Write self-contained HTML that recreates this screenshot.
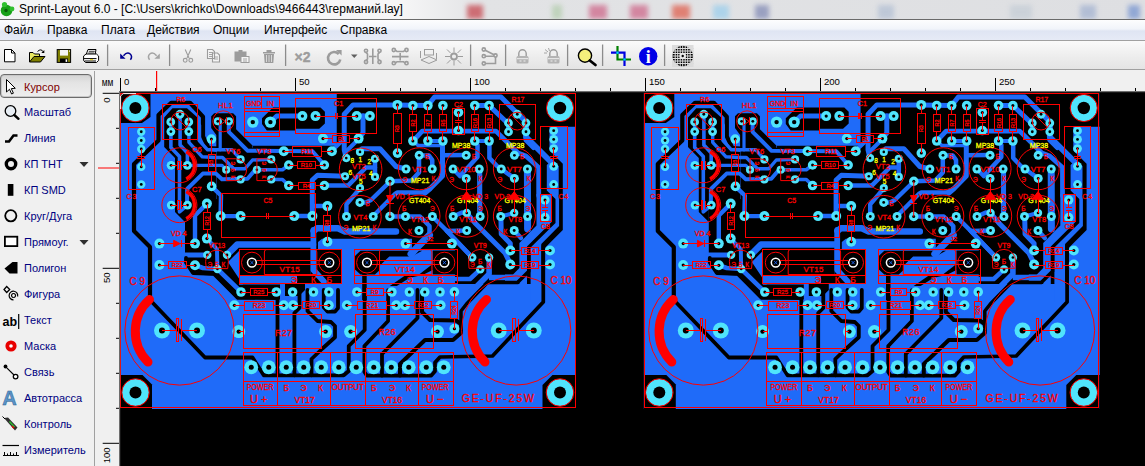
<!DOCTYPE html>
<html lang="ru"><head><meta charset="utf-8"><title>Sprint-Layout 6.0</title>
<style>
html,body{margin:0;padding:0;}
body{width:1145px;height:466px;overflow:hidden;position:relative;background:#f0f0f0;font-family:"Liberation Sans",sans-serif;font-size:12px;color:#000;}
#title{position:absolute;left:0;top:0;width:1145px;height:19px;background:linear-gradient(90deg,#f4f5f6 0,#f6f6f7 35%,#e2e3e5 42%,#dedfe2 100%);overflow:hidden;}
#title i{position:absolute;top:5px;height:14px;filter:blur(2.5px);opacity:.8;}
#title .txt{position:absolute;left:19px;top:2px;font-size:12px;white-space:nowrap;letter-spacing:0px;}
#tline{position:absolute;left:0;top:19px;width:1145px;height:1px;background:#6a6a6a;}
#menu{position:absolute;left:0;top:20px;width:1145px;height:20px;background:linear-gradient(#fdfdfe 0%,#f1f4fa 45%,#dfe5f3 55%,#e6eaf6 100%);}
#menu span{position:absolute;top:3px;font-size:12px;white-space:nowrap;}
#mline{position:absolute;left:0;top:40px;width:1145px;height:1px;background:#a0a0a0;}
#tool{position:absolute;left:0;top:41px;width:1145px;height:28px;background:linear-gradient(#fafafa,#ececec 60%,#e4e4e4);}
#tbline{position:absolute;left:0;top:69px;width:1145px;height:1px;background:#a0a0a0;}
#left{position:absolute;left:0;top:70px;width:94px;height:396px;background:#f0f0f0;}
#lsep{position:absolute;left:94px;top:71px;width:1px;height:395px;background:#a0a0a0;}
.it{position:absolute;left:24px;font-size:11px;color:#000080;white-space:nowrap;}
#curbtn{position:absolute;left:0px;top:74px;width:92px;height:24px;border:1.5px solid #6c6c6c;border-radius:4px;box-sizing:border-box;background:linear-gradient(#d4d4d4,#e4e4e4 35%,#eeeeee);box-shadow:inset 0 0 0 1px #c8c8c8;}
#svgall{position:absolute;left:0;top:0;}
</style></head><body>
<div id="title"><i style="left:467px;width:16px;background:#c85058"></i><i style="left:552px;width:10px;background:#a8c8a0;opacity:.6"></i><i style="left:589px;width:18px;background:#d07090"></i><i style="left:630px;width:18px;background:#d07090"></i><i style="left:672px;width:18px;background:#e06858"></i><i style="left:713px;width:16px;background:#a0d0ec"></i><i style="left:755px;width:14px;background:#8890b8"></i><i style="left:878px;width:16px;background:#a8b8d0;opacity:.6"></i><i style="left:1010px;width:22px;background:#b8c4d0;opacity:.5"></i><i style="left:1080px;width:16px;background:#a0b0d0;opacity:.7"></i><i style="left:1128px;width:12px;background:#7090d0;opacity:.7"></i><span class="txt">Sprint-Layout 6.0 - [C:\Users\krichko\Downloads\9466443\германий.lay]</span></div>
<div id="tline"></div>
<div id="menu"><span style="left:4px">Файл</span><span style="left:47px">Правка</span><span style="left:101px">Плата</span><span style="left:147px">Действия</span><span style="left:213px">Опции</span><span style="left:264px">Интерфейс</span><span style="left:340px">Справка</span></div>
<div id="mline"></div>
<div id="tool"></div>
<div id="tbline"></div>
<div id="left"></div>
<div id="lsep"></div>
<div id="curbtn"></div>
<span class="it" style="top:81px;color:#800000">Курсор</span>
<span class="it" style="top:106px">Масштаб</span>
<span class="it" style="top:132px">Линия</span>
<span class="it" style="top:158px">КП ТНТ</span>
<span class="it" style="top:184px">КП SMD</span>
<span class="it" style="top:210px">Круг/Дуга</span>
<span class="it" style="top:236px">Прямоуг.</span>
<span class="it" style="top:262px">Полигон</span>
<span class="it" style="top:288px">Фигура</span>
<span class="it" style="top:314px">Текст</span>
<span class="it" style="top:340px">Маска</span>
<span class="it" style="top:366px">Связь</span>
<span class="it" style="top:392px">Автотрасса</span>
<span class="it" style="top:418px">Контроль</span>
<span class="it" style="top:444px">Измеритель</span>
<svg id="svgall" width="1145" height="466" viewBox="0 0 1145 466" font-family="Liberation Sans, sans-serif">
<!-- canvas -->
<rect x="119" y="92" width="1026" height="374" fill="#000"/>
<g><rect x="120" y="93" width="456" height="316" fill="#1f6bf9"/>
<polygon points="120,93 150.5,93 150.5,117 142,123 120,123" fill="#000"/>
<polygon points="164.2,117.5 172.5,108.2 187,108.2 197.5,117.4 197.5,141 207,150.5 216.5,152 216.5,200 185,200 185,222 175,212 175,158 164.2,147" fill="#000"/>
<polygon points="336.75,93 576,93 576,126.75 549.5,126.75 549.5,150.5 562.8,163.8 562.8,230 544.8,248 544.8,284 455,284 455,249 412,249 412,238.7 322,238.7 318,242 318,249 239,249 239,284.5 280,284.5 280,299.5 237,299.5 213.75,275.5 193,274.5 185,262.5 185,199 216.8,199 216.8,147.7 253,147.7 253,145.8 336.75,145.8" fill="#000"/>
<polygon points="239,249 310.6,249 310.6,275.75 239,275.75" fill="#000"/>
<polygon points="317,249 341.5,249 341.5,284 297,284 297,276 310.6,276 310.6,249" fill="#000"/>
<polygon points="285,284 305,284 305,290 299,296 285,296" fill="#000"/>
<polygon points="354.5,256.4 360.5,250.8 422.2,250.8 411.8,256.4 389.3,256.4 379.9,265.4 379.9,269.9 374.9,274.4 366.7,274.4 366.7,300 362.2,300 362.2,274.4 360.5,274.4 354.5,268.9" fill="#000"/>
<polygon points="432.7,250.5 457.1,250.5 457.1,274.4 432.7,274.4" fill="#000"/>
<polygon points="432.7,263.9 419.7,273.9 405.8,274.9 389.8,286 396.8,286 409.8,277.8 422.7,274.9 432.7,269.9" fill="#000"/>
<polygon points="211.2,116.3 214.2,113.3 233.1,113.3 236.1,116.3 236.1,129.2 252.5,145.6 252.5,148 216.3,148 216.3,135 211.2,128" fill="#000"/>
<polygon points="262,118.2 262,123.9 266.8,130.5 296,130.5 296,128.7 319.25,128.7 324.9,123.6 324.9,111.75 320.5,107.4 273,107.4" fill="#000"/>
<polyline points="150,300 150,247 134,231 134,164 158.5,140.5 158.5,115 171.25,102.75 190,102.75 203,116.75 203,136.4 208,146.8" fill="none" stroke="#000" stroke-width="4.2" stroke-linejoin="round" stroke-linecap="round"/>
<polyline points="207,146.9 218,147.2" fill="none" stroke="#000" stroke-width="1.6" stroke-linejoin="round" stroke-linecap="butt"/>
<polyline points="270.4,122.1 276.75,116 302.4,116" fill="none" stroke="#1f6bf9" stroke-width="4.8" stroke-linejoin="round" stroke-linecap="round"/>
<polyline points="170.9,121.75 170.9,147.5 179.5,156.5 179.5,212 187.5,205.1" fill="none" stroke="#1f6bf9" stroke-width="3.6" stroke-linejoin="round" stroke-linecap="round"/>
<polyline points="180.1,114.25 180.1,145 187.4,153 187.4,165.3" fill="none" stroke="#1f6bf9" stroke-width="3.6" stroke-linejoin="round" stroke-linecap="round"/>
<polyline points="188.9,121.75 188.9,142.3 202.3,156.8 215,157.5 222.5,157.5 233.75,168.75 245,168.75 252.5,160 271.25,159.4" fill="none" stroke="#1f6bf9" stroke-width="3.4" stroke-linejoin="round" stroke-linecap="round"/>
<polyline points="199.5,125 199.5,140.8 207.6,149.8 232,149.8 240.6,159.4" fill="none" stroke="#1f6bf9" stroke-width="3.4" stroke-linejoin="round" stroke-linecap="round"/>
<polyline points="220.2,121.3 220.2,149.8" fill="none" stroke="#1f6bf9" stroke-width="3.2" stroke-linejoin="round" stroke-linecap="round"/>
<polyline points="228.8,121.3 228.8,131.8 247.8,150.8 312.5,151.25 324.4,165" fill="none" stroke="#1f6bf9" stroke-width="4" stroke-linejoin="round" stroke-linecap="round"/>
<polyline points="187.4,165.3 222,165.3 226.25,169.75" fill="none" stroke="#1f6bf9" stroke-width="3.2" stroke-linejoin="round" stroke-linecap="round"/>
<polyline points="187.1,205 187.1,189 202.8,173.6 216,173.6 222,179.3 247.5,178.75 255,170 256.9,169.75" fill="none" stroke="#1f6bf9" stroke-width="4" stroke-linejoin="round" stroke-linecap="round"/>
<polyline points="256.9,169.75 282.5,169.75 288.75,165" fill="none" stroke="#1f6bf9" stroke-width="3.5" stroke-linejoin="round" stroke-linecap="round"/>
<polyline points="271.25,179.4 282.5,179.4 288.75,185.6" fill="none" stroke="#1f6bf9" stroke-width="3.5" stroke-linejoin="round" stroke-linecap="round"/>
<polyline points="211.6,186.4 221,195.5 220.6,216.1 240.6,216.1" fill="none" stroke="#1f6bf9" stroke-width="4.4" stroke-linejoin="round" stroke-linecap="round"/>
<polyline points="397.4,104.9 353,104.9 344.25,114.25 344.25,150 346.25,158.1" fill="none" stroke="#1f6bf9" stroke-width="5" stroke-linejoin="round" stroke-linecap="round"/>
<polyline points="359,138.75 346,151.5" fill="none" stroke="#1f6bf9" stroke-width="4" stroke-linejoin="round" stroke-linecap="round"/>
<polyline points="331.25,151.25 341,142" fill="none" stroke="#1f6bf9" stroke-width="4" stroke-linejoin="round" stroke-linecap="round"/>
<polyline points="356.75,116.1 369.9,116.1" fill="none" stroke="#1f6bf9" stroke-width="5" stroke-linejoin="round" stroke-linecap="round"/>
<polyline points="363,116.1 363,133 358.6,138.6" fill="none" stroke="#1f6bf9" stroke-width="5" stroke-linejoin="round" stroke-linecap="round"/>
<polyline points="397.4,104.9 427.9,105.5 434.5,97 501,97 526,122 526,140 533.5,147.5" fill="none" stroke="#1f6bf9" stroke-width="5" stroke-linejoin="round" stroke-linecap="round"/>
<polyline points="474.75,105.5 489.1,105.5 508.5,124 508.5,131.75" fill="none" stroke="#1f6bf9" stroke-width="5" stroke-linejoin="round" stroke-linecap="round"/>
<polyline points="412.9,141.1 422.25,131.1 496,131.1 518,153 526,156 538.7,167.5 538.7,196" fill="none" stroke="#1f6bf9" stroke-width="4.8" stroke-linejoin="round" stroke-linecap="round"/>
<polyline points="427.9,141.1 442.9,141.1" fill="none" stroke="#1f6bf9" stroke-width="4" stroke-linejoin="round" stroke-linecap="round"/>
<polyline points="474.75,141.1 489.1,141.1" fill="none" stroke="#1f6bf9" stroke-width="4" stroke-linejoin="round" stroke-linecap="round"/>
<polyline points="324.4,185.6 348,185.6 366,167.5 375,167.5" fill="none" stroke="#1f6bf9" stroke-width="4.5" stroke-linejoin="round" stroke-linecap="round"/>
<polyline points="375,158.75 375,176.9" fill="none" stroke="#1f6bf9" stroke-width="4.5" stroke-linejoin="round" stroke-linecap="round"/>
<polyline points="312.3,216 312.3,180 317.5,175.25 345,176.25" fill="none" stroke="#1f6bf9" stroke-width="5" stroke-linejoin="round" stroke-linecap="round"/>
<polyline points="360,151.9 362,148.75 380,148.75 396,166.5 406,169" fill="none" stroke="#1f6bf9" stroke-width="5" stroke-linejoin="round" stroke-linecap="round"/>
<polyline points="419,155.6 419,172.5 411.5,180.5 390,181.25" fill="none" stroke="#1f6bf9" stroke-width="4.5" stroke-linejoin="round" stroke-linecap="round"/>
<polyline points="419,155.6 429,155.6 432.25,160 432.25,169" fill="none" stroke="#1f6bf9" stroke-width="4.5" stroke-linejoin="round" stroke-linecap="round"/>
<polyline points="390,181.5 371,200 366,202.5 359.6,202.5" fill="none" stroke="#1f6bf9" stroke-width="4.4" stroke-linejoin="round" stroke-linecap="round"/>
<polyline points="442.5,140.6 442.5,176 430,188.75 425,193" fill="none" stroke="#1f6bf9" stroke-width="5" stroke-linejoin="round" stroke-linecap="round"/>
<polyline points="442.5,155.25 466.25,155" fill="none" stroke="#1f6bf9" stroke-width="4.5" stroke-linejoin="round" stroke-linecap="round"/>
<polyline points="413.1,140.6 418,145.5 442.5,145.5" fill="none" stroke="#1f6bf9" stroke-width="3.5" stroke-linejoin="round" stroke-linecap="round"/>
<polyline points="474.75,140.6 477.5,145 477.5,157 460,176 453.1,169" fill="none" stroke="#1f6bf9" stroke-width="4.5" stroke-linejoin="round" stroke-linecap="round"/>
<polyline points="479.4,169 479.4,216.5" fill="none" stroke="#1f6bf9" stroke-width="4.5" stroke-linejoin="round" stroke-linecap="round"/>
<polyline points="489.4,140.6 489.4,158 497,166 501.25,169 514.4,178.4" fill="none" stroke="#1f6bf9" stroke-width="4.5" stroke-linejoin="round" stroke-linecap="round"/>
<polyline points="527.4,169.4 527.6,229" fill="none" stroke="#1f6bf9" stroke-width="7" stroke-linejoin="round" stroke-linecap="round"/>
<polyline points="526,122 526,137 553,164" fill="none" stroke="#1f6bf9" stroke-width="5.8" stroke-linejoin="round" stroke-linecap="round"/>
<polyline points="195,243.6 195,215.5 206.9,203.6" fill="none" stroke="#1f6bf9" stroke-width="4.4" stroke-linejoin="round" stroke-linecap="round"/>
<polyline points="184,255 207.3,254.9" fill="none" stroke="#1f6bf9" stroke-width="5" stroke-linejoin="round" stroke-linecap="round"/>
<polyline points="206.8,238.6 217,249.2 217.4,269" fill="none" stroke="#1f6bf9" stroke-width="4" stroke-linejoin="round" stroke-linecap="round"/>
<polyline points="195,265.3 203,268 217.4,269 241,291.9" fill="none" stroke="#1f6bf9" stroke-width="4.6" stroke-linejoin="round" stroke-linecap="round"/>
<polyline points="227,254.9 237.2,244.6 313,244.6" fill="none" stroke="#1f6bf9" stroke-width="6.5" stroke-linejoin="round" stroke-linecap="round"/>
<polygon points="228,262 239,251 239,284.4 243,284.4" fill="#1f6bf9"/>
<polyline points="313.4,230 313.4,270 328.9,287 328.9,292" fill="none" stroke="#1f6bf9" stroke-width="5.8" stroke-linejoin="round" stroke-linecap="round"/>
<polyline points="313.6,231 317,228.3 338,228.3 345,231.5 396,231.5" fill="none" stroke="#1f6bf9" stroke-width="6.5" stroke-linejoin="round" stroke-linecap="round"/>
<polyline points="313.5,286 313.5,292" fill="none" stroke="#1f6bf9" stroke-width="8" stroke-linejoin="round" stroke-linecap="butt"/>
<polyline points="327.4,206.1 313,206.1" fill="none" stroke="#1f6bf9" stroke-width="4.5" stroke-linejoin="round" stroke-linecap="round"/>
<polyline points="294.25,216.1 312.4,216.1" fill="none" stroke="#1f6bf9" stroke-width="4.5" stroke-linejoin="round" stroke-linecap="round"/>
<polyline points="346.4,216.7 346.4,204.4 360.2,188.1" fill="none" stroke="#1f6bf9" stroke-width="4.4" stroke-linejoin="round" stroke-linecap="round"/>
<polyline points="373,216.3 395,194 397.5,192.5 423,192.5 430,188.75" fill="none" stroke="#1f6bf9" stroke-width="4.4" stroke-linejoin="round" stroke-linecap="round"/>
<polyline points="389.9,216.5 405.6,216.5 420,216.5 429.5,226 429.5,235 418,246.5 413.7,253" fill="none" stroke="#1f6bf9" stroke-width="4.5" stroke-linejoin="round" stroke-linecap="round"/>
<polyline points="429.5,235 418,246.5 411,254" fill="none" stroke="#1f6bf9" stroke-width="7" stroke-linejoin="round" stroke-linecap="round"/>
<polyline points="432.5,216.5 447,231 466.9,230.5" fill="none" stroke="#1f6bf9" stroke-width="4.5" stroke-linejoin="round" stroke-linecap="round"/>
<polyline points="447,231 472.25,257.5" fill="none" stroke="#1f6bf9" stroke-width="4.5" stroke-linejoin="round" stroke-linecap="round"/>
<polyline points="453.1,216.5 462,212.5 466.75,213" fill="none" stroke="#1f6bf9" stroke-width="4.5" stroke-linejoin="round" stroke-linecap="round"/>
<polyline points="480,216.5 480,169" fill="none" stroke="#1f6bf9" stroke-width="4.5" stroke-linejoin="round" stroke-linecap="round"/>
<polyline points="500.7,216.5 514.2,213" fill="none" stroke="#1f6bf9" stroke-width="4" stroke-linejoin="round" stroke-linecap="round"/>
<polygon points="536.5,194 551.6,194 551.6,222 527,246.5 527,285 519.4,285 519.4,243 536.5,225.5" fill="#1f6bf9"/>
<polygon points="546.8,165 552,160 558.7,166 558.7,196 559.1,197 559.1,226 541.3,244 541.3,302 530.6,302 530.6,247.5 555.5,223 555.5,199 546.8,190.5" fill="#1f6bf9"/>
<polyline points="514.2,230.5 521,238" fill="none" stroke="#1f6bf9" stroke-width="4.5" stroke-linejoin="round" stroke-linecap="round"/>
<polyline points="523,275 513.5,277.5 489,277.5" fill="none" stroke="#1f6bf9" stroke-width="5.5" stroke-linejoin="round" stroke-linecap="butt"/>
<polygon points="519.4,268 527,268 527,272 517,281 505,281 505,274.5 513,274.5" fill="#1f6bf9"/>
<polyline points="487.5,282.5 466.5,304 461,311 461,324" fill="none" stroke="#000" stroke-width="3.5" stroke-linejoin="round" stroke-linecap="round"/>
<polyline points="528.8,253.75 528.8,271.25 517.5,282.5 487.5,282.5" fill="none" stroke="#000" stroke-width="3.5" stroke-linejoin="round" stroke-linecap="round"/>
<polyline points="489.1,257.5 489.1,274 461,302" fill="none" stroke="#1f6bf9" stroke-width="5.6" stroke-linejoin="round" stroke-linecap="round"/>
<polyline points="480.25,269.4 470,279 456,279" fill="none" stroke="#1f6bf9" stroke-width="4.5" stroke-linejoin="round" stroke-linecap="round"/>
<polyline points="447,231 472.25,257.5" fill="none" stroke="#1f6bf9" stroke-width="4.5" stroke-linejoin="round" stroke-linecap="round"/>
<polyline points="500.9,216.5 501.25,234 510.3,243.5 510.3,250.5" fill="none" stroke="#1f6bf9" stroke-width="5" stroke-linejoin="round" stroke-linecap="round"/>
<polyline points="466.75,213 475,223 505,253 510.3,263.7" fill="none" stroke="#1f6bf9" stroke-width="5" stroke-linejoin="round" stroke-linecap="round"/>
<polygon points="120,375 142.5,375 152,384.5 152,409 120,409" fill="#000"/>
<polygon points="542.5,385 552.5,375 576,375 576,409 542.5,409" fill="#000"/>
<polyline points="186,258 186,262.5 193,273 213.75,273.75 237.5,297.5 277.5,298 277.5,375.3" fill="none" stroke="#000" stroke-width="3.8" stroke-linejoin="round" stroke-linecap="round"/>
<polyline points="150,300 205,357.5 252.5,357.5 263.75,375.3 343.75,375.3 348.75,371 348.75,346 364.7,330 364.7,296" fill="none" stroke="#000" stroke-width="3.8" stroke-linejoin="round" stroke-linecap="round"/>
<polyline points="294.4,375.3 294.4,313 299.5,308 299.5,290" fill="none" stroke="#000" stroke-width="3.8" stroke-linejoin="round" stroke-linecap="round"/>
<polyline points="311.5,375.3 311.5,359 322.5,348.5 335,337.25 335,326 331,322 317.5,321 307.5,311 307.5,290" fill="none" stroke="#000" stroke-width="3.8" stroke-linejoin="round" stroke-linecap="round"/>
<polyline points="323.75,290 323.75,307.25 327.5,311.6 335,311.6 338,308 338,290" fill="none" stroke="#000" stroke-width="3.8" stroke-linejoin="round" stroke-linecap="round"/>
<polyline points="388.1,290 388.1,321 364.4,346 364.4,372 366.9,375.6 431.25,375.6 435,371.25 435,362.5 440,357 492.5,356 543.3,302 543.3,246" fill="none" stroke="#000" stroke-width="3.7" stroke-linejoin="round" stroke-linecap="round"/>
<polyline points="417.5,290 417.5,318 382,354 382,375.6" fill="none" stroke="#000" stroke-width="3.8" stroke-linejoin="round" stroke-linecap="round"/>
<polyline points="422,290 422,312 430,320 456,320.5 461,324 461,333 453,340 425,340 400,364 400,375.6" fill="none" stroke="#000" stroke-width="4" stroke-linejoin="round" stroke-linecap="round"/>
<circle cx="135.4" cy="108" r="13.4" fill="#50e4fc"/><circle cx="135.4" cy="108" r="6" fill="#000"/>
<circle cx="180" cy="114.25" r="4.4" fill="#50e4fc"/><circle cx="180" cy="114.25" r="1.4" fill="#000"/>
<circle cx="170.8" cy="121.9" r="4.4" fill="#50e4fc"/><circle cx="170.8" cy="121.9" r="1.4" fill="#000"/>
<circle cx="188.8" cy="121.9" r="4.4" fill="#50e4fc"/><circle cx="188.8" cy="121.9" r="1.4" fill="#000"/>
<circle cx="170.9" cy="131.6" r="4.4" fill="#50e4fc"/><circle cx="170.9" cy="131.6" r="1.4" fill="#000"/>
<circle cx="188.8" cy="131.6" r="4.4" fill="#50e4fc"/><circle cx="188.8" cy="131.6" r="1.4" fill="#000"/>
<circle cx="217.8" cy="121.3" r="4" fill="#50e4fc"/><circle cx="217.8" cy="121.3" r="1.4" fill="#000"/>
<circle cx="229" cy="121.3" r="4" fill="#50e4fc"/><circle cx="229" cy="121.3" r="1.4" fill="#000"/>
<circle cx="211.4" cy="139.1" r="4.8" fill="#50e4fc"/><circle cx="211.4" cy="139.1" r="1.5" fill="#000"/>
<circle cx="252.8" cy="122.1" r="5.7" fill="#50e4fc"/><circle cx="252.8" cy="122.1" r="2.2" fill="#000"/>
<circle cx="270.4" cy="122.1" r="5.7" fill="#50e4fc"/><circle cx="270.4" cy="122.1" r="2.2" fill="#000"/>
<circle cx="302.4" cy="116.1" r="5" fill="#50e4fc"/><circle cx="302.4" cy="116.1" r="1.6" fill="#000"/>
<circle cx="315.5" cy="116.1" r="5" fill="#50e4fc"/><circle cx="315.5" cy="116.1" r="1.6" fill="#000"/>
<circle cx="356.75" cy="116.1" r="5" fill="#50e4fc"/><circle cx="356.75" cy="116.1" r="1.6" fill="#000"/>
<circle cx="369.9" cy="116.1" r="5" fill="#50e4fc"/><circle cx="369.9" cy="116.1" r="1.6" fill="#000"/>
<circle cx="323" cy="138.6" r="5" fill="#50e4fc"/><circle cx="323" cy="138.6" r="1.6" fill="#000"/>
<circle cx="358.6" cy="138.6" r="5" fill="#50e4fc"/><circle cx="358.6" cy="138.6" r="1.6" fill="#000"/>
<circle cx="397.4" cy="104.9" r="5" fill="#50e4fc"/><circle cx="397.4" cy="104.9" r="1.6" fill="#000"/>
<circle cx="412.9" cy="105.5" r="4.8" fill="#50e4fc"/><circle cx="412.9" cy="105.5" r="1.5" fill="#000"/>
<circle cx="412.9" cy="141" r="4.8" fill="#50e4fc"/><circle cx="412.9" cy="141" r="1.5" fill="#000"/>
<circle cx="427.9" cy="105.5" r="4.8" fill="#50e4fc"/><circle cx="427.9" cy="105.5" r="1.5" fill="#000"/>
<circle cx="427.9" cy="141" r="4.8" fill="#50e4fc"/><circle cx="427.9" cy="141" r="1.5" fill="#000"/>
<circle cx="442.9" cy="105.5" r="4.8" fill="#50e4fc"/><circle cx="442.9" cy="105.5" r="1.5" fill="#000"/>
<circle cx="442.9" cy="141" r="4.8" fill="#50e4fc"/><circle cx="442.9" cy="141" r="1.5" fill="#000"/>
<circle cx="474.75" cy="105.5" r="4.8" fill="#50e4fc"/><circle cx="474.75" cy="105.5" r="1.5" fill="#000"/>
<circle cx="474.75" cy="141" r="4.8" fill="#50e4fc"/><circle cx="474.75" cy="141" r="1.5" fill="#000"/>
<circle cx="489.1" cy="105.5" r="4.8" fill="#50e4fc"/><circle cx="489.1" cy="105.5" r="1.5" fill="#000"/>
<circle cx="489.1" cy="141" r="4.8" fill="#50e4fc"/><circle cx="489.1" cy="141" r="1.5" fill="#000"/>
<circle cx="458.5" cy="112.4" r="4.8" fill="#50e4fc"/><circle cx="458.5" cy="112.4" r="1.5" fill="#000"/>
<circle cx="458.5" cy="130.5" r="4.8" fill="#50e4fc"/><circle cx="458.5" cy="130.5" r="1.5" fill="#000"/>
<circle cx="517.25" cy="114.25" r="4.4" fill="#50e4fc"/><circle cx="517.25" cy="114.25" r="1.4" fill="#000"/>
<circle cx="508.5" cy="123" r="4.4" fill="#50e4fc"/><circle cx="508.5" cy="123" r="1.4" fill="#000"/>
<circle cx="526" cy="123" r="4.4" fill="#50e4fc"/><circle cx="526" cy="123" r="1.4" fill="#000"/>
<circle cx="508.5" cy="131.75" r="4.4" fill="#50e4fc"/><circle cx="508.5" cy="131.75" r="1.4" fill="#000"/>
<circle cx="526" cy="131.75" r="4.4" fill="#50e4fc"/><circle cx="526" cy="131.75" r="1.4" fill="#000"/>
<circle cx="560" cy="108" r="13.2" fill="#50e4fc"/><circle cx="560" cy="108" r="6.2" fill="#000"/>
<circle cx="553.7" cy="130.7" r="4.4" fill="#50e4fc"/><circle cx="553.7" cy="130.7" r="1.4" fill="#000"/>
<circle cx="553.7" cy="139.4" r="4.4" fill="#50e4fc"/><circle cx="553.7" cy="139.4" r="1.4" fill="#000"/>
<circle cx="553.7" cy="148.6" r="4.4" fill="#50e4fc"/><circle cx="553.7" cy="148.6" r="1.4" fill="#000"/>
<circle cx="553.7" cy="166.3" r="4.4" fill="#50e4fc"/><circle cx="553.7" cy="166.3" r="1.4" fill="#000"/>
<circle cx="553.7" cy="184.5" r="4.4" fill="#50e4fc"/><circle cx="553.7" cy="184.5" r="1.4" fill="#000"/>
<circle cx="283.75" cy="151.25" r="5" fill="#50e4fc"/><circle cx="283.75" cy="151.25" r="1.6" fill="#000"/>
<circle cx="331.9" cy="151.25" r="5" fill="#50e4fc"/><circle cx="331.9" cy="151.25" r="1.6" fill="#000"/>
<circle cx="288.75" cy="165" r="4.75" fill="#50e4fc"/><circle cx="288.75" cy="165" r="1.5" fill="#000"/>
<circle cx="324.4" cy="165" r="4.75" fill="#50e4fc"/><circle cx="324.4" cy="165" r="1.5" fill="#000"/>
<circle cx="288.75" cy="185.6" r="4.75" fill="#50e4fc"/><circle cx="288.75" cy="185.6" r="1.5" fill="#000"/>
<circle cx="324.4" cy="185.6" r="4.75" fill="#50e4fc"/><circle cx="324.4" cy="185.6" r="1.5" fill="#000"/>
<circle cx="240.6" cy="159.4" r="4.1" fill="#50e4fc"/><circle cx="240.6" cy="159.4" r="1.3" fill="#000"/>
<circle cx="226.25" cy="169.75" r="4.1" fill="#50e4fc"/><circle cx="226.25" cy="169.75" r="1.3" fill="#000"/>
<circle cx="240.6" cy="179.4" r="4.1" fill="#50e4fc"/><circle cx="240.6" cy="179.4" r="1.3" fill="#000"/>
<circle cx="271.25" cy="159.4" r="4.1" fill="#50e4fc"/><circle cx="271.25" cy="159.4" r="1.3" fill="#000"/>
<circle cx="256.9" cy="169.75" r="4.1" fill="#50e4fc"/><circle cx="256.9" cy="169.75" r="1.3" fill="#000"/>
<circle cx="271.25" cy="179.4" r="4.1" fill="#50e4fc"/><circle cx="271.25" cy="179.4" r="1.3" fill="#000"/>
<circle cx="360" cy="151.9" r="4.1" fill="#50e4fc"/><circle cx="360" cy="151.9" r="1.3" fill="#000"/>
<circle cx="346.25" cy="158.1" r="4.1" fill="#50e4fc"/><circle cx="346.25" cy="158.1" r="1.3" fill="#000"/>
<circle cx="375" cy="158.75" r="4.1" fill="#50e4fc"/><circle cx="375" cy="158.75" r="1.3" fill="#000"/>
<circle cx="345" cy="176.25" r="4.1" fill="#50e4fc"/><circle cx="345" cy="176.25" r="1.3" fill="#000"/>
<circle cx="375" cy="176.9" r="4.1" fill="#50e4fc"/><circle cx="375" cy="176.9" r="1.3" fill="#000"/>
<circle cx="360" cy="188.1" r="4.1" fill="#50e4fc"/><circle cx="360" cy="188.1" r="1.3" fill="#000"/>
<circle cx="397.5" cy="153.1" r="4.8" fill="#50e4fc"/><circle cx="397.5" cy="153.1" r="1.5" fill="#000"/>
<circle cx="390" cy="181.25" r="4.75" fill="#50e4fc"/><circle cx="390" cy="181.25" r="1.5" fill="#000"/>
<circle cx="419.2" cy="155.3" r="4.5" fill="#50e4fc"/><circle cx="419.2" cy="155.3" r="1.4" fill="#000"/>
<circle cx="406.05" cy="169" r="4.5" fill="#50e4fc"/><circle cx="406.05" cy="169" r="1.4" fill="#000"/>
<circle cx="432.25" cy="169" r="4.5" fill="#50e4fc"/><circle cx="432.25" cy="169" r="1.4" fill="#000"/>
<circle cx="466.25" cy="155.3" r="4.5" fill="#50e4fc"/><circle cx="466.25" cy="155.3" r="1.4" fill="#000"/>
<circle cx="453.1" cy="169" r="4.5" fill="#50e4fc"/><circle cx="453.1" cy="169" r="1.4" fill="#000"/>
<circle cx="479.3" cy="169" r="4.5" fill="#50e4fc"/><circle cx="479.3" cy="169" r="1.4" fill="#000"/>
<circle cx="514.4" cy="155.3" r="4.5" fill="#50e4fc"/><circle cx="514.4" cy="155.3" r="1.4" fill="#000"/>
<circle cx="501.25" cy="169" r="4.5" fill="#50e4fc"/><circle cx="501.25" cy="169" r="1.4" fill="#000"/>
<circle cx="527.45" cy="169" r="4.5" fill="#50e4fc"/><circle cx="527.45" cy="169" r="1.4" fill="#000"/>
<circle cx="466.25" cy="178.4" r="4.5" fill="#50e4fc"/><circle cx="466.25" cy="178.4" r="1.4" fill="#000"/>
<circle cx="514.4" cy="178.4" r="4.5" fill="#50e4fc"/><circle cx="514.4" cy="178.4" r="1.4" fill="#000"/>
<circle cx="171.1" cy="165.3" r="4.4" fill="#50e4fc"/><circle cx="171.1" cy="165.3" r="1.4" fill="#000"/>
<circle cx="187.4" cy="165.3" r="4.4" fill="#50e4fc"/><circle cx="187.4" cy="165.3" r="1.4" fill="#000"/>
<circle cx="171.25" cy="205.1" r="4.4" fill="#50e4fc"/><circle cx="171.25" cy="205.1" r="1.4" fill="#000"/>
<circle cx="187.5" cy="205.1" r="4.4" fill="#50e4fc"/><circle cx="187.5" cy="205.1" r="1.4" fill="#000"/>
<circle cx="211.6" cy="186.4" r="4.8" fill="#50e4fc"/><circle cx="211.6" cy="186.4" r="1.5" fill="#000"/>
<circle cx="141.25" cy="131.75" r="4.2" fill="#50e4fc"/><circle cx="141.25" cy="131.75" r="1.4" fill="#000"/>
<circle cx="141.25" cy="140.5" r="4.2" fill="#50e4fc"/><circle cx="141.25" cy="140.5" r="1.4" fill="#000"/>
<circle cx="141.25" cy="149" r="4.2" fill="#50e4fc"/><circle cx="141.25" cy="149" r="1.4" fill="#000"/>
<circle cx="141.25" cy="166.9" r="4.2" fill="#50e4fc"/><circle cx="141.25" cy="166.9" r="1.4" fill="#000"/>
<circle cx="141.25" cy="184.4" r="4.2" fill="#50e4fc"/><circle cx="141.25" cy="184.4" r="1.4" fill="#000"/>
<circle cx="251.25" cy="367.25" r="6.9" fill="#50e4fc"/><circle cx="251.25" cy="367.25" r="2.5" fill="#000"/>
<circle cx="268.75" cy="367.25" r="6.9" fill="#50e4fc"/><circle cx="268.75" cy="367.25" r="2.5" fill="#000"/>
<circle cx="286.25" cy="367.25" r="6.9" fill="#50e4fc"/><circle cx="286.25" cy="367.25" r="2.5" fill="#000"/>
<circle cx="303.75" cy="367.25" r="6.9" fill="#50e4fc"/><circle cx="303.75" cy="367.25" r="2.5" fill="#000"/>
<circle cx="321.25" cy="367.25" r="6.9" fill="#50e4fc"/><circle cx="321.25" cy="367.25" r="2.5" fill="#000"/>
<circle cx="338.75" cy="367.25" r="6.9" fill="#50e4fc"/><circle cx="338.75" cy="367.25" r="2.5" fill="#000"/>
<circle cx="356.25" cy="367.25" r="6.9" fill="#50e4fc"/><circle cx="356.25" cy="367.25" r="2.5" fill="#000"/>
<circle cx="373.75" cy="367.25" r="6.9" fill="#50e4fc"/><circle cx="373.75" cy="367.25" r="2.5" fill="#000"/>
<circle cx="391.25" cy="367.25" r="6.9" fill="#50e4fc"/><circle cx="391.25" cy="367.25" r="2.5" fill="#000"/>
<circle cx="408.75" cy="367.25" r="6.9" fill="#50e4fc"/><circle cx="408.75" cy="367.25" r="2.5" fill="#000"/>
<circle cx="426.25" cy="367.25" r="6.9" fill="#50e4fc"/><circle cx="426.25" cy="367.25" r="2.5" fill="#000"/>
<circle cx="443.75" cy="367.25" r="6.9" fill="#50e4fc"/><circle cx="443.75" cy="367.25" r="2.5" fill="#000"/>
<circle cx="135.5" cy="392.5" r="13.4" fill="#50e4fc"/><circle cx="135.5" cy="392.5" r="6" fill="#000"/>
<circle cx="560" cy="392.5" r="13.4" fill="#50e4fc"/><circle cx="560" cy="392.5" r="6" fill="#000"/>
<circle cx="162" cy="330.5" r="8" fill="#50e4fc"/><circle cx="162" cy="330.5" r="3" fill="#000"/>
<circle cx="197" cy="330.5" r="8" fill="#50e4fc"/><circle cx="197" cy="330.5" r="3" fill="#000"/>
<circle cx="498.75" cy="330.5" r="8" fill="#50e4fc"/><circle cx="498.75" cy="330.5" r="3" fill="#000"/>
<circle cx="533.75" cy="330.5" r="8" fill="#50e4fc"/><circle cx="533.75" cy="330.5" r="3" fill="#000"/>
<circle cx="238.75" cy="331.6" r="6.5" fill="#50e4fc"/><circle cx="238.75" cy="331.6" r="2.2" fill="#000"/>
<circle cx="325.6" cy="331.6" r="6.5" fill="#50e4fc"/><circle cx="325.6" cy="331.6" r="2.2" fill="#000"/>
<circle cx="350.6" cy="331.6" r="6.5" fill="#50e4fc"/><circle cx="350.6" cy="331.6" r="2.2" fill="#000"/>
<circle cx="437.5" cy="331.6" r="6.5" fill="#50e4fc"/><circle cx="437.5" cy="331.6" r="2.2" fill="#000"/>
<circle cx="234.4" cy="305.3" r="5" fill="#50e4fc"/><circle cx="234.4" cy="305.3" r="1.6" fill="#000"/>
<circle cx="283.75" cy="305.3" r="5" fill="#50e4fc"/><circle cx="283.75" cy="305.3" r="1.6" fill="#000"/>
<circle cx="293.1" cy="305.3" r="5" fill="#50e4fc"/><circle cx="293.1" cy="305.3" r="1.6" fill="#000"/>
<circle cx="328.75" cy="305.3" r="5" fill="#50e4fc"/><circle cx="328.75" cy="305.3" r="1.6" fill="#000"/>
<circle cx="346.9" cy="305.3" r="5" fill="#50e4fc"/><circle cx="346.9" cy="305.3" r="1.6" fill="#000"/>
<circle cx="396.25" cy="305.3" r="5" fill="#50e4fc"/><circle cx="396.25" cy="305.3" r="1.6" fill="#000"/>
<circle cx="405" cy="305.3" r="5" fill="#50e4fc"/><circle cx="405" cy="305.3" r="1.6" fill="#000"/>
<circle cx="440.6" cy="305.3" r="5" fill="#50e4fc"/><circle cx="440.6" cy="305.3" r="1.6" fill="#000"/>
<circle cx="454.4" cy="328.75" r="5" fill="#50e4fc"/><circle cx="454.4" cy="328.75" r="1.6" fill="#000"/>
<circle cx="241" cy="292" r="4.8" fill="#50e4fc"/><circle cx="241" cy="292" r="1.5" fill="#000"/>
<circle cx="276.3" cy="292" r="4.8" fill="#50e4fc"/><circle cx="276.3" cy="292" r="1.5" fill="#000"/>
<circle cx="292.6" cy="292" r="4.8" fill="#50e4fc"/><circle cx="292.6" cy="292" r="1.5" fill="#000"/>
<circle cx="313.5" cy="292" r="4.8" fill="#50e4fc"/><circle cx="313.5" cy="292" r="1.5" fill="#000"/>
<circle cx="328.9" cy="292" r="4.8" fill="#50e4fc"/><circle cx="328.9" cy="292" r="1.5" fill="#000"/>
<circle cx="356.9" cy="292" r="4.8" fill="#50e4fc"/><circle cx="356.9" cy="292" r="1.5" fill="#000"/>
<circle cx="391.9" cy="292" r="4.8" fill="#50e4fc"/><circle cx="391.9" cy="292" r="1.5" fill="#000"/>
<circle cx="409.4" cy="292" r="4.8" fill="#50e4fc"/><circle cx="409.4" cy="292" r="1.5" fill="#000"/>
<circle cx="424.75" cy="292" r="4.8" fill="#50e4fc"/><circle cx="424.75" cy="292" r="1.5" fill="#000"/>
<circle cx="440" cy="292" r="4.8" fill="#50e4fc"/><circle cx="440" cy="292" r="1.5" fill="#000"/>
<circle cx="159.4" cy="243.6" r="5" fill="#50e4fc"/><circle cx="159.4" cy="243.6" r="1.6" fill="#000"/>
<circle cx="195" cy="243.6" r="5" fill="#50e4fc"/><circle cx="195" cy="243.6" r="1.6" fill="#000"/>
<circle cx="159.4" cy="265" r="5" fill="#50e4fc"/><circle cx="159.4" cy="265" r="1.6" fill="#000"/>
<circle cx="195" cy="265.3" r="5" fill="#50e4fc"/><circle cx="195" cy="265.3" r="1.6" fill="#000"/>
<circle cx="206.9" cy="203.6" r="5" fill="#50e4fc"/><circle cx="206.9" cy="203.6" r="1.6" fill="#000"/>
<circle cx="206.9" cy="238.6" r="5" fill="#50e4fc"/><circle cx="206.9" cy="238.6" r="1.6" fill="#000"/>
<circle cx="220.6" cy="216.1" r="5" fill="#50e4fc"/><circle cx="220.6" cy="216.1" r="1.6" fill="#000"/>
<circle cx="240.6" cy="216.1" r="5" fill="#50e4fc"/><circle cx="240.6" cy="216.1" r="1.6" fill="#000"/>
<circle cx="294.25" cy="216.1" r="5" fill="#50e4fc"/><circle cx="294.25" cy="216.1" r="1.6" fill="#000"/>
<circle cx="312.4" cy="216.1" r="5" fill="#50e4fc"/><circle cx="312.4" cy="216.1" r="1.6" fill="#000"/>
<circle cx="327.4" cy="206.1" r="5" fill="#50e4fc"/><circle cx="327.4" cy="206.1" r="1.6" fill="#000"/>
<circle cx="327.4" cy="241.75" r="5" fill="#50e4fc"/><circle cx="327.4" cy="241.75" r="1.6" fill="#000"/>
<circle cx="359.9" cy="202.4" r="4.5" fill="#50e4fc"/><circle cx="359.9" cy="202.4" r="1.4" fill="#000"/>
<circle cx="346.5" cy="216.5" r="4.5" fill="#50e4fc"/><circle cx="346.5" cy="216.5" r="1.4" fill="#000"/>
<circle cx="373.25" cy="216.5" r="4.5" fill="#50e4fc"/><circle cx="373.25" cy="216.5" r="1.4" fill="#000"/>
<circle cx="389.9" cy="216.5" r="4.75" fill="#50e4fc"/><circle cx="389.9" cy="216.5" r="1.5" fill="#000"/>
<circle cx="405.5" cy="216.5" r="4.5" fill="#50e4fc"/><circle cx="405.5" cy="216.5" r="1.4" fill="#000"/>
<circle cx="432.4" cy="216.5" r="4.5" fill="#50e4fc"/><circle cx="432.4" cy="216.5" r="1.4" fill="#000"/>
<circle cx="419" cy="230.5" r="4.5" fill="#50e4fc"/><circle cx="419" cy="230.5" r="1.4" fill="#000"/>
<circle cx="453.25" cy="216.5" r="4.5" fill="#50e4fc"/><circle cx="453.25" cy="216.5" r="1.4" fill="#000"/>
<circle cx="480.15" cy="216.5" r="4.5" fill="#50e4fc"/><circle cx="480.15" cy="216.5" r="1.4" fill="#000"/>
<circle cx="466.75" cy="230.5" r="4.5" fill="#50e4fc"/><circle cx="466.75" cy="230.5" r="1.4" fill="#000"/>
<circle cx="500.7" cy="216.5" r="4.5" fill="#50e4fc"/><circle cx="500.7" cy="216.5" r="1.4" fill="#000"/>
<circle cx="527.6" cy="216.5" r="4.5" fill="#50e4fc"/><circle cx="527.6" cy="216.5" r="1.4" fill="#000"/>
<circle cx="514.2" cy="230.5" r="4.5" fill="#50e4fc"/><circle cx="514.2" cy="230.5" r="1.4" fill="#000"/>
<circle cx="466.75" cy="213" r="4.2" fill="#50e4fc"/><circle cx="466.75" cy="213" r="1.3" fill="#000"/>
<circle cx="514.2" cy="213" r="4.2" fill="#50e4fc"/><circle cx="514.2" cy="213" r="1.3" fill="#000"/>
<circle cx="405.6" cy="243.6" r="5" fill="#50e4fc"/><circle cx="405.6" cy="243.6" r="1.6" fill="#000"/>
<circle cx="451.9" cy="243.6" r="5" fill="#50e4fc"/><circle cx="451.9" cy="243.6" r="1.6" fill="#000"/>
<circle cx="545" cy="199.9" r="4.6" fill="#50e4fc"/><circle cx="545" cy="199.9" r="1.5" fill="#000"/>
<circle cx="545" cy="217.4" r="4.6" fill="#50e4fc"/><circle cx="545" cy="217.4" r="1.5" fill="#000"/>
<circle cx="207.3" cy="254.9" r="4.2" fill="#50e4fc"/><circle cx="207.3" cy="254.9" r="1.3" fill="#000"/>
<circle cx="227" cy="254.9" r="4.2" fill="#50e4fc"/><circle cx="227" cy="254.9" r="1.3" fill="#000"/>
<circle cx="217.4" cy="269" r="4.2" fill="#50e4fc"/><circle cx="217.4" cy="269" r="1.3" fill="#000"/>
<circle cx="472.25" cy="257.5" r="4.2" fill="#50e4fc"/><circle cx="472.25" cy="257.5" r="1.3" fill="#000"/>
<circle cx="489.1" cy="257.5" r="4.2" fill="#50e4fc"/><circle cx="489.1" cy="257.5" r="1.3" fill="#000"/>
<circle cx="480.25" cy="269.4" r="4.2" fill="#50e4fc"/><circle cx="480.25" cy="269.4" r="1.3" fill="#000"/>
<circle cx="510.3" cy="250.5" r="5" fill="#50e4fc"/><circle cx="510.3" cy="250.5" r="1.6" fill="#000"/>
<circle cx="510.3" cy="264.5" r="5" fill="#50e4fc"/><circle cx="510.3" cy="264.5" r="1.6" fill="#000"/>
<circle cx="550" cy="250.5" r="5" fill="#50e4fc"/><circle cx="550" cy="250.5" r="1.6" fill="#000"/>
<circle cx="550" cy="264.5" r="5" fill="#50e4fc"/><circle cx="550" cy="264.5" r="1.6" fill="#000"/>
<circle cx="454.4" cy="291.9" r="4.8" fill="#50e4fc"/><circle cx="454.4" cy="291.9" r="1.5" fill="#000"/>
<circle cx="135.4" cy="108" r="13.8" fill="none" stroke="#ff0000" stroke-width="1"/>
<circle cx="560" cy="108" r="13.6" fill="none" stroke="#ff0000" stroke-width="1"/>
<rect x="162.25" y="104.25" width="35.35" height="34.75" fill="none" stroke="#ff0000" stroke-width="1" shape-rendering="crispEdges"/>
<circle cx="180" cy="121" r="9" fill="none" stroke="#ff0000" stroke-width="1"/>
<polyline points="173.5,114.5 186.5,127.5" fill="none" stroke="#ff0000" stroke-width="1"/>
<text x="176.3" y="102.3" font-size="7" fill="#ff0000" stroke="#ff0000" stroke-width=".3" text-anchor="start" font-weight="normal">R6</text>
<circle cx="135.5" cy="392.5" r="13.8" fill="none" stroke="#ff0000" stroke-width="1"/>
<circle cx="560" cy="392.5" r="13.8" fill="none" stroke="#ff0000" stroke-width="1"/>
<rect x="120.5" y="93.5" width="454.5" height="314" fill="none" stroke="#ff0000" stroke-width="1" shape-rendering="crispEdges"/>
<rect x="128" y="127.4" width="26.5" height="61.6" fill="none" stroke="#ff0000" stroke-width="1" shape-rendering="crispEdges"/>
<polyline points="141.25,149 141.25,166.9" fill="none" stroke="#ff0000" stroke-width="1" shape-rendering="crispEdges"/>
<polyline points="137.3,156 145.2,156" fill="none" stroke="#ff0000" stroke-width="1" shape-rendering="crispEdges"/>
<polyline points="137.3,158 145.2,158" fill="none" stroke="#ff0000" stroke-width="1" shape-rendering="crispEdges"/>
<text x="126.5" y="199" font-size="7" fill="#ff0000" stroke="#ff0000" stroke-width=".3" text-anchor="start" font-weight="normal" letter-spacing="1">C3</text>
<circle cx="223.3" cy="121.3" r="10.5" fill="none" stroke="#ff0000" stroke-width="1"/>
<path d="M219.6,117.4 L219.6,125.2 L225.3,121.3 Z" fill="none" stroke="#ff0000" stroke-width="1" stroke-linecap="butt"/>
<polyline points="226,117.4 226,125.2" fill="none" stroke="#ff0000" stroke-width="1" shape-rendering="crispEdges"/>
<text x="218" y="108" font-size="7.8" fill="#ff0000" stroke="#ff0000" stroke-width=".3" text-anchor="start" font-weight="normal" letter-spacing="0.3">HL1</text>
<rect x="244.2" y="96.75" width="35.5" height="39.45" fill="none" stroke="#ff0000" stroke-width="1" shape-rendering="crispEdges"/>
<polyline points="244.2,108.3 279.7,108.3" fill="none" stroke="#ff0000" stroke-width="1" shape-rendering="crispEdges"/>
<polyline points="244.2,111.5 279.7,111.5" fill="none" stroke="#ff0000" stroke-width="1" shape-rendering="crispEdges"/>
<polyline points="244.2,132.3 279.7,132.3" fill="none" stroke="#ff0000" stroke-width="1" shape-rendering="crispEdges"/>
<polyline points="261.5,96.75 261.5,108.3" fill="none" stroke="#ff0000" stroke-width="1" shape-rendering="crispEdges"/>
<text x="246" y="105.8" font-size="7" fill="#ff0000" stroke="#ff0000" stroke-width=".3" text-anchor="start" font-weight="normal">GND</text>
<text x="266.5" y="105.8" font-size="7.5" fill="#ff0000" stroke="#ff0000" stroke-width=".3" text-anchor="start" font-weight="normal">IN</text>
<rect x="295.5" y="98" width="81.25" height="35.6" fill="none" stroke="#ff0000" stroke-width="1" shape-rendering="crispEdges"/>
<polyline points="315.5,116.1 356.75,116.1" fill="none" stroke="#ff0000" stroke-width="1" shape-rendering="crispEdges"/>
<polyline points="335.4,113 335.4,119.3" fill="none" stroke="#ff0000" stroke-width="1.4" shape-rendering="crispEdges"/>
<polyline points="337.4,113 337.4,119.3" fill="none" stroke="#ff0000" stroke-width="1" shape-rendering="crispEdges"/>
<text x="334" y="106.3" font-size="7.3" fill="#ff0000" stroke="#ff0000" stroke-width=".3" text-anchor="start" font-weight="normal">C1</text>
<rect x="332.4" y="135.4" width="17.5" height="6.9" fill="none" stroke="#ff0000" stroke-width="1" shape-rendering="crispEdges"/>
<polyline points="323,138.6 332.4,138.6" fill="none" stroke="#ff0000" stroke-width="1" shape-rendering="crispEdges"/>
<polyline points="349.9,138.6 358.6,138.6" fill="none" stroke="#ff0000" stroke-width="1" shape-rendering="crispEdges"/>
<text x="341.15" y="140.83" font-size="5.5" fill="#ff0000" stroke="#ff0000" stroke-width=".3" text-anchor="middle" font-weight="normal">R1</text>
<rect x="393.2" y="113.6" width="8.4" height="30" fill="none" stroke="#ff0000" stroke-width="1" shape-rendering="crispEdges"/>
<polyline points="397.4,104.9 397.4,113.6" fill="none" stroke="#ff0000" stroke-width="1" shape-rendering="crispEdges"/>
<polyline points="397.4,143.6 397.4,153.1" fill="none" stroke="#ff0000" stroke-width="1" shape-rendering="crispEdges"/>
<text x="399.38" y="128.6" font-size="5.5" fill="#ff0000" stroke="#ff0000" stroke-width=".3" text-anchor="middle" font-weight="normal" transform="rotate(-90 399.38 128.6)">R3</text>
<rect x="409.3" y="114.25" width="7.2" height="17.5" fill="none" stroke="#ff0000" stroke-width="1" shape-rendering="crispEdges"/>
<polyline points="412.9,105.5 412.9,114.25" fill="none" stroke="#ff0000" stroke-width="1" shape-rendering="crispEdges"/>
<polyline points="412.9,131.75 412.9,141" fill="none" stroke="#ff0000" stroke-width="1" shape-rendering="crispEdges"/>
<text x="414.88" y="123" font-size="5.5" fill="#ff0000" stroke="#ff0000" stroke-width=".3" text-anchor="middle" font-weight="normal" transform="rotate(-90 414.88 123)">R2</text>
<rect x="424.3" y="114.25" width="7.2" height="17.5" fill="none" stroke="#ff0000" stroke-width="1" shape-rendering="crispEdges"/>
<polyline points="427.9,105.5 427.9,114.25" fill="none" stroke="#ff0000" stroke-width="1" shape-rendering="crispEdges"/>
<polyline points="427.9,131.75 427.9,141" fill="none" stroke="#ff0000" stroke-width="1" shape-rendering="crispEdges"/>
<text x="429.88" y="123" font-size="5.5" fill="#ff0000" stroke="#ff0000" stroke-width=".3" text-anchor="middle" font-weight="normal" transform="rotate(-90 429.88 123)">R7</text>
<rect x="439.3" y="114.25" width="7.2" height="17.5" fill="none" stroke="#ff0000" stroke-width="1" shape-rendering="crispEdges"/>
<polyline points="442.9,105.5 442.9,114.25" fill="none" stroke="#ff0000" stroke-width="1" shape-rendering="crispEdges"/>
<polyline points="442.9,131.75 442.9,141" fill="none" stroke="#ff0000" stroke-width="1" shape-rendering="crispEdges"/>
<text x="444.88" y="123" font-size="5.5" fill="#ff0000" stroke="#ff0000" stroke-width=".3" text-anchor="middle" font-weight="normal" transform="rotate(-90 444.88 123)">R5</text>
<rect x="471.15" y="114.25" width="7.2" height="17.5" fill="none" stroke="#ff0000" stroke-width="1" shape-rendering="crispEdges"/>
<polyline points="474.75,105.5 474.75,114.25" fill="none" stroke="#ff0000" stroke-width="1" shape-rendering="crispEdges"/>
<polyline points="474.75,131.75 474.75,141" fill="none" stroke="#ff0000" stroke-width="1" shape-rendering="crispEdges"/>
<text x="476.73" y="123" font-size="5.5" fill="#ff0000" stroke="#ff0000" stroke-width=".3" text-anchor="middle" font-weight="normal" transform="rotate(-90 476.73 123)">R16</text>
<rect x="485.5" y="114.25" width="7.2" height="17.5" fill="none" stroke="#ff0000" stroke-width="1" shape-rendering="crispEdges"/>
<polyline points="489.1,105.5 489.1,114.25" fill="none" stroke="#ff0000" stroke-width="1" shape-rendering="crispEdges"/>
<polyline points="489.1,131.75 489.1,141" fill="none" stroke="#ff0000" stroke-width="1" shape-rendering="crispEdges"/>
<text x="491.08" y="123" font-size="5.5" fill="#ff0000" stroke="#ff0000" stroke-width=".3" text-anchor="middle" font-weight="normal" transform="rotate(-90 491.08 123)">R13</text>
<rect x="452.25" y="108.6" width="12.5" height="26.3" fill="none" stroke="#ff0000" stroke-width="1" shape-rendering="crispEdges"/>
<polyline points="458.5,112.4 458.5,120.2" fill="none" stroke="#ff0000" stroke-width="1" shape-rendering="crispEdges"/>
<polyline points="458.5,122.8 458.5,130.5" fill="none" stroke="#ff0000" stroke-width="1" shape-rendering="crispEdges"/>
<polyline points="454.7,120.2 462.3,120.2" fill="none" stroke="#ff0000" stroke-width="1" shape-rendering="crispEdges"/>
<polyline points="454.7,122.8 462.3,122.8" fill="none" stroke="#ff0000" stroke-width="1" shape-rendering="crispEdges"/>
<text x="454" y="106.6" font-size="7" fill="#ff0000" stroke="#ff0000" stroke-width=".3" text-anchor="start" font-weight="normal">C2</text>
<rect x="499.75" y="104.25" width="35.65" height="35" fill="none" stroke="#ff0000" stroke-width="1" shape-rendering="crispEdges"/>
<circle cx="517.25" cy="121.1" r="8.9" fill="none" stroke="#ff0000" stroke-width="1"/>
<polyline points="511,114.8 523.6,127.5" fill="none" stroke="#ff0000" stroke-width="1"/>
<text x="511.6" y="102.4" font-size="7" fill="#ff0000" stroke="#ff0000" stroke-width=".3" text-anchor="start" font-weight="normal">R17</text>
<rect x="540.6" y="126.75" width="26.6" height="61.45" fill="none" stroke="#ff0000" stroke-width="1" shape-rendering="crispEdges"/>
<polyline points="553.75,148.1 553.75,165.6" fill="none" stroke="#ff0000" stroke-width="1" shape-rendering="crispEdges"/>
<polyline points="550,156.3 557.6,156.3" fill="none" stroke="#ff0000" stroke-width="1" shape-rendering="crispEdges"/>
<polyline points="550,158.6 557.6,158.6" fill="none" stroke="#ff0000" stroke-width="1" shape-rendering="crispEdges"/>
<text x="558.5" y="198.5" font-size="7" fill="#ff0000" stroke="#ff0000" stroke-width=".3" text-anchor="start" font-weight="normal" letter-spacing="0.8">C4</text>
<rect x="292.5" y="146.9" width="29.4" height="9.1" fill="none" stroke="#ff0000" stroke-width="1" shape-rendering="crispEdges"/>
<polyline points="283.75,151.25 292.5,151.25" fill="none" stroke="#ff0000" stroke-width="1" shape-rendering="crispEdges"/>
<polyline points="321.9,151.25 331.9,151.25" fill="none" stroke="#ff0000" stroke-width="1" shape-rendering="crispEdges"/>
<text x="307.2" y="153.97" font-size="7" fill="#ff0000" stroke="#ff0000" stroke-width=".3" text-anchor="middle" font-weight="normal">R11</text>
<rect x="297.5" y="161.5" width="17.5" height="7" fill="none" stroke="#ff0000" stroke-width="1" shape-rendering="crispEdges"/>
<polyline points="288.75,165 297.5,165" fill="none" stroke="#ff0000" stroke-width="1" shape-rendering="crispEdges"/>
<polyline points="315,165 324.4,165" fill="none" stroke="#ff0000" stroke-width="1" shape-rendering="crispEdges"/>
<text x="306.25" y="167.16" font-size="6" fill="#ff0000" stroke="#ff0000" stroke-width=".3" text-anchor="middle" font-weight="normal">R10</text>
<rect x="298.1" y="182.3" width="16.9" height="7" fill="none" stroke="#ff0000" stroke-width="1" shape-rendering="crispEdges"/>
<polyline points="288.75,185.6 298.1,185.6" fill="none" stroke="#ff0000" stroke-width="1" shape-rendering="crispEdges"/>
<polyline points="315,185.6 324.4,185.6" fill="none" stroke="#ff0000" stroke-width="1" shape-rendering="crispEdges"/>
<text x="306.55" y="187.96" font-size="6" fill="#ff0000" stroke="#ff0000" stroke-width=".3" text-anchor="middle" font-weight="normal">R4</text>
<path d="M226.25,158.75 H235.75 A10.9,10.9 0 0 1 235.75,180.6 H226.25 Z" fill="none" stroke="#ff0000" stroke-width="1" stroke-linecap="butt"/>
<text x="225.75" y="153.8" font-size="7.5" fill="#ff0000" stroke="#ff0000" stroke-width=".3" text-anchor="start" font-weight="normal" letter-spacing="0.4">VT6</text>
<text x="231.25" y="161.5" font-size="5" fill="#ff0000" stroke="#ff0000" stroke-width=".3" text-anchor="start" font-weight="normal" transform="rotate(90 231.25 161.5)">Э</text>
<text x="231.25" y="168.5" font-size="5" fill="#ff0000" stroke="#ff0000" stroke-width=".3" text-anchor="start" font-weight="normal" transform="rotate(90 231.25 168.5)">Б</text>
<text x="231.25" y="175.5" font-size="5" fill="#ff0000" stroke="#ff0000" stroke-width=".3" text-anchor="start" font-weight="normal" transform="rotate(90 231.25 175.5)">К</text>
<path d="M256.9,158.75 H266.4 A10.9,10.9 0 0 1 266.4,180.6 H256.9 Z" fill="none" stroke="#ff0000" stroke-width="1" stroke-linecap="butt"/>
<text x="256.4" y="153.8" font-size="7.5" fill="#ff0000" stroke="#ff0000" stroke-width=".3" text-anchor="start" font-weight="normal" letter-spacing="0.4">VT3</text>
<text x="261.9" y="161.5" font-size="5" fill="#ff0000" stroke="#ff0000" stroke-width=".3" text-anchor="start" font-weight="normal" transform="rotate(90 261.9 161.5)">Э</text>
<text x="261.9" y="168.5" font-size="5" fill="#ff0000" stroke="#ff0000" stroke-width=".3" text-anchor="start" font-weight="normal" transform="rotate(90 261.9 168.5)">Б</text>
<text x="261.9" y="175.5" font-size="5" fill="#ff0000" stroke="#ff0000" stroke-width=".3" text-anchor="start" font-weight="normal" transform="rotate(90 261.9 175.5)">К</text>
<rect x="208" y="154.4" width="7" height="16.85" fill="none" stroke="#ff0000" stroke-width="1" shape-rendering="crispEdges"/>
<polyline points="211.5,139.1 211.5,154.4" fill="none" stroke="#ff0000" stroke-width="1" shape-rendering="crispEdges"/>
<polyline points="211.5,171.25 211.5,186.4" fill="none" stroke="#ff0000" stroke-width="1" shape-rendering="crispEdges"/>
<text x="213.3" y="162.825" font-size="5" fill="#ff0000" stroke="#ff0000" stroke-width=".3" text-anchor="middle" font-weight="normal" transform="rotate(-90 213.3 162.825)">R3</text>
<circle cx="179.4" cy="165.3" r="17.5" fill="none" stroke="#ff0000" stroke-width="1"/>
<polyline points="171.1,165.3 177.3,165.3" fill="none" stroke="#ff0000" stroke-width="1" shape-rendering="crispEdges"/>
<polyline points="181.4,165.3 187.4,165.3" fill="none" stroke="#ff0000" stroke-width="1" shape-rendering="crispEdges"/>
<rect x="177.3" y="161.1" width="1.9" height="8.4" fill="none" stroke="#ff0000" stroke-width="1" shape-rendering="crispEdges"/>
<polyline points="181.4,161.1 181.4,169.5" fill="none" stroke="#ff0000" stroke-width="1" shape-rendering="crispEdges"/>
<path d="M186.2,151.70000000000002 A15.3,15.3 0 0 1 186.2,178.9" fill="none" stroke="#ff0000" stroke-width="3.4" stroke-linecap="butt"/>
<text x="192" y="151.8" font-size="7.5" fill="#ff0000" stroke="#ff0000" stroke-width=".3" text-anchor="start" font-weight="normal">C6</text>
<circle cx="179.4" cy="205.1" r="17.5" fill="none" stroke="#ff0000" stroke-width="1"/>
<polyline points="171.1,205.1 177.3,205.1" fill="none" stroke="#ff0000" stroke-width="1" shape-rendering="crispEdges"/>
<polyline points="181.4,205.1 187.4,205.1" fill="none" stroke="#ff0000" stroke-width="1" shape-rendering="crispEdges"/>
<rect x="177.3" y="200.9" width="1.9" height="8.4" fill="none" stroke="#ff0000" stroke-width="1" shape-rendering="crispEdges"/>
<polyline points="181.4,200.9 181.4,209.3" fill="none" stroke="#ff0000" stroke-width="1" shape-rendering="crispEdges"/>
<path d="M186.2,191.5 A15.3,15.3 0 0 1 186.2,218.7" fill="none" stroke="#ff0000" stroke-width="3.4" stroke-linecap="butt"/>
<text x="192" y="191.6" font-size="7.5" fill="#ff0000" stroke="#ff0000" stroke-width=".3" text-anchor="start" font-weight="normal">C7</text>
<rect x="221.25" y="193.75" width="94.25" height="43.95" fill="none" stroke="#ff0000" stroke-width="1" shape-rendering="crispEdges"/>
<polyline points="240.6,216.1 294.25,216.1" fill="none" stroke="#ff0000" stroke-width="1" shape-rendering="crispEdges"/>
<polyline points="266.5,213 266.5,219.3" fill="none" stroke="#ff0000" stroke-width="1.4" shape-rendering="crispEdges"/>
<polyline points="268.4,213 268.4,219.3" fill="none" stroke="#ff0000" stroke-width="1" shape-rendering="crispEdges"/>
<text x="263.5" y="203.2" font-size="7" fill="#ff0000" stroke="#ff0000" stroke-width=".3" text-anchor="start" font-weight="normal">C5</text>
<rect x="203.7" y="212.4" width="7" height="16.85" fill="none" stroke="#ff0000" stroke-width="1" shape-rendering="crispEdges"/>
<polyline points="207.2,203.6 207.2,212.4" fill="none" stroke="#ff0000" stroke-width="1" shape-rendering="crispEdges"/>
<polyline points="207.2,229.25 207.2,238.6" fill="none" stroke="#ff0000" stroke-width="1" shape-rendering="crispEdges"/>
<text x="209" y="220.825" font-size="5" fill="#ff0000" stroke="#ff0000" stroke-width=".3" text-anchor="middle" font-weight="normal" transform="rotate(-90 209 220.825)">R12</text>
<rect x="323.9" y="215" width="7" height="16" fill="none" stroke="#ff0000" stroke-width="1" shape-rendering="crispEdges"/>
<polyline points="327.4,206.1 327.4,215" fill="none" stroke="#ff0000" stroke-width="1" shape-rendering="crispEdges"/>
<polyline points="327.4,231 327.4,241.75" fill="none" stroke="#ff0000" stroke-width="1" shape-rendering="crispEdges"/>
<text x="329.2" y="223" font-size="5" fill="#ff0000" stroke="#ff0000" stroke-width=".3" text-anchor="middle" font-weight="normal" transform="rotate(-90 329.2 223)">R8</text>
<polyline points="159.4,243.6 195,243.6" fill="none" stroke="#ff0000" stroke-width="1" shape-rendering="crispEdges"/>
<path d="M173.7,240.3 L173.7,246.9 L180,243.6 Z" fill="#ff0000" stroke="#ff0000" stroke-width="1" stroke-linecap="butt"/>
<polyline points="181,240 181,247.2" fill="none" stroke="#ff0000" stroke-width="1" shape-rendering="crispEdges"/>
<text x="171" y="236" font-size="7" fill="#ff0000" stroke="#ff0000" stroke-width=".3" text-anchor="start" font-weight="normal">VD 4</text>
<rect x="168.5" y="261.9" width="17.75" height="6.85" fill="none" stroke="#ff0000" stroke-width="1" shape-rendering="crispEdges"/>
<polyline points="159.4,265.3 168.5,265.3" fill="none" stroke="#ff0000" stroke-width="1" shape-rendering="crispEdges"/>
<polyline points="186.25,265.3 195,265.3" fill="none" stroke="#ff0000" stroke-width="1" shape-rendering="crispEdges"/>
<text x="177.375" y="267.485" font-size="6" fill="#ff0000" stroke="#ff0000" stroke-width=".3" text-anchor="middle" font-weight="normal">R22</text>
<path d="M206.3,268.6 L205.6,261.5 A11.4,11.4 0 0 1 228.4,261.5 L227.7,268.6 Z" fill="none" stroke="#ff0000" stroke-width="1" stroke-linecap="butt"/>
<text x="208.5" y="247.5" font-size="7" fill="#ff0000" stroke="#ff0000" stroke-width=".3" text-anchor="start" font-weight="normal">VT13</text>
<text x="207.5" y="266.5" font-size="6.5" fill="#ff0000" stroke="#ff0000" stroke-width=".3" text-anchor="start" font-weight="normal">Э</text>
<text x="214.5" y="266.5" font-size="6.5" fill="#ff0000" stroke="#ff0000" stroke-width=".3" text-anchor="start" font-weight="normal">Б</text>
<text x="221.5" y="266.5" font-size="6.5" fill="#ff0000" stroke="#ff0000" stroke-width=".3" text-anchor="start" font-weight="normal">К</text>
<rect x="239.1" y="249.1" width="102.8" height="34.8" fill="none" stroke="#ff0000" stroke-width="1" shape-rendering="crispEdges"/>
<polyline points="239.1,275.3 341.9,275.3" fill="none" stroke="#ff0000" stroke-width="1" shape-rendering="crispEdges"/>
<path d="M264.4,274.5 V252 Q264.4,249.6 266.6,249.6 H314.6 Q316.8,249.6 316.8,252 V274.5 Z" fill="none" stroke="#ff0000" stroke-width="1" stroke-linecap="butt"/>
<circle cx="251.9" cy="262.6" r="10.4" fill="none" stroke="#ff0000" stroke-width="1"/>
<circle cx="251.9" cy="262.6" r="4.4" fill="#000" stroke="#ffffff" stroke-width="1.5"/>
<polyline points="250.3,261 253.5,264.2" fill="none" stroke="#1f6bf9" stroke-width="0.9"/>
<polyline points="250.3,264.2 253.5,261" fill="none" stroke="#1f6bf9" stroke-width="0.9"/>
<circle cx="329.3" cy="262.6" r="10.4" fill="none" stroke="#ff0000" stroke-width="1"/>
<circle cx="329.3" cy="262.6" r="4.4" fill="#000" stroke="#ffffff" stroke-width="1.5"/>
<polyline points="327.7,261 330.9,264.2" fill="none" stroke="#1f6bf9" stroke-width="0.9"/>
<polyline points="327.7,264.2 330.9,261" fill="none" stroke="#1f6bf9" stroke-width="0.9"/>
<polyline points="256.6,260.5 324.7,260.5" fill="none" stroke="#ff0000" stroke-width="1" shape-rendering="crispEdges"/>
<polyline points="256.6,264.6 324.7,264.6" fill="none" stroke="#ff0000" stroke-width="1" shape-rendering="crispEdges"/>
<text x="279.6" y="272.4" font-size="8" fill="#ff0000" stroke="#ff0000" stroke-width=".3" text-anchor="start" font-weight="normal" letter-spacing="0.3">VT15</text>
<text x="291" y="283.2" font-size="8.5" fill="#ff0000" stroke="#ff0000" stroke-width=".3" text-anchor="start" font-weight="normal">Э</text>
<text x="311" y="283.2" font-size="8.5" fill="#ff0000" stroke="#ff0000" stroke-width=".3" text-anchor="start" font-weight="normal">К</text>
<text x="326.5" y="283.2" font-size="8.5" fill="#ff0000" stroke="#ff0000" stroke-width=".3" text-anchor="start" font-weight="normal">Б</text>
<rect x="354.2" y="249.1" width="102.8" height="34.8" fill="none" stroke="#ff0000" stroke-width="1" shape-rendering="crispEdges"/>
<polyline points="354.2,275.3 457,275.3" fill="none" stroke="#ff0000" stroke-width="1" shape-rendering="crispEdges"/>
<path d="M379.5,274.5 V252 Q379.5,249.6 381.7,249.6 H429.7 Q431.9,249.6 431.9,252 V274.5 Z" fill="none" stroke="#ff0000" stroke-width="1" stroke-linecap="butt"/>
<circle cx="367" cy="262.6" r="10.4" fill="none" stroke="#ff0000" stroke-width="1"/>
<circle cx="367" cy="262.6" r="4.4" fill="#000" stroke="#ffffff" stroke-width="1.5"/>
<polyline points="365.4,261 368.6,264.2" fill="none" stroke="#1f6bf9" stroke-width="0.9"/>
<polyline points="365.4,264.2 368.6,261" fill="none" stroke="#1f6bf9" stroke-width="0.9"/>
<circle cx="444.4" cy="262.6" r="10.4" fill="none" stroke="#ff0000" stroke-width="1"/>
<circle cx="444.4" cy="262.6" r="4.4" fill="#000" stroke="#ffffff" stroke-width="1.5"/>
<polyline points="442.8,261 446,264.2" fill="none" stroke="#1f6bf9" stroke-width="0.9"/>
<polyline points="442.8,264.2 446,261" fill="none" stroke="#1f6bf9" stroke-width="0.9"/>
<polyline points="371.7,260.5 439.8,260.5" fill="none" stroke="#ff0000" stroke-width="1" shape-rendering="crispEdges"/>
<polyline points="371.7,264.6 439.8,264.6" fill="none" stroke="#ff0000" stroke-width="1" shape-rendering="crispEdges"/>
<text x="394.7" y="272.4" font-size="8" fill="#ff0000" stroke="#ff0000" stroke-width=".3" text-anchor="start" font-weight="normal" letter-spacing="0.3">VT14</text>
<text x="406.5" y="283.2" font-size="8.5" fill="#ff0000" stroke="#ff0000" stroke-width=".3" text-anchor="start" font-weight="normal">Э</text>
<text x="423" y="283.2" font-size="8.5" fill="#ff0000" stroke="#ff0000" stroke-width=".3" text-anchor="start" font-weight="normal">К</text>
<text x="437.7" y="283.2" font-size="8.5" fill="#ff0000" stroke="#ff0000" stroke-width=".3" text-anchor="start" font-weight="normal">Б</text>
<rect x="250" y="288.5" width="17.5" height="6.75" fill="none" stroke="#ff0000" stroke-width="1" shape-rendering="crispEdges"/>
<polyline points="241,292 250,292" fill="none" stroke="#ff0000" stroke-width="1" shape-rendering="crispEdges"/>
<polyline points="267.5,292 276.3,292" fill="none" stroke="#ff0000" stroke-width="1" shape-rendering="crispEdges"/>
<text x="258.75" y="294.035" font-size="6" fill="#ff0000" stroke="#ff0000" stroke-width=".3" text-anchor="middle" font-weight="normal">R25</text>
<rect x="244.4" y="301.9" width="29.35" height="8.1" fill="none" stroke="#ff0000" stroke-width="1" shape-rendering="crispEdges"/>
<polyline points="234.4,305.3 244.4,305.3" fill="none" stroke="#ff0000" stroke-width="1" shape-rendering="crispEdges"/>
<polyline points="273.75,305.3 283.75,305.3" fill="none" stroke="#ff0000" stroke-width="1" shape-rendering="crispEdges"/>
<text x="259.075" y="308.47" font-size="7" fill="#ff0000" stroke="#ff0000" stroke-width=".3" text-anchor="middle" font-weight="normal">R23</text>
<rect x="302.5" y="301.9" width="16.9" height="6.7" fill="none" stroke="#ff0000" stroke-width="1" shape-rendering="crispEdges"/>
<polyline points="293.1,305.3 302.5,305.3" fill="none" stroke="#ff0000" stroke-width="1" shape-rendering="crispEdges"/>
<polyline points="319.4,305.3 328.75,305.3" fill="none" stroke="#ff0000" stroke-width="1" shape-rendering="crispEdges"/>
<text x="310.95" y="307.41" font-size="6" fill="#ff0000" stroke="#ff0000" stroke-width=".3" text-anchor="middle" font-weight="normal">R20</text>
<rect x="357.1" y="301.4" width="29.8" height="7.8" fill="none" stroke="#ff0000" stroke-width="1" shape-rendering="crispEdges"/>
<polyline points="346.9,305.3 357.1,305.3" fill="none" stroke="#ff0000" stroke-width="1" shape-rendering="crispEdges"/>
<polyline points="386.9,305.3 396.25,305.3" fill="none" stroke="#ff0000" stroke-width="1" shape-rendering="crispEdges"/>
<text x="372" y="307.82" font-size="7" fill="#ff0000" stroke="#ff0000" stroke-width=".3" text-anchor="middle" font-weight="normal">R21</text>
<rect x="414.4" y="301.7" width="17.5" height="6.9" fill="none" stroke="#ff0000" stroke-width="1" shape-rendering="crispEdges"/>
<polyline points="405,305.3 414.4,305.3" fill="none" stroke="#ff0000" stroke-width="1" shape-rendering="crispEdges"/>
<polyline points="431.9,305.3 440.6,305.3" fill="none" stroke="#ff0000" stroke-width="1" shape-rendering="crispEdges"/>
<text x="423.15" y="307.31" font-size="6" fill="#ff0000" stroke="#ff0000" stroke-width=".3" text-anchor="middle" font-weight="normal">R12</text>
<rect x="366.25" y="288.7" width="16.85" height="6.5" fill="none" stroke="#ff0000" stroke-width="1" shape-rendering="crispEdges"/>
<polyline points="356.9,292 366.25,292" fill="none" stroke="#ff0000" stroke-width="1" shape-rendering="crispEdges"/>
<polyline points="383.1,292 391.9,292" fill="none" stroke="#ff0000" stroke-width="1" shape-rendering="crispEdges"/>
<text x="374.675" y="294.11" font-size="6" fill="#ff0000" stroke="#ff0000" stroke-width=".3" text-anchor="middle" font-weight="normal">R9</text>
<rect x="450.9" y="301.6" width="7" height="16.9" fill="none" stroke="#ff0000" stroke-width="1" shape-rendering="crispEdges"/>
<polyline points="454.4,291.9 454.4,301.6" fill="none" stroke="#ff0000" stroke-width="1" shape-rendering="crispEdges"/>
<polyline points="454.4,318.5 454.4,328.75" fill="none" stroke="#ff0000" stroke-width="1" shape-rendering="crispEdges"/>
<text x="456.2" y="310.05" font-size="5" fill="#ff0000" stroke="#ff0000" stroke-width=".3" text-anchor="middle" font-weight="normal" transform="rotate(-90 456.2 310.05)">R24</text>
<rect x="243.5" y="314.5" width="77.75" height="33.75" fill="none" stroke="#ff0000" stroke-width="1" shape-rendering="crispEdges"/>
<text x="275" y="335.6" font-size="9" fill="#ff0000" stroke="#ff0000" stroke-width=".3" text-anchor="start" font-weight="normal" letter-spacing="0.3">R27</text>
<polyline points="238.75,331.6 243.5,331.6" fill="none" stroke="#ff0000" stroke-width="1" shape-rendering="crispEdges"/>
<polyline points="321.25,331.6 325.6,331.6" fill="none" stroke="#ff0000" stroke-width="1" shape-rendering="crispEdges"/>
<rect x="355.6" y="314.5" width="77.9" height="33.75" fill="none" stroke="#ff0000" stroke-width="1" shape-rendering="crispEdges"/>
<text x="378.5" y="335" font-size="9" fill="#ff0000" stroke="#ff0000" stroke-width=".3" text-anchor="start" font-weight="normal" letter-spacing="0.3">R26</text>
<polyline points="350.6,331.6 355.6,331.6" fill="none" stroke="#ff0000" stroke-width="1" shape-rendering="crispEdges"/>
<polyline points="433.5,331.6 437.5,331.6" fill="none" stroke="#ff0000" stroke-width="1" shape-rendering="crispEdges"/>
<circle cx="179.5" cy="330.5" r="54.6" fill="none" stroke="#ff0000" stroke-width="1"/>
<circle cx="516.25" cy="330.5" r="54.6" fill="none" stroke="#ff0000" stroke-width="1"/>
<path d="M149.5,299.5 A43,43 0 0 0 148,362" fill="none" stroke="#ff0000" stroke-width="9" stroke-linecap="round"/>
<path d="M486.5,299.5 A43,43 0 0 0 485,362" fill="none" stroke="#ff0000" stroke-width="9" stroke-linecap="round"/>
<polyline points="162,330.5 176.3,330.5" fill="none" stroke="#ff0000" stroke-width="1" shape-rendering="crispEdges"/>
<polyline points="181.5,330.5 197,330.5" fill="none" stroke="#ff0000" stroke-width="1" shape-rendering="crispEdges"/>
<rect x="176.3" y="318.8" width="2.6" height="22.5" fill="none" stroke="#ff0000" stroke-width="1" shape-rendering="crispEdges"/>
<polyline points="181.5,318.8 181.5,341.3" fill="none" stroke="#ff0000" stroke-width="1" shape-rendering="crispEdges"/>
<polyline points="498.75,330.5 512.6,330.5" fill="none" stroke="#ff0000" stroke-width="1" shape-rendering="crispEdges"/>
<polyline points="518,330.5 533.75,330.5" fill="none" stroke="#ff0000" stroke-width="1" shape-rendering="crispEdges"/>
<rect x="512.6" y="318.8" width="2.6" height="22.5" fill="none" stroke="#ff0000" stroke-width="1" shape-rendering="crispEdges"/>
<polyline points="518,318.8 518,341.3" fill="none" stroke="#ff0000" stroke-width="1" shape-rendering="crispEdges"/>
<text x="129.5" y="285" font-size="10" fill="#ff0000" stroke="#ff0000" stroke-width=".3" text-anchor="start" font-weight="normal">C 9</text>
<text x="550.5" y="284" font-size="10" fill="#ff0000" stroke="#ff0000" stroke-width=".3" text-anchor="start" font-weight="normal">C 10</text>
<rect x="243.1" y="352.5" width="210" height="53.2" fill="none" stroke="#ff0000" stroke-width="1" shape-rendering="crispEdges"/>
<polyline points="243.1,381.3 453.1,381.3" fill="none" stroke="#ff0000" stroke-width="1" shape-rendering="crispEdges"/>
<polyline points="277.5,352.5 277.5,405.7" fill="none" stroke="#ff0000" stroke-width="1" shape-rendering="crispEdges"/>
<polyline points="330.6,352.5 330.6,405.7" fill="none" stroke="#ff0000" stroke-width="1" shape-rendering="crispEdges"/>
<polyline points="365.6,352.5 365.6,405.7" fill="none" stroke="#ff0000" stroke-width="1" shape-rendering="crispEdges"/>
<polyline points="418.1,352.5 418.1,405.7" fill="none" stroke="#ff0000" stroke-width="1" shape-rendering="crispEdges"/>
<text x="246.8" y="390.3" font-size="8.5" fill="#ff0000" stroke="#ff0000" stroke-width=".3" text-anchor="start" font-weight="normal" textLength="26.8" lengthAdjust="spacingAndGlyphs">POWER</text>
<text x="250" y="402.5" font-size="11" fill="#ff0000" stroke="#ff0000" stroke-width=".3" text-anchor="start" font-weight="normal">U +</text>
<text x="283.5" y="390.5" font-size="8.5" fill="#ff0000" stroke="#ff0000" stroke-width=".3" text-anchor="start" font-weight="normal">Б</text>
<text x="300.5" y="390.5" font-size="8.5" fill="#ff0000" stroke="#ff0000" stroke-width=".3" text-anchor="start" font-weight="normal">Э</text>
<text x="318" y="390.5" font-size="8.5" fill="#ff0000" stroke="#ff0000" stroke-width=".3" text-anchor="start" font-weight="normal">К</text>
<text x="294.5" y="403.3" font-size="8.5" fill="#ff0000" stroke="#ff0000" stroke-width=".3" text-anchor="start" font-weight="normal">VT17</text>
<text x="331.8" y="390.3" font-size="8.2" fill="#ff0000" stroke="#ff0000" stroke-width=".3" text-anchor="start" font-weight="normal" letter-spacing="-0.3">OUTPUT</text>
<text x="371" y="390.5" font-size="8.5" fill="#ff0000" stroke="#ff0000" stroke-width=".3" text-anchor="start" font-weight="normal">Б</text>
<text x="389" y="390.5" font-size="8.5" fill="#ff0000" stroke="#ff0000" stroke-width=".3" text-anchor="start" font-weight="normal">Э</text>
<text x="406" y="390.5" font-size="8.5" fill="#ff0000" stroke="#ff0000" stroke-width=".3" text-anchor="start" font-weight="normal">К</text>
<text x="382" y="403.3" font-size="8.5" fill="#ff0000" stroke="#ff0000" stroke-width=".3" text-anchor="start" font-weight="normal">VT16</text>
<text x="421.8" y="390.3" font-size="8.5" fill="#ff0000" stroke="#ff0000" stroke-width=".3" text-anchor="start" font-weight="normal" textLength="26.8" lengthAdjust="spacingAndGlyphs">POWER</text>
<text x="426" y="402.5" font-size="11" fill="#ff0000" stroke="#ff0000" stroke-width=".3" text-anchor="start" font-weight="normal">U −</text>
<text x="461.8" y="402.3" font-size="10.5" fill="#ff0000" stroke="#ff0000" stroke-width=".3" text-anchor="start" font-weight="normal" letter-spacing="1.8">GE-UF-25W</text>
<circle cx="360.6" cy="169.4" r="21.3" fill="none" stroke="#ff0000" stroke-width="1"/>
<text x="352" y="168.5" font-size="7.5" fill="#ff0000" stroke="#ff0000" stroke-width=".3" text-anchor="start" font-weight="normal">VT2</text>
<text x="352" y="178.5" font-size="7.5" fill="#ff0000" stroke="#ff0000" stroke-width=".3" text-anchor="start" font-weight="normal">VT5</text>
<text x="350.5" y="162.5" font-size="6.5" fill="#ffff00" stroke="#ffff00" stroke-width=".3" text-anchor="start" font-weight="normal">8</text>
<text x="358.5" y="161.5" font-size="6.5" fill="#ffff00" stroke="#ffff00" stroke-width=".3" text-anchor="start" font-weight="normal">1</text>
<text x="367.5" y="163.5" font-size="6.5" fill="#ffff00" stroke="#ffff00" stroke-width=".3" text-anchor="start" font-weight="normal">2</text>
<text x="348.5" y="175" font-size="6.5" fill="#ffff00" stroke="#ffff00" stroke-width=".3" text-anchor="start" font-weight="normal">6</text>
<text x="369" y="176" font-size="6.5" fill="#ffff00" stroke="#ffff00" stroke-width=".3" text-anchor="start" font-weight="normal">4</text>
<text x="359" y="184" font-size="6.5" fill="#ffff00" stroke="#ffff00" stroke-width=".3" text-anchor="start" font-weight="normal">5</text>
<circle cx="419.4" cy="168.75" r="21" fill="none" stroke="#ff0000" stroke-width="1"/>
<text x="419.4" y="171.5" font-size="8" fill="#ff0000" stroke="#ff0000" stroke-width=".3" text-anchor="middle" font-weight="normal">VT1</text>
<text x="424.9" y="158.5" font-size="6.5" fill="#ff0000" stroke="#ff0000" stroke-width=".3" text-anchor="start" font-weight="normal">Б</text>
<text x="402.4" y="181.5" font-size="6.5" fill="#ff0000" stroke="#ff0000" stroke-width=".3" text-anchor="start" font-weight="normal">Э</text>
<text x="431.4" y="181" font-size="6.5" fill="#ff0000" stroke="#ff0000" stroke-width=".3" text-anchor="start" font-weight="normal">К</text>
<circle cx="466.25" cy="168.75" r="21" fill="none" stroke="#ff0000" stroke-width="1"/>
<text x="466.25" y="171.5" font-size="8" fill="#ff0000" stroke="#ff0000" stroke-width=".3" text-anchor="middle" font-weight="normal">VT10</text>
<text x="471.75" y="158.5" font-size="6.5" fill="#ff0000" stroke="#ff0000" stroke-width=".3" text-anchor="start" font-weight="normal">Б</text>
<text x="449.25" y="181.5" font-size="6.5" fill="#ff0000" stroke="#ff0000" stroke-width=".3" text-anchor="start" font-weight="normal">Э</text>
<text x="478.25" y="181" font-size="6.5" fill="#ff0000" stroke="#ff0000" stroke-width=".3" text-anchor="start" font-weight="normal">К</text>
<circle cx="514.4" cy="168.75" r="21" fill="none" stroke="#ff0000" stroke-width="1"/>
<text x="514.4" y="171.5" font-size="8" fill="#ff0000" stroke="#ff0000" stroke-width=".3" text-anchor="middle" font-weight="normal">VT7</text>
<text x="519.9" y="158.5" font-size="6.5" fill="#ff0000" stroke="#ff0000" stroke-width=".3" text-anchor="start" font-weight="normal">Б</text>
<text x="497.4" y="181.5" font-size="6.5" fill="#ff0000" stroke="#ff0000" stroke-width=".3" text-anchor="start" font-weight="normal">Э</text>
<text x="526.4" y="181" font-size="6.5" fill="#ff0000" stroke="#ff0000" stroke-width=".3" text-anchor="start" font-weight="normal">К</text>
<text x="411" y="182.5" font-size="7" fill="#ffff00" stroke="#ffff00" stroke-width=".3" text-anchor="start" font-weight="normal">MP21</text>
<text x="452" y="148.2" font-size="7" fill="#ffff00" stroke="#ffff00" stroke-width=".3" text-anchor="start" font-weight="normal">MP38</text>
<text x="506" y="148.2" font-size="7" fill="#ffff00" stroke="#ffff00" stroke-width=".3" text-anchor="start" font-weight="normal">MP38</text>
<circle cx="359.9" cy="216.75" r="21.3" fill="none" stroke="#ff0000" stroke-width="1"/>
<text x="360.5" y="220" font-size="7.5" fill="#ff0000" stroke="#ff0000" stroke-width=".3" text-anchor="middle" font-weight="normal">VT4</text>
<text x="365.5" y="205.5" font-size="6.5" fill="#ff0000" stroke="#ff0000" stroke-width=".3" text-anchor="start" font-weight="normal">Б</text>
<text x="343.5" y="229.5" font-size="6.5" fill="#ff0000" stroke="#ff0000" stroke-width=".3" text-anchor="start" font-weight="normal">Э</text>
<text x="372.5" y="229.5" font-size="6.5" fill="#ff0000" stroke="#ff0000" stroke-width=".3" text-anchor="start" font-weight="normal">К</text>
<text x="352" y="230.8" font-size="7" fill="#ffff00" stroke="#ffff00" stroke-width=".3" text-anchor="start" font-weight="normal">MP21</text>
<circle cx="419" cy="216.1" r="21" fill="none" stroke="#ff0000" stroke-width="1"/>
<text x="420" y="221.5" font-size="7.5" fill="#ff0000" stroke="#ff0000" stroke-width=".3" text-anchor="middle" font-weight="normal">VT12</text>
<text x="402" y="210.5" font-size="6.5" fill="#ff0000" stroke="#ff0000" stroke-width=".3" text-anchor="start" font-weight="normal">Б</text>
<text x="430" y="210.5" font-size="6.5" fill="#ff0000" stroke="#ff0000" stroke-width=".3" text-anchor="start" font-weight="normal">Э</text>
<text x="408" y="233.5" font-size="6.5" fill="#ff0000" stroke="#ff0000" stroke-width=".3" text-anchor="start" font-weight="normal">К</text>
<text x="409" y="203.3" font-size="7" fill="#ffff00" stroke="#ffff00" stroke-width=".3" text-anchor="start" font-weight="normal">GT404</text>
<circle cx="466.9" cy="216.1" r="21" fill="none" stroke="#ff0000" stroke-width="1"/>
<text x="467.9" y="221.5" font-size="7.5" fill="#ff0000" stroke="#ff0000" stroke-width=".3" text-anchor="middle" font-weight="normal">VT11</text>
<text x="449.9" y="210.5" font-size="6.5" fill="#ff0000" stroke="#ff0000" stroke-width=".3" text-anchor="start" font-weight="normal">Б</text>
<text x="477.9" y="210.5" font-size="6.5" fill="#ff0000" stroke="#ff0000" stroke-width=".3" text-anchor="start" font-weight="normal">Э</text>
<text x="455.9" y="233.5" font-size="6.5" fill="#ff0000" stroke="#ff0000" stroke-width=".3" text-anchor="start" font-weight="normal">К</text>
<text x="456.9" y="203.3" font-size="7" fill="#ffff00" stroke="#ffff00" stroke-width=".3" text-anchor="start" font-weight="normal">GT404</text>
<circle cx="514.4" cy="216.1" r="21" fill="none" stroke="#ff0000" stroke-width="1"/>
<text x="515.4" y="221.5" font-size="7.5" fill="#ff0000" stroke="#ff0000" stroke-width=".3" text-anchor="middle" font-weight="normal">VT8</text>
<text x="497.4" y="210.5" font-size="6.5" fill="#ff0000" stroke="#ff0000" stroke-width=".3" text-anchor="start" font-weight="normal">Б</text>
<text x="525.4" y="210.5" font-size="6.5" fill="#ff0000" stroke="#ff0000" stroke-width=".3" text-anchor="start" font-weight="normal">Э</text>
<text x="503.4" y="233.5" font-size="6.5" fill="#ff0000" stroke="#ff0000" stroke-width=".3" text-anchor="start" font-weight="normal">К</text>
<text x="504.4" y="203.3" font-size="7" fill="#ffff00" stroke="#ffff00" stroke-width=".3" text-anchor="start" font-weight="normal">GT404</text>
<polyline points="390,181.25 389.9,216.5" fill="none" stroke="#ff0000" stroke-width="1"/>
<path d="M386.6,195.5 H393.2 L389.9,202.4 Z" fill="#ff0000" stroke="#ff0000" stroke-width="1" stroke-linecap="butt"/>
<polyline points="386.3,203 393.5,203" fill="none" stroke="#ff0000" stroke-width="1" shape-rendering="crispEdges"/>
<text x="395" y="199" font-size="7" fill="#ff0000" stroke="#ff0000" stroke-width=".3" text-anchor="start" font-weight="normal">VD 1</text>
<polyline points="466.6,178.4 466.6,213" fill="none" stroke="#ff0000" stroke-width="1" shape-rendering="crispEdges"/>
<path d="M460.8,199.3 H472.40000000000003 L466.6,191.6 Z" fill="#ff0000" stroke="#ff0000" stroke-width="1" stroke-linecap="butt"/>
<polyline points="514.2,178.4 514.2,213" fill="none" stroke="#ff0000" stroke-width="1" shape-rendering="crispEdges"/>
<path d="M508.40000000000003,199.3 H520.0 L514.2,191.6 Z" fill="#ff0000" stroke="#ff0000" stroke-width="1" stroke-linecap="butt"/>
<text x="472.5" y="198.5" font-size="7" fill="#ff0000" stroke="#ff0000" stroke-width=".3" text-anchor="start" font-weight="normal">VD 3</text>
<text x="494.5" y="198.5" font-size="7" fill="#ff0000" stroke="#ff0000" stroke-width=".3" text-anchor="start" font-weight="normal">VD 2</text>
<polyline points="405.6,243.6 451.9,243.6" fill="none" stroke="#ff0000" stroke-width="1" shape-rendering="crispEdges"/>
<text x="427" y="241.3" font-size="6" fill="#ff0000" stroke="#ff0000" stroke-width=".3" text-anchor="start" font-weight="normal">J2</text>
<rect x="540" y="194.9" width="11.3" height="26.9" fill="none" stroke="#ff0000" stroke-width="1" shape-rendering="crispEdges"/>
<polyline points="545,199.9 545,207.5" fill="none" stroke="#ff0000" stroke-width="1" shape-rendering="crispEdges"/>
<polyline points="545,210 545,217.4" fill="none" stroke="#ff0000" stroke-width="1" shape-rendering="crispEdges"/>
<polyline points="541.8,207.5 548.3,207.5" fill="none" stroke="#ff0000" stroke-width="1" shape-rendering="crispEdges"/>
<polyline points="541.8,210 548.3,210" fill="none" stroke="#ff0000" stroke-width="1" shape-rendering="crispEdges"/>
<text x="541" y="229.3" font-size="7" fill="#ff0000" stroke="#ff0000" stroke-width=".3" text-anchor="start" font-weight="normal">C8</text>
<path d="M469,268.3 L468.6,261 A11.6,11.6 0 0 1 491.8,261 L491.3,268.3 Z" fill="none" stroke="#ff0000" stroke-width="1" stroke-linecap="butt"/>
<text x="473.8" y="248" font-size="7" fill="#ff0000" stroke="#ff0000" stroke-width=".3" text-anchor="start" font-weight="normal">VT9</text>
<text x="470" y="266.5" font-size="6.5" fill="#ff0000" stroke="#ff0000" stroke-width=".3" text-anchor="start" font-weight="normal">Э</text>
<text x="478" y="264" font-size="6.5" fill="#ff0000" stroke="#ff0000" stroke-width=".3" text-anchor="start" font-weight="normal">Б</text>
<text x="486.5" y="266.5" font-size="6.5" fill="#ff0000" stroke="#ff0000" stroke-width=".3" text-anchor="start" font-weight="normal">К</text>
<rect x="521.25" y="247.2" width="17.5" height="6.8" fill="none" stroke="#ff0000" stroke-width="1" shape-rendering="crispEdges"/>
<polyline points="510.6,250.25 521.25,250.25" fill="none" stroke="#ff0000" stroke-width="1" shape-rendering="crispEdges"/>
<polyline points="538.75,250.25 550,250.25" fill="none" stroke="#ff0000" stroke-width="1" shape-rendering="crispEdges"/>
<text x="530" y="252.76" font-size="6" fill="#ff0000" stroke="#ff0000" stroke-width=".3" text-anchor="middle" font-weight="normal">R14</text>
<rect x="521.25" y="261.9" width="17.5" height="6.7" fill="none" stroke="#ff0000" stroke-width="1" shape-rendering="crispEdges"/>
<polyline points="510.6,265 521.25,265" fill="none" stroke="#ff0000" stroke-width="1" shape-rendering="crispEdges"/>
<polyline points="538.75,265 550,265" fill="none" stroke="#ff0000" stroke-width="1" shape-rendering="crispEdges"/>
<text x="530" y="267.41" font-size="6" fill="#ff0000" stroke="#ff0000" stroke-width=".3" text-anchor="middle" font-weight="normal">R19</text>
</g>
<g transform="translate(523.8,0)"><rect x="120" y="93" width="456" height="316" fill="#1f6bf9"/>
<polygon points="120,93 150.5,93 150.5,117 142,123 120,123" fill="#000"/>
<polygon points="164.2,117.5 172.5,108.2 187,108.2 197.5,117.4 197.5,141 207,150.5 216.5,152 216.5,200 185,200 185,222 175,212 175,158 164.2,147" fill="#000"/>
<polygon points="336.75,93 576,93 576,126.75 549.5,126.75 549.5,150.5 562.8,163.8 562.8,230 544.8,248 544.8,284 455,284 455,249 412,249 412,238.7 322,238.7 318,242 318,249 239,249 239,284.5 280,284.5 280,299.5 237,299.5 213.75,275.5 193,274.5 185,262.5 185,199 216.8,199 216.8,147.7 253,147.7 253,145.8 336.75,145.8" fill="#000"/>
<polygon points="239,249 310.6,249 310.6,275.75 239,275.75" fill="#000"/>
<polygon points="317,249 341.5,249 341.5,284 297,284 297,276 310.6,276 310.6,249" fill="#000"/>
<polygon points="285,284 305,284 305,290 299,296 285,296" fill="#000"/>
<polygon points="354.5,256.4 360.5,250.8 422.2,250.8 411.8,256.4 389.3,256.4 379.9,265.4 379.9,269.9 374.9,274.4 366.7,274.4 366.7,300 362.2,300 362.2,274.4 360.5,274.4 354.5,268.9" fill="#000"/>
<polygon points="432.7,250.5 457.1,250.5 457.1,274.4 432.7,274.4" fill="#000"/>
<polygon points="432.7,263.9 419.7,273.9 405.8,274.9 389.8,286 396.8,286 409.8,277.8 422.7,274.9 432.7,269.9" fill="#000"/>
<polygon points="211.2,116.3 214.2,113.3 233.1,113.3 236.1,116.3 236.1,129.2 252.5,145.6 252.5,148 216.3,148 216.3,135 211.2,128" fill="#000"/>
<polygon points="262,118.2 262,123.9 266.8,130.5 296,130.5 296,128.7 319.25,128.7 324.9,123.6 324.9,111.75 320.5,107.4 273,107.4" fill="#000"/>
<polyline points="150,300 150,247 134,231 134,164 158.5,140.5 158.5,115 171.25,102.75 190,102.75 203,116.75 203,136.4 208,146.8" fill="none" stroke="#000" stroke-width="4.2" stroke-linejoin="round" stroke-linecap="round"/>
<polyline points="207,146.9 218,147.2" fill="none" stroke="#000" stroke-width="1.6" stroke-linejoin="round" stroke-linecap="butt"/>
<polyline points="270.4,122.1 276.75,116 302.4,116" fill="none" stroke="#1f6bf9" stroke-width="4.8" stroke-linejoin="round" stroke-linecap="round"/>
<polyline points="170.9,121.75 170.9,147.5 179.5,156.5 179.5,212 187.5,205.1" fill="none" stroke="#1f6bf9" stroke-width="3.6" stroke-linejoin="round" stroke-linecap="round"/>
<polyline points="180.1,114.25 180.1,145 187.4,153 187.4,165.3" fill="none" stroke="#1f6bf9" stroke-width="3.6" stroke-linejoin="round" stroke-linecap="round"/>
<polyline points="188.9,121.75 188.9,142.3 202.3,156.8 215,157.5 222.5,157.5 233.75,168.75 245,168.75 252.5,160 271.25,159.4" fill="none" stroke="#1f6bf9" stroke-width="3.4" stroke-linejoin="round" stroke-linecap="round"/>
<polyline points="199.5,125 199.5,140.8 207.6,149.8 232,149.8 240.6,159.4" fill="none" stroke="#1f6bf9" stroke-width="3.4" stroke-linejoin="round" stroke-linecap="round"/>
<polyline points="220.2,121.3 220.2,149.8" fill="none" stroke="#1f6bf9" stroke-width="3.2" stroke-linejoin="round" stroke-linecap="round"/>
<polyline points="228.8,121.3 228.8,131.8 247.8,150.8 312.5,151.25 324.4,165" fill="none" stroke="#1f6bf9" stroke-width="4" stroke-linejoin="round" stroke-linecap="round"/>
<polyline points="187.4,165.3 222,165.3 226.25,169.75" fill="none" stroke="#1f6bf9" stroke-width="3.2" stroke-linejoin="round" stroke-linecap="round"/>
<polyline points="187.1,205 187.1,189 202.8,173.6 216,173.6 222,179.3 247.5,178.75 255,170 256.9,169.75" fill="none" stroke="#1f6bf9" stroke-width="4" stroke-linejoin="round" stroke-linecap="round"/>
<polyline points="256.9,169.75 282.5,169.75 288.75,165" fill="none" stroke="#1f6bf9" stroke-width="3.5" stroke-linejoin="round" stroke-linecap="round"/>
<polyline points="271.25,179.4 282.5,179.4 288.75,185.6" fill="none" stroke="#1f6bf9" stroke-width="3.5" stroke-linejoin="round" stroke-linecap="round"/>
<polyline points="211.6,186.4 221,195.5 220.6,216.1 240.6,216.1" fill="none" stroke="#1f6bf9" stroke-width="4.4" stroke-linejoin="round" stroke-linecap="round"/>
<polyline points="397.4,104.9 353,104.9 344.25,114.25 344.25,150 346.25,158.1" fill="none" stroke="#1f6bf9" stroke-width="5" stroke-linejoin="round" stroke-linecap="round"/>
<polyline points="359,138.75 346,151.5" fill="none" stroke="#1f6bf9" stroke-width="4" stroke-linejoin="round" stroke-linecap="round"/>
<polyline points="331.25,151.25 341,142" fill="none" stroke="#1f6bf9" stroke-width="4" stroke-linejoin="round" stroke-linecap="round"/>
<polyline points="356.75,116.1 369.9,116.1" fill="none" stroke="#1f6bf9" stroke-width="5" stroke-linejoin="round" stroke-linecap="round"/>
<polyline points="363,116.1 363,133 358.6,138.6" fill="none" stroke="#1f6bf9" stroke-width="5" stroke-linejoin="round" stroke-linecap="round"/>
<polyline points="397.4,104.9 427.9,105.5 434.5,97 501,97 526,122 526,140 533.5,147.5" fill="none" stroke="#1f6bf9" stroke-width="5" stroke-linejoin="round" stroke-linecap="round"/>
<polyline points="474.75,105.5 489.1,105.5 508.5,124 508.5,131.75" fill="none" stroke="#1f6bf9" stroke-width="5" stroke-linejoin="round" stroke-linecap="round"/>
<polyline points="412.9,141.1 422.25,131.1 496,131.1 518,153 526,156 538.7,167.5 538.7,196" fill="none" stroke="#1f6bf9" stroke-width="4.8" stroke-linejoin="round" stroke-linecap="round"/>
<polyline points="427.9,141.1 442.9,141.1" fill="none" stroke="#1f6bf9" stroke-width="4" stroke-linejoin="round" stroke-linecap="round"/>
<polyline points="474.75,141.1 489.1,141.1" fill="none" stroke="#1f6bf9" stroke-width="4" stroke-linejoin="round" stroke-linecap="round"/>
<polyline points="324.4,185.6 348,185.6 366,167.5 375,167.5" fill="none" stroke="#1f6bf9" stroke-width="4.5" stroke-linejoin="round" stroke-linecap="round"/>
<polyline points="375,158.75 375,176.9" fill="none" stroke="#1f6bf9" stroke-width="4.5" stroke-linejoin="round" stroke-linecap="round"/>
<polyline points="312.3,216 312.3,180 317.5,175.25 345,176.25" fill="none" stroke="#1f6bf9" stroke-width="5" stroke-linejoin="round" stroke-linecap="round"/>
<polyline points="360,151.9 362,148.75 380,148.75 396,166.5 406,169" fill="none" stroke="#1f6bf9" stroke-width="5" stroke-linejoin="round" stroke-linecap="round"/>
<polyline points="419,155.6 419,172.5 411.5,180.5 390,181.25" fill="none" stroke="#1f6bf9" stroke-width="4.5" stroke-linejoin="round" stroke-linecap="round"/>
<polyline points="419,155.6 429,155.6 432.25,160 432.25,169" fill="none" stroke="#1f6bf9" stroke-width="4.5" stroke-linejoin="round" stroke-linecap="round"/>
<polyline points="390,181.5 371,200 366,202.5 359.6,202.5" fill="none" stroke="#1f6bf9" stroke-width="4.4" stroke-linejoin="round" stroke-linecap="round"/>
<polyline points="442.5,140.6 442.5,176 430,188.75 425,193" fill="none" stroke="#1f6bf9" stroke-width="5" stroke-linejoin="round" stroke-linecap="round"/>
<polyline points="442.5,155.25 466.25,155" fill="none" stroke="#1f6bf9" stroke-width="4.5" stroke-linejoin="round" stroke-linecap="round"/>
<polyline points="413.1,140.6 418,145.5 442.5,145.5" fill="none" stroke="#1f6bf9" stroke-width="3.5" stroke-linejoin="round" stroke-linecap="round"/>
<polyline points="474.75,140.6 477.5,145 477.5,157 460,176 453.1,169" fill="none" stroke="#1f6bf9" stroke-width="4.5" stroke-linejoin="round" stroke-linecap="round"/>
<polyline points="479.4,169 479.4,216.5" fill="none" stroke="#1f6bf9" stroke-width="4.5" stroke-linejoin="round" stroke-linecap="round"/>
<polyline points="489.4,140.6 489.4,158 497,166 501.25,169 514.4,178.4" fill="none" stroke="#1f6bf9" stroke-width="4.5" stroke-linejoin="round" stroke-linecap="round"/>
<polyline points="527.4,169.4 527.6,229" fill="none" stroke="#1f6bf9" stroke-width="7" stroke-linejoin="round" stroke-linecap="round"/>
<polyline points="526,122 526,137 553,164" fill="none" stroke="#1f6bf9" stroke-width="5.8" stroke-linejoin="round" stroke-linecap="round"/>
<polyline points="195,243.6 195,215.5 206.9,203.6" fill="none" stroke="#1f6bf9" stroke-width="4.4" stroke-linejoin="round" stroke-linecap="round"/>
<polyline points="184,255 207.3,254.9" fill="none" stroke="#1f6bf9" stroke-width="5" stroke-linejoin="round" stroke-linecap="round"/>
<polyline points="206.8,238.6 217,249.2 217.4,269" fill="none" stroke="#1f6bf9" stroke-width="4" stroke-linejoin="round" stroke-linecap="round"/>
<polyline points="195,265.3 203,268 217.4,269 241,291.9" fill="none" stroke="#1f6bf9" stroke-width="4.6" stroke-linejoin="round" stroke-linecap="round"/>
<polyline points="227,254.9 237.2,244.6 313,244.6" fill="none" stroke="#1f6bf9" stroke-width="6.5" stroke-linejoin="round" stroke-linecap="round"/>
<polygon points="228,262 239,251 239,284.4 243,284.4" fill="#1f6bf9"/>
<polyline points="313.4,230 313.4,270 328.9,287 328.9,292" fill="none" stroke="#1f6bf9" stroke-width="5.8" stroke-linejoin="round" stroke-linecap="round"/>
<polyline points="313.6,231 317,228.3 338,228.3 345,231.5 396,231.5" fill="none" stroke="#1f6bf9" stroke-width="6.5" stroke-linejoin="round" stroke-linecap="round"/>
<polyline points="313.5,286 313.5,292" fill="none" stroke="#1f6bf9" stroke-width="8" stroke-linejoin="round" stroke-linecap="butt"/>
<polyline points="327.4,206.1 313,206.1" fill="none" stroke="#1f6bf9" stroke-width="4.5" stroke-linejoin="round" stroke-linecap="round"/>
<polyline points="294.25,216.1 312.4,216.1" fill="none" stroke="#1f6bf9" stroke-width="4.5" stroke-linejoin="round" stroke-linecap="round"/>
<polyline points="346.4,216.7 346.4,204.4 360.2,188.1" fill="none" stroke="#1f6bf9" stroke-width="4.4" stroke-linejoin="round" stroke-linecap="round"/>
<polyline points="373,216.3 395,194 397.5,192.5 423,192.5 430,188.75" fill="none" stroke="#1f6bf9" stroke-width="4.4" stroke-linejoin="round" stroke-linecap="round"/>
<polyline points="389.9,216.5 405.6,216.5 420,216.5 429.5,226 429.5,235 418,246.5 413.7,253" fill="none" stroke="#1f6bf9" stroke-width="4.5" stroke-linejoin="round" stroke-linecap="round"/>
<polyline points="429.5,235 418,246.5 411,254" fill="none" stroke="#1f6bf9" stroke-width="7" stroke-linejoin="round" stroke-linecap="round"/>
<polyline points="432.5,216.5 447,231 466.9,230.5" fill="none" stroke="#1f6bf9" stroke-width="4.5" stroke-linejoin="round" stroke-linecap="round"/>
<polyline points="447,231 472.25,257.5" fill="none" stroke="#1f6bf9" stroke-width="4.5" stroke-linejoin="round" stroke-linecap="round"/>
<polyline points="453.1,216.5 462,212.5 466.75,213" fill="none" stroke="#1f6bf9" stroke-width="4.5" stroke-linejoin="round" stroke-linecap="round"/>
<polyline points="480,216.5 480,169" fill="none" stroke="#1f6bf9" stroke-width="4.5" stroke-linejoin="round" stroke-linecap="round"/>
<polyline points="500.7,216.5 514.2,213" fill="none" stroke="#1f6bf9" stroke-width="4" stroke-linejoin="round" stroke-linecap="round"/>
<polygon points="536.5,194 551.6,194 551.6,222 527,246.5 527,285 519.4,285 519.4,243 536.5,225.5" fill="#1f6bf9"/>
<polygon points="546.8,165 552,160 558.7,166 558.7,196 559.1,197 559.1,226 541.3,244 541.3,302 530.6,302 530.6,247.5 555.5,223 555.5,199 546.8,190.5" fill="#1f6bf9"/>
<polyline points="514.2,230.5 521,238" fill="none" stroke="#1f6bf9" stroke-width="4.5" stroke-linejoin="round" stroke-linecap="round"/>
<polyline points="523,275 513.5,277.5 489,277.5" fill="none" stroke="#1f6bf9" stroke-width="5.5" stroke-linejoin="round" stroke-linecap="butt"/>
<polygon points="519.4,268 527,268 527,272 517,281 505,281 505,274.5 513,274.5" fill="#1f6bf9"/>
<polyline points="487.5,282.5 466.5,304 461,311 461,324" fill="none" stroke="#000" stroke-width="3.5" stroke-linejoin="round" stroke-linecap="round"/>
<polyline points="528.8,253.75 528.8,271.25 517.5,282.5 487.5,282.5" fill="none" stroke="#000" stroke-width="3.5" stroke-linejoin="round" stroke-linecap="round"/>
<polyline points="489.1,257.5 489.1,274 461,302" fill="none" stroke="#1f6bf9" stroke-width="5.6" stroke-linejoin="round" stroke-linecap="round"/>
<polyline points="480.25,269.4 470,279 456,279" fill="none" stroke="#1f6bf9" stroke-width="4.5" stroke-linejoin="round" stroke-linecap="round"/>
<polyline points="447,231 472.25,257.5" fill="none" stroke="#1f6bf9" stroke-width="4.5" stroke-linejoin="round" stroke-linecap="round"/>
<polyline points="500.9,216.5 501.25,234 510.3,243.5 510.3,250.5" fill="none" stroke="#1f6bf9" stroke-width="5" stroke-linejoin="round" stroke-linecap="round"/>
<polyline points="466.75,213 475,223 505,253 510.3,263.7" fill="none" stroke="#1f6bf9" stroke-width="5" stroke-linejoin="round" stroke-linecap="round"/>
<polygon points="120,375 142.5,375 152,384.5 152,409 120,409" fill="#000"/>
<polygon points="542.5,385 552.5,375 576,375 576,409 542.5,409" fill="#000"/>
<polyline points="186,258 186,262.5 193,273 213.75,273.75 237.5,297.5 277.5,298 277.5,375.3" fill="none" stroke="#000" stroke-width="3.8" stroke-linejoin="round" stroke-linecap="round"/>
<polyline points="150,300 205,357.5 252.5,357.5 263.75,375.3 343.75,375.3 348.75,371 348.75,346 364.7,330 364.7,296" fill="none" stroke="#000" stroke-width="3.8" stroke-linejoin="round" stroke-linecap="round"/>
<polyline points="294.4,375.3 294.4,313 299.5,308 299.5,290" fill="none" stroke="#000" stroke-width="3.8" stroke-linejoin="round" stroke-linecap="round"/>
<polyline points="311.5,375.3 311.5,359 322.5,348.5 335,337.25 335,326 331,322 317.5,321 307.5,311 307.5,290" fill="none" stroke="#000" stroke-width="3.8" stroke-linejoin="round" stroke-linecap="round"/>
<polyline points="323.75,290 323.75,307.25 327.5,311.6 335,311.6 338,308 338,290" fill="none" stroke="#000" stroke-width="3.8" stroke-linejoin="round" stroke-linecap="round"/>
<polyline points="388.1,290 388.1,321 364.4,346 364.4,372 366.9,375.6 431.25,375.6 435,371.25 435,362.5 440,357 492.5,356 543.3,302 543.3,246" fill="none" stroke="#000" stroke-width="3.7" stroke-linejoin="round" stroke-linecap="round"/>
<polyline points="417.5,290 417.5,318 382,354 382,375.6" fill="none" stroke="#000" stroke-width="3.8" stroke-linejoin="round" stroke-linecap="round"/>
<polyline points="422,290 422,312 430,320 456,320.5 461,324 461,333 453,340 425,340 400,364 400,375.6" fill="none" stroke="#000" stroke-width="4" stroke-linejoin="round" stroke-linecap="round"/>
<circle cx="135.4" cy="108" r="13.4" fill="#50e4fc"/><circle cx="135.4" cy="108" r="6" fill="#000"/>
<circle cx="180" cy="114.25" r="4.4" fill="#50e4fc"/><circle cx="180" cy="114.25" r="1.4" fill="#000"/>
<circle cx="170.8" cy="121.9" r="4.4" fill="#50e4fc"/><circle cx="170.8" cy="121.9" r="1.4" fill="#000"/>
<circle cx="188.8" cy="121.9" r="4.4" fill="#50e4fc"/><circle cx="188.8" cy="121.9" r="1.4" fill="#000"/>
<circle cx="170.9" cy="131.6" r="4.4" fill="#50e4fc"/><circle cx="170.9" cy="131.6" r="1.4" fill="#000"/>
<circle cx="188.8" cy="131.6" r="4.4" fill="#50e4fc"/><circle cx="188.8" cy="131.6" r="1.4" fill="#000"/>
<circle cx="217.8" cy="121.3" r="4" fill="#50e4fc"/><circle cx="217.8" cy="121.3" r="1.4" fill="#000"/>
<circle cx="229" cy="121.3" r="4" fill="#50e4fc"/><circle cx="229" cy="121.3" r="1.4" fill="#000"/>
<circle cx="211.4" cy="139.1" r="4.8" fill="#50e4fc"/><circle cx="211.4" cy="139.1" r="1.5" fill="#000"/>
<circle cx="252.8" cy="122.1" r="5.7" fill="#50e4fc"/><circle cx="252.8" cy="122.1" r="2.2" fill="#000"/>
<circle cx="270.4" cy="122.1" r="5.7" fill="#50e4fc"/><circle cx="270.4" cy="122.1" r="2.2" fill="#000"/>
<circle cx="302.4" cy="116.1" r="5" fill="#50e4fc"/><circle cx="302.4" cy="116.1" r="1.6" fill="#000"/>
<circle cx="315.5" cy="116.1" r="5" fill="#50e4fc"/><circle cx="315.5" cy="116.1" r="1.6" fill="#000"/>
<circle cx="356.75" cy="116.1" r="5" fill="#50e4fc"/><circle cx="356.75" cy="116.1" r="1.6" fill="#000"/>
<circle cx="369.9" cy="116.1" r="5" fill="#50e4fc"/><circle cx="369.9" cy="116.1" r="1.6" fill="#000"/>
<circle cx="323" cy="138.6" r="5" fill="#50e4fc"/><circle cx="323" cy="138.6" r="1.6" fill="#000"/>
<circle cx="358.6" cy="138.6" r="5" fill="#50e4fc"/><circle cx="358.6" cy="138.6" r="1.6" fill="#000"/>
<circle cx="397.4" cy="104.9" r="5" fill="#50e4fc"/><circle cx="397.4" cy="104.9" r="1.6" fill="#000"/>
<circle cx="412.9" cy="105.5" r="4.8" fill="#50e4fc"/><circle cx="412.9" cy="105.5" r="1.5" fill="#000"/>
<circle cx="412.9" cy="141" r="4.8" fill="#50e4fc"/><circle cx="412.9" cy="141" r="1.5" fill="#000"/>
<circle cx="427.9" cy="105.5" r="4.8" fill="#50e4fc"/><circle cx="427.9" cy="105.5" r="1.5" fill="#000"/>
<circle cx="427.9" cy="141" r="4.8" fill="#50e4fc"/><circle cx="427.9" cy="141" r="1.5" fill="#000"/>
<circle cx="442.9" cy="105.5" r="4.8" fill="#50e4fc"/><circle cx="442.9" cy="105.5" r="1.5" fill="#000"/>
<circle cx="442.9" cy="141" r="4.8" fill="#50e4fc"/><circle cx="442.9" cy="141" r="1.5" fill="#000"/>
<circle cx="474.75" cy="105.5" r="4.8" fill="#50e4fc"/><circle cx="474.75" cy="105.5" r="1.5" fill="#000"/>
<circle cx="474.75" cy="141" r="4.8" fill="#50e4fc"/><circle cx="474.75" cy="141" r="1.5" fill="#000"/>
<circle cx="489.1" cy="105.5" r="4.8" fill="#50e4fc"/><circle cx="489.1" cy="105.5" r="1.5" fill="#000"/>
<circle cx="489.1" cy="141" r="4.8" fill="#50e4fc"/><circle cx="489.1" cy="141" r="1.5" fill="#000"/>
<circle cx="458.5" cy="112.4" r="4.8" fill="#50e4fc"/><circle cx="458.5" cy="112.4" r="1.5" fill="#000"/>
<circle cx="458.5" cy="130.5" r="4.8" fill="#50e4fc"/><circle cx="458.5" cy="130.5" r="1.5" fill="#000"/>
<circle cx="517.25" cy="114.25" r="4.4" fill="#50e4fc"/><circle cx="517.25" cy="114.25" r="1.4" fill="#000"/>
<circle cx="508.5" cy="123" r="4.4" fill="#50e4fc"/><circle cx="508.5" cy="123" r="1.4" fill="#000"/>
<circle cx="526" cy="123" r="4.4" fill="#50e4fc"/><circle cx="526" cy="123" r="1.4" fill="#000"/>
<circle cx="508.5" cy="131.75" r="4.4" fill="#50e4fc"/><circle cx="508.5" cy="131.75" r="1.4" fill="#000"/>
<circle cx="526" cy="131.75" r="4.4" fill="#50e4fc"/><circle cx="526" cy="131.75" r="1.4" fill="#000"/>
<circle cx="560" cy="108" r="13.2" fill="#50e4fc"/><circle cx="560" cy="108" r="6.2" fill="#000"/>
<circle cx="553.7" cy="130.7" r="4.4" fill="#50e4fc"/><circle cx="553.7" cy="130.7" r="1.4" fill="#000"/>
<circle cx="553.7" cy="139.4" r="4.4" fill="#50e4fc"/><circle cx="553.7" cy="139.4" r="1.4" fill="#000"/>
<circle cx="553.7" cy="148.6" r="4.4" fill="#50e4fc"/><circle cx="553.7" cy="148.6" r="1.4" fill="#000"/>
<circle cx="553.7" cy="166.3" r="4.4" fill="#50e4fc"/><circle cx="553.7" cy="166.3" r="1.4" fill="#000"/>
<circle cx="553.7" cy="184.5" r="4.4" fill="#50e4fc"/><circle cx="553.7" cy="184.5" r="1.4" fill="#000"/>
<circle cx="283.75" cy="151.25" r="5" fill="#50e4fc"/><circle cx="283.75" cy="151.25" r="1.6" fill="#000"/>
<circle cx="331.9" cy="151.25" r="5" fill="#50e4fc"/><circle cx="331.9" cy="151.25" r="1.6" fill="#000"/>
<circle cx="288.75" cy="165" r="4.75" fill="#50e4fc"/><circle cx="288.75" cy="165" r="1.5" fill="#000"/>
<circle cx="324.4" cy="165" r="4.75" fill="#50e4fc"/><circle cx="324.4" cy="165" r="1.5" fill="#000"/>
<circle cx="288.75" cy="185.6" r="4.75" fill="#50e4fc"/><circle cx="288.75" cy="185.6" r="1.5" fill="#000"/>
<circle cx="324.4" cy="185.6" r="4.75" fill="#50e4fc"/><circle cx="324.4" cy="185.6" r="1.5" fill="#000"/>
<circle cx="240.6" cy="159.4" r="4.1" fill="#50e4fc"/><circle cx="240.6" cy="159.4" r="1.3" fill="#000"/>
<circle cx="226.25" cy="169.75" r="4.1" fill="#50e4fc"/><circle cx="226.25" cy="169.75" r="1.3" fill="#000"/>
<circle cx="240.6" cy="179.4" r="4.1" fill="#50e4fc"/><circle cx="240.6" cy="179.4" r="1.3" fill="#000"/>
<circle cx="271.25" cy="159.4" r="4.1" fill="#50e4fc"/><circle cx="271.25" cy="159.4" r="1.3" fill="#000"/>
<circle cx="256.9" cy="169.75" r="4.1" fill="#50e4fc"/><circle cx="256.9" cy="169.75" r="1.3" fill="#000"/>
<circle cx="271.25" cy="179.4" r="4.1" fill="#50e4fc"/><circle cx="271.25" cy="179.4" r="1.3" fill="#000"/>
<circle cx="360" cy="151.9" r="4.1" fill="#50e4fc"/><circle cx="360" cy="151.9" r="1.3" fill="#000"/>
<circle cx="346.25" cy="158.1" r="4.1" fill="#50e4fc"/><circle cx="346.25" cy="158.1" r="1.3" fill="#000"/>
<circle cx="375" cy="158.75" r="4.1" fill="#50e4fc"/><circle cx="375" cy="158.75" r="1.3" fill="#000"/>
<circle cx="345" cy="176.25" r="4.1" fill="#50e4fc"/><circle cx="345" cy="176.25" r="1.3" fill="#000"/>
<circle cx="375" cy="176.9" r="4.1" fill="#50e4fc"/><circle cx="375" cy="176.9" r="1.3" fill="#000"/>
<circle cx="360" cy="188.1" r="4.1" fill="#50e4fc"/><circle cx="360" cy="188.1" r="1.3" fill="#000"/>
<circle cx="397.5" cy="153.1" r="4.8" fill="#50e4fc"/><circle cx="397.5" cy="153.1" r="1.5" fill="#000"/>
<circle cx="390" cy="181.25" r="4.75" fill="#50e4fc"/><circle cx="390" cy="181.25" r="1.5" fill="#000"/>
<circle cx="419.2" cy="155.3" r="4.5" fill="#50e4fc"/><circle cx="419.2" cy="155.3" r="1.4" fill="#000"/>
<circle cx="406.05" cy="169" r="4.5" fill="#50e4fc"/><circle cx="406.05" cy="169" r="1.4" fill="#000"/>
<circle cx="432.25" cy="169" r="4.5" fill="#50e4fc"/><circle cx="432.25" cy="169" r="1.4" fill="#000"/>
<circle cx="466.25" cy="155.3" r="4.5" fill="#50e4fc"/><circle cx="466.25" cy="155.3" r="1.4" fill="#000"/>
<circle cx="453.1" cy="169" r="4.5" fill="#50e4fc"/><circle cx="453.1" cy="169" r="1.4" fill="#000"/>
<circle cx="479.3" cy="169" r="4.5" fill="#50e4fc"/><circle cx="479.3" cy="169" r="1.4" fill="#000"/>
<circle cx="514.4" cy="155.3" r="4.5" fill="#50e4fc"/><circle cx="514.4" cy="155.3" r="1.4" fill="#000"/>
<circle cx="501.25" cy="169" r="4.5" fill="#50e4fc"/><circle cx="501.25" cy="169" r="1.4" fill="#000"/>
<circle cx="527.45" cy="169" r="4.5" fill="#50e4fc"/><circle cx="527.45" cy="169" r="1.4" fill="#000"/>
<circle cx="466.25" cy="178.4" r="4.5" fill="#50e4fc"/><circle cx="466.25" cy="178.4" r="1.4" fill="#000"/>
<circle cx="514.4" cy="178.4" r="4.5" fill="#50e4fc"/><circle cx="514.4" cy="178.4" r="1.4" fill="#000"/>
<circle cx="171.1" cy="165.3" r="4.4" fill="#50e4fc"/><circle cx="171.1" cy="165.3" r="1.4" fill="#000"/>
<circle cx="187.4" cy="165.3" r="4.4" fill="#50e4fc"/><circle cx="187.4" cy="165.3" r="1.4" fill="#000"/>
<circle cx="171.25" cy="205.1" r="4.4" fill="#50e4fc"/><circle cx="171.25" cy="205.1" r="1.4" fill="#000"/>
<circle cx="187.5" cy="205.1" r="4.4" fill="#50e4fc"/><circle cx="187.5" cy="205.1" r="1.4" fill="#000"/>
<circle cx="211.6" cy="186.4" r="4.8" fill="#50e4fc"/><circle cx="211.6" cy="186.4" r="1.5" fill="#000"/>
<circle cx="141.25" cy="131.75" r="4.2" fill="#50e4fc"/><circle cx="141.25" cy="131.75" r="1.4" fill="#000"/>
<circle cx="141.25" cy="140.5" r="4.2" fill="#50e4fc"/><circle cx="141.25" cy="140.5" r="1.4" fill="#000"/>
<circle cx="141.25" cy="149" r="4.2" fill="#50e4fc"/><circle cx="141.25" cy="149" r="1.4" fill="#000"/>
<circle cx="141.25" cy="166.9" r="4.2" fill="#50e4fc"/><circle cx="141.25" cy="166.9" r="1.4" fill="#000"/>
<circle cx="141.25" cy="184.4" r="4.2" fill="#50e4fc"/><circle cx="141.25" cy="184.4" r="1.4" fill="#000"/>
<circle cx="251.25" cy="367.25" r="6.9" fill="#50e4fc"/><circle cx="251.25" cy="367.25" r="2.5" fill="#000"/>
<circle cx="268.75" cy="367.25" r="6.9" fill="#50e4fc"/><circle cx="268.75" cy="367.25" r="2.5" fill="#000"/>
<circle cx="286.25" cy="367.25" r="6.9" fill="#50e4fc"/><circle cx="286.25" cy="367.25" r="2.5" fill="#000"/>
<circle cx="303.75" cy="367.25" r="6.9" fill="#50e4fc"/><circle cx="303.75" cy="367.25" r="2.5" fill="#000"/>
<circle cx="321.25" cy="367.25" r="6.9" fill="#50e4fc"/><circle cx="321.25" cy="367.25" r="2.5" fill="#000"/>
<circle cx="338.75" cy="367.25" r="6.9" fill="#50e4fc"/><circle cx="338.75" cy="367.25" r="2.5" fill="#000"/>
<circle cx="356.25" cy="367.25" r="6.9" fill="#50e4fc"/><circle cx="356.25" cy="367.25" r="2.5" fill="#000"/>
<circle cx="373.75" cy="367.25" r="6.9" fill="#50e4fc"/><circle cx="373.75" cy="367.25" r="2.5" fill="#000"/>
<circle cx="391.25" cy="367.25" r="6.9" fill="#50e4fc"/><circle cx="391.25" cy="367.25" r="2.5" fill="#000"/>
<circle cx="408.75" cy="367.25" r="6.9" fill="#50e4fc"/><circle cx="408.75" cy="367.25" r="2.5" fill="#000"/>
<circle cx="426.25" cy="367.25" r="6.9" fill="#50e4fc"/><circle cx="426.25" cy="367.25" r="2.5" fill="#000"/>
<circle cx="443.75" cy="367.25" r="6.9" fill="#50e4fc"/><circle cx="443.75" cy="367.25" r="2.5" fill="#000"/>
<circle cx="135.5" cy="392.5" r="13.4" fill="#50e4fc"/><circle cx="135.5" cy="392.5" r="6" fill="#000"/>
<circle cx="560" cy="392.5" r="13.4" fill="#50e4fc"/><circle cx="560" cy="392.5" r="6" fill="#000"/>
<circle cx="162" cy="330.5" r="8" fill="#50e4fc"/><circle cx="162" cy="330.5" r="3" fill="#000"/>
<circle cx="197" cy="330.5" r="8" fill="#50e4fc"/><circle cx="197" cy="330.5" r="3" fill="#000"/>
<circle cx="498.75" cy="330.5" r="8" fill="#50e4fc"/><circle cx="498.75" cy="330.5" r="3" fill="#000"/>
<circle cx="533.75" cy="330.5" r="8" fill="#50e4fc"/><circle cx="533.75" cy="330.5" r="3" fill="#000"/>
<circle cx="238.75" cy="331.6" r="6.5" fill="#50e4fc"/><circle cx="238.75" cy="331.6" r="2.2" fill="#000"/>
<circle cx="325.6" cy="331.6" r="6.5" fill="#50e4fc"/><circle cx="325.6" cy="331.6" r="2.2" fill="#000"/>
<circle cx="350.6" cy="331.6" r="6.5" fill="#50e4fc"/><circle cx="350.6" cy="331.6" r="2.2" fill="#000"/>
<circle cx="437.5" cy="331.6" r="6.5" fill="#50e4fc"/><circle cx="437.5" cy="331.6" r="2.2" fill="#000"/>
<circle cx="234.4" cy="305.3" r="5" fill="#50e4fc"/><circle cx="234.4" cy="305.3" r="1.6" fill="#000"/>
<circle cx="283.75" cy="305.3" r="5" fill="#50e4fc"/><circle cx="283.75" cy="305.3" r="1.6" fill="#000"/>
<circle cx="293.1" cy="305.3" r="5" fill="#50e4fc"/><circle cx="293.1" cy="305.3" r="1.6" fill="#000"/>
<circle cx="328.75" cy="305.3" r="5" fill="#50e4fc"/><circle cx="328.75" cy="305.3" r="1.6" fill="#000"/>
<circle cx="346.9" cy="305.3" r="5" fill="#50e4fc"/><circle cx="346.9" cy="305.3" r="1.6" fill="#000"/>
<circle cx="396.25" cy="305.3" r="5" fill="#50e4fc"/><circle cx="396.25" cy="305.3" r="1.6" fill="#000"/>
<circle cx="405" cy="305.3" r="5" fill="#50e4fc"/><circle cx="405" cy="305.3" r="1.6" fill="#000"/>
<circle cx="440.6" cy="305.3" r="5" fill="#50e4fc"/><circle cx="440.6" cy="305.3" r="1.6" fill="#000"/>
<circle cx="454.4" cy="328.75" r="5" fill="#50e4fc"/><circle cx="454.4" cy="328.75" r="1.6" fill="#000"/>
<circle cx="241" cy="292" r="4.8" fill="#50e4fc"/><circle cx="241" cy="292" r="1.5" fill="#000"/>
<circle cx="276.3" cy="292" r="4.8" fill="#50e4fc"/><circle cx="276.3" cy="292" r="1.5" fill="#000"/>
<circle cx="292.6" cy="292" r="4.8" fill="#50e4fc"/><circle cx="292.6" cy="292" r="1.5" fill="#000"/>
<circle cx="313.5" cy="292" r="4.8" fill="#50e4fc"/><circle cx="313.5" cy="292" r="1.5" fill="#000"/>
<circle cx="328.9" cy="292" r="4.8" fill="#50e4fc"/><circle cx="328.9" cy="292" r="1.5" fill="#000"/>
<circle cx="356.9" cy="292" r="4.8" fill="#50e4fc"/><circle cx="356.9" cy="292" r="1.5" fill="#000"/>
<circle cx="391.9" cy="292" r="4.8" fill="#50e4fc"/><circle cx="391.9" cy="292" r="1.5" fill="#000"/>
<circle cx="409.4" cy="292" r="4.8" fill="#50e4fc"/><circle cx="409.4" cy="292" r="1.5" fill="#000"/>
<circle cx="424.75" cy="292" r="4.8" fill="#50e4fc"/><circle cx="424.75" cy="292" r="1.5" fill="#000"/>
<circle cx="440" cy="292" r="4.8" fill="#50e4fc"/><circle cx="440" cy="292" r="1.5" fill="#000"/>
<circle cx="159.4" cy="243.6" r="5" fill="#50e4fc"/><circle cx="159.4" cy="243.6" r="1.6" fill="#000"/>
<circle cx="195" cy="243.6" r="5" fill="#50e4fc"/><circle cx="195" cy="243.6" r="1.6" fill="#000"/>
<circle cx="159.4" cy="265" r="5" fill="#50e4fc"/><circle cx="159.4" cy="265" r="1.6" fill="#000"/>
<circle cx="195" cy="265.3" r="5" fill="#50e4fc"/><circle cx="195" cy="265.3" r="1.6" fill="#000"/>
<circle cx="206.9" cy="203.6" r="5" fill="#50e4fc"/><circle cx="206.9" cy="203.6" r="1.6" fill="#000"/>
<circle cx="206.9" cy="238.6" r="5" fill="#50e4fc"/><circle cx="206.9" cy="238.6" r="1.6" fill="#000"/>
<circle cx="220.6" cy="216.1" r="5" fill="#50e4fc"/><circle cx="220.6" cy="216.1" r="1.6" fill="#000"/>
<circle cx="240.6" cy="216.1" r="5" fill="#50e4fc"/><circle cx="240.6" cy="216.1" r="1.6" fill="#000"/>
<circle cx="294.25" cy="216.1" r="5" fill="#50e4fc"/><circle cx="294.25" cy="216.1" r="1.6" fill="#000"/>
<circle cx="312.4" cy="216.1" r="5" fill="#50e4fc"/><circle cx="312.4" cy="216.1" r="1.6" fill="#000"/>
<circle cx="327.4" cy="206.1" r="5" fill="#50e4fc"/><circle cx="327.4" cy="206.1" r="1.6" fill="#000"/>
<circle cx="327.4" cy="241.75" r="5" fill="#50e4fc"/><circle cx="327.4" cy="241.75" r="1.6" fill="#000"/>
<circle cx="359.9" cy="202.4" r="4.5" fill="#50e4fc"/><circle cx="359.9" cy="202.4" r="1.4" fill="#000"/>
<circle cx="346.5" cy="216.5" r="4.5" fill="#50e4fc"/><circle cx="346.5" cy="216.5" r="1.4" fill="#000"/>
<circle cx="373.25" cy="216.5" r="4.5" fill="#50e4fc"/><circle cx="373.25" cy="216.5" r="1.4" fill="#000"/>
<circle cx="389.9" cy="216.5" r="4.75" fill="#50e4fc"/><circle cx="389.9" cy="216.5" r="1.5" fill="#000"/>
<circle cx="405.5" cy="216.5" r="4.5" fill="#50e4fc"/><circle cx="405.5" cy="216.5" r="1.4" fill="#000"/>
<circle cx="432.4" cy="216.5" r="4.5" fill="#50e4fc"/><circle cx="432.4" cy="216.5" r="1.4" fill="#000"/>
<circle cx="419" cy="230.5" r="4.5" fill="#50e4fc"/><circle cx="419" cy="230.5" r="1.4" fill="#000"/>
<circle cx="453.25" cy="216.5" r="4.5" fill="#50e4fc"/><circle cx="453.25" cy="216.5" r="1.4" fill="#000"/>
<circle cx="480.15" cy="216.5" r="4.5" fill="#50e4fc"/><circle cx="480.15" cy="216.5" r="1.4" fill="#000"/>
<circle cx="466.75" cy="230.5" r="4.5" fill="#50e4fc"/><circle cx="466.75" cy="230.5" r="1.4" fill="#000"/>
<circle cx="500.7" cy="216.5" r="4.5" fill="#50e4fc"/><circle cx="500.7" cy="216.5" r="1.4" fill="#000"/>
<circle cx="527.6" cy="216.5" r="4.5" fill="#50e4fc"/><circle cx="527.6" cy="216.5" r="1.4" fill="#000"/>
<circle cx="514.2" cy="230.5" r="4.5" fill="#50e4fc"/><circle cx="514.2" cy="230.5" r="1.4" fill="#000"/>
<circle cx="466.75" cy="213" r="4.2" fill="#50e4fc"/><circle cx="466.75" cy="213" r="1.3" fill="#000"/>
<circle cx="514.2" cy="213" r="4.2" fill="#50e4fc"/><circle cx="514.2" cy="213" r="1.3" fill="#000"/>
<circle cx="405.6" cy="243.6" r="5" fill="#50e4fc"/><circle cx="405.6" cy="243.6" r="1.6" fill="#000"/>
<circle cx="451.9" cy="243.6" r="5" fill="#50e4fc"/><circle cx="451.9" cy="243.6" r="1.6" fill="#000"/>
<circle cx="545" cy="199.9" r="4.6" fill="#50e4fc"/><circle cx="545" cy="199.9" r="1.5" fill="#000"/>
<circle cx="545" cy="217.4" r="4.6" fill="#50e4fc"/><circle cx="545" cy="217.4" r="1.5" fill="#000"/>
<circle cx="207.3" cy="254.9" r="4.2" fill="#50e4fc"/><circle cx="207.3" cy="254.9" r="1.3" fill="#000"/>
<circle cx="227" cy="254.9" r="4.2" fill="#50e4fc"/><circle cx="227" cy="254.9" r="1.3" fill="#000"/>
<circle cx="217.4" cy="269" r="4.2" fill="#50e4fc"/><circle cx="217.4" cy="269" r="1.3" fill="#000"/>
<circle cx="472.25" cy="257.5" r="4.2" fill="#50e4fc"/><circle cx="472.25" cy="257.5" r="1.3" fill="#000"/>
<circle cx="489.1" cy="257.5" r="4.2" fill="#50e4fc"/><circle cx="489.1" cy="257.5" r="1.3" fill="#000"/>
<circle cx="480.25" cy="269.4" r="4.2" fill="#50e4fc"/><circle cx="480.25" cy="269.4" r="1.3" fill="#000"/>
<circle cx="510.3" cy="250.5" r="5" fill="#50e4fc"/><circle cx="510.3" cy="250.5" r="1.6" fill="#000"/>
<circle cx="510.3" cy="264.5" r="5" fill="#50e4fc"/><circle cx="510.3" cy="264.5" r="1.6" fill="#000"/>
<circle cx="550" cy="250.5" r="5" fill="#50e4fc"/><circle cx="550" cy="250.5" r="1.6" fill="#000"/>
<circle cx="550" cy="264.5" r="5" fill="#50e4fc"/><circle cx="550" cy="264.5" r="1.6" fill="#000"/>
<circle cx="454.4" cy="291.9" r="4.8" fill="#50e4fc"/><circle cx="454.4" cy="291.9" r="1.5" fill="#000"/>
<circle cx="135.4" cy="108" r="13.8" fill="none" stroke="#ff0000" stroke-width="1"/>
<circle cx="560" cy="108" r="13.6" fill="none" stroke="#ff0000" stroke-width="1"/>
<rect x="162.25" y="104.25" width="35.35" height="34.75" fill="none" stroke="#ff0000" stroke-width="1" shape-rendering="crispEdges"/>
<circle cx="180" cy="121" r="9" fill="none" stroke="#ff0000" stroke-width="1"/>
<polyline points="173.5,114.5 186.5,127.5" fill="none" stroke="#ff0000" stroke-width="1"/>
<text x="176.3" y="102.3" font-size="7" fill="#ff0000" stroke="#ff0000" stroke-width=".3" text-anchor="start" font-weight="normal">R6</text>
<circle cx="135.5" cy="392.5" r="13.8" fill="none" stroke="#ff0000" stroke-width="1"/>
<circle cx="560" cy="392.5" r="13.8" fill="none" stroke="#ff0000" stroke-width="1"/>
<rect x="120.5" y="93.5" width="454.5" height="314" fill="none" stroke="#ff0000" stroke-width="1" shape-rendering="crispEdges"/>
<rect x="128" y="127.4" width="26.5" height="61.6" fill="none" stroke="#ff0000" stroke-width="1" shape-rendering="crispEdges"/>
<polyline points="141.25,149 141.25,166.9" fill="none" stroke="#ff0000" stroke-width="1" shape-rendering="crispEdges"/>
<polyline points="137.3,156 145.2,156" fill="none" stroke="#ff0000" stroke-width="1" shape-rendering="crispEdges"/>
<polyline points="137.3,158 145.2,158" fill="none" stroke="#ff0000" stroke-width="1" shape-rendering="crispEdges"/>
<text x="126.5" y="199" font-size="7" fill="#ff0000" stroke="#ff0000" stroke-width=".3" text-anchor="start" font-weight="normal" letter-spacing="1">C3</text>
<circle cx="223.3" cy="121.3" r="10.5" fill="none" stroke="#ff0000" stroke-width="1"/>
<path d="M219.6,117.4 L219.6,125.2 L225.3,121.3 Z" fill="none" stroke="#ff0000" stroke-width="1" stroke-linecap="butt"/>
<polyline points="226,117.4 226,125.2" fill="none" stroke="#ff0000" stroke-width="1" shape-rendering="crispEdges"/>
<text x="218" y="108" font-size="7.8" fill="#ff0000" stroke="#ff0000" stroke-width=".3" text-anchor="start" font-weight="normal" letter-spacing="0.3">HL1</text>
<rect x="244.2" y="96.75" width="35.5" height="39.45" fill="none" stroke="#ff0000" stroke-width="1" shape-rendering="crispEdges"/>
<polyline points="244.2,108.3 279.7,108.3" fill="none" stroke="#ff0000" stroke-width="1" shape-rendering="crispEdges"/>
<polyline points="244.2,111.5 279.7,111.5" fill="none" stroke="#ff0000" stroke-width="1" shape-rendering="crispEdges"/>
<polyline points="244.2,132.3 279.7,132.3" fill="none" stroke="#ff0000" stroke-width="1" shape-rendering="crispEdges"/>
<polyline points="261.5,96.75 261.5,108.3" fill="none" stroke="#ff0000" stroke-width="1" shape-rendering="crispEdges"/>
<text x="246" y="105.8" font-size="7" fill="#ff0000" stroke="#ff0000" stroke-width=".3" text-anchor="start" font-weight="normal">GND</text>
<text x="266.5" y="105.8" font-size="7.5" fill="#ff0000" stroke="#ff0000" stroke-width=".3" text-anchor="start" font-weight="normal">IN</text>
<rect x="295.5" y="98" width="81.25" height="35.6" fill="none" stroke="#ff0000" stroke-width="1" shape-rendering="crispEdges"/>
<polyline points="315.5,116.1 356.75,116.1" fill="none" stroke="#ff0000" stroke-width="1" shape-rendering="crispEdges"/>
<polyline points="335.4,113 335.4,119.3" fill="none" stroke="#ff0000" stroke-width="1.4" shape-rendering="crispEdges"/>
<polyline points="337.4,113 337.4,119.3" fill="none" stroke="#ff0000" stroke-width="1" shape-rendering="crispEdges"/>
<text x="334" y="106.3" font-size="7.3" fill="#ff0000" stroke="#ff0000" stroke-width=".3" text-anchor="start" font-weight="normal">C1</text>
<rect x="332.4" y="135.4" width="17.5" height="6.9" fill="none" stroke="#ff0000" stroke-width="1" shape-rendering="crispEdges"/>
<polyline points="323,138.6 332.4,138.6" fill="none" stroke="#ff0000" stroke-width="1" shape-rendering="crispEdges"/>
<polyline points="349.9,138.6 358.6,138.6" fill="none" stroke="#ff0000" stroke-width="1" shape-rendering="crispEdges"/>
<text x="341.15" y="140.83" font-size="5.5" fill="#ff0000" stroke="#ff0000" stroke-width=".3" text-anchor="middle" font-weight="normal">R1</text>
<rect x="393.2" y="113.6" width="8.4" height="30" fill="none" stroke="#ff0000" stroke-width="1" shape-rendering="crispEdges"/>
<polyline points="397.4,104.9 397.4,113.6" fill="none" stroke="#ff0000" stroke-width="1" shape-rendering="crispEdges"/>
<polyline points="397.4,143.6 397.4,153.1" fill="none" stroke="#ff0000" stroke-width="1" shape-rendering="crispEdges"/>
<text x="399.38" y="128.6" font-size="5.5" fill="#ff0000" stroke="#ff0000" stroke-width=".3" text-anchor="middle" font-weight="normal" transform="rotate(-90 399.38 128.6)">R3</text>
<rect x="409.3" y="114.25" width="7.2" height="17.5" fill="none" stroke="#ff0000" stroke-width="1" shape-rendering="crispEdges"/>
<polyline points="412.9,105.5 412.9,114.25" fill="none" stroke="#ff0000" stroke-width="1" shape-rendering="crispEdges"/>
<polyline points="412.9,131.75 412.9,141" fill="none" stroke="#ff0000" stroke-width="1" shape-rendering="crispEdges"/>
<text x="414.88" y="123" font-size="5.5" fill="#ff0000" stroke="#ff0000" stroke-width=".3" text-anchor="middle" font-weight="normal" transform="rotate(-90 414.88 123)">R2</text>
<rect x="424.3" y="114.25" width="7.2" height="17.5" fill="none" stroke="#ff0000" stroke-width="1" shape-rendering="crispEdges"/>
<polyline points="427.9,105.5 427.9,114.25" fill="none" stroke="#ff0000" stroke-width="1" shape-rendering="crispEdges"/>
<polyline points="427.9,131.75 427.9,141" fill="none" stroke="#ff0000" stroke-width="1" shape-rendering="crispEdges"/>
<text x="429.88" y="123" font-size="5.5" fill="#ff0000" stroke="#ff0000" stroke-width=".3" text-anchor="middle" font-weight="normal" transform="rotate(-90 429.88 123)">R7</text>
<rect x="439.3" y="114.25" width="7.2" height="17.5" fill="none" stroke="#ff0000" stroke-width="1" shape-rendering="crispEdges"/>
<polyline points="442.9,105.5 442.9,114.25" fill="none" stroke="#ff0000" stroke-width="1" shape-rendering="crispEdges"/>
<polyline points="442.9,131.75 442.9,141" fill="none" stroke="#ff0000" stroke-width="1" shape-rendering="crispEdges"/>
<text x="444.88" y="123" font-size="5.5" fill="#ff0000" stroke="#ff0000" stroke-width=".3" text-anchor="middle" font-weight="normal" transform="rotate(-90 444.88 123)">R5</text>
<rect x="471.15" y="114.25" width="7.2" height="17.5" fill="none" stroke="#ff0000" stroke-width="1" shape-rendering="crispEdges"/>
<polyline points="474.75,105.5 474.75,114.25" fill="none" stroke="#ff0000" stroke-width="1" shape-rendering="crispEdges"/>
<polyline points="474.75,131.75 474.75,141" fill="none" stroke="#ff0000" stroke-width="1" shape-rendering="crispEdges"/>
<text x="476.73" y="123" font-size="5.5" fill="#ff0000" stroke="#ff0000" stroke-width=".3" text-anchor="middle" font-weight="normal" transform="rotate(-90 476.73 123)">R16</text>
<rect x="485.5" y="114.25" width="7.2" height="17.5" fill="none" stroke="#ff0000" stroke-width="1" shape-rendering="crispEdges"/>
<polyline points="489.1,105.5 489.1,114.25" fill="none" stroke="#ff0000" stroke-width="1" shape-rendering="crispEdges"/>
<polyline points="489.1,131.75 489.1,141" fill="none" stroke="#ff0000" stroke-width="1" shape-rendering="crispEdges"/>
<text x="491.08" y="123" font-size="5.5" fill="#ff0000" stroke="#ff0000" stroke-width=".3" text-anchor="middle" font-weight="normal" transform="rotate(-90 491.08 123)">R13</text>
<rect x="452.25" y="108.6" width="12.5" height="26.3" fill="none" stroke="#ff0000" stroke-width="1" shape-rendering="crispEdges"/>
<polyline points="458.5,112.4 458.5,120.2" fill="none" stroke="#ff0000" stroke-width="1" shape-rendering="crispEdges"/>
<polyline points="458.5,122.8 458.5,130.5" fill="none" stroke="#ff0000" stroke-width="1" shape-rendering="crispEdges"/>
<polyline points="454.7,120.2 462.3,120.2" fill="none" stroke="#ff0000" stroke-width="1" shape-rendering="crispEdges"/>
<polyline points="454.7,122.8 462.3,122.8" fill="none" stroke="#ff0000" stroke-width="1" shape-rendering="crispEdges"/>
<text x="454" y="106.6" font-size="7" fill="#ff0000" stroke="#ff0000" stroke-width=".3" text-anchor="start" font-weight="normal">C2</text>
<rect x="499.75" y="104.25" width="35.65" height="35" fill="none" stroke="#ff0000" stroke-width="1" shape-rendering="crispEdges"/>
<circle cx="517.25" cy="121.1" r="8.9" fill="none" stroke="#ff0000" stroke-width="1"/>
<polyline points="511,114.8 523.6,127.5" fill="none" stroke="#ff0000" stroke-width="1"/>
<text x="511.6" y="102.4" font-size="7" fill="#ff0000" stroke="#ff0000" stroke-width=".3" text-anchor="start" font-weight="normal">R17</text>
<rect x="540.6" y="126.75" width="26.6" height="61.45" fill="none" stroke="#ff0000" stroke-width="1" shape-rendering="crispEdges"/>
<polyline points="553.75,148.1 553.75,165.6" fill="none" stroke="#ff0000" stroke-width="1" shape-rendering="crispEdges"/>
<polyline points="550,156.3 557.6,156.3" fill="none" stroke="#ff0000" stroke-width="1" shape-rendering="crispEdges"/>
<polyline points="550,158.6 557.6,158.6" fill="none" stroke="#ff0000" stroke-width="1" shape-rendering="crispEdges"/>
<text x="558.5" y="198.5" font-size="7" fill="#ff0000" stroke="#ff0000" stroke-width=".3" text-anchor="start" font-weight="normal" letter-spacing="0.8">C4</text>
<rect x="292.5" y="146.9" width="29.4" height="9.1" fill="none" stroke="#ff0000" stroke-width="1" shape-rendering="crispEdges"/>
<polyline points="283.75,151.25 292.5,151.25" fill="none" stroke="#ff0000" stroke-width="1" shape-rendering="crispEdges"/>
<polyline points="321.9,151.25 331.9,151.25" fill="none" stroke="#ff0000" stroke-width="1" shape-rendering="crispEdges"/>
<text x="307.2" y="153.97" font-size="7" fill="#ff0000" stroke="#ff0000" stroke-width=".3" text-anchor="middle" font-weight="normal">R11</text>
<rect x="297.5" y="161.5" width="17.5" height="7" fill="none" stroke="#ff0000" stroke-width="1" shape-rendering="crispEdges"/>
<polyline points="288.75,165 297.5,165" fill="none" stroke="#ff0000" stroke-width="1" shape-rendering="crispEdges"/>
<polyline points="315,165 324.4,165" fill="none" stroke="#ff0000" stroke-width="1" shape-rendering="crispEdges"/>
<text x="306.25" y="167.16" font-size="6" fill="#ff0000" stroke="#ff0000" stroke-width=".3" text-anchor="middle" font-weight="normal">R10</text>
<rect x="298.1" y="182.3" width="16.9" height="7" fill="none" stroke="#ff0000" stroke-width="1" shape-rendering="crispEdges"/>
<polyline points="288.75,185.6 298.1,185.6" fill="none" stroke="#ff0000" stroke-width="1" shape-rendering="crispEdges"/>
<polyline points="315,185.6 324.4,185.6" fill="none" stroke="#ff0000" stroke-width="1" shape-rendering="crispEdges"/>
<text x="306.55" y="187.96" font-size="6" fill="#ff0000" stroke="#ff0000" stroke-width=".3" text-anchor="middle" font-weight="normal">R4</text>
<path d="M226.25,158.75 H235.75 A10.9,10.9 0 0 1 235.75,180.6 H226.25 Z" fill="none" stroke="#ff0000" stroke-width="1" stroke-linecap="butt"/>
<text x="225.75" y="153.8" font-size="7.5" fill="#ff0000" stroke="#ff0000" stroke-width=".3" text-anchor="start" font-weight="normal" letter-spacing="0.4">VT6</text>
<text x="231.25" y="161.5" font-size="5" fill="#ff0000" stroke="#ff0000" stroke-width=".3" text-anchor="start" font-weight="normal" transform="rotate(90 231.25 161.5)">Э</text>
<text x="231.25" y="168.5" font-size="5" fill="#ff0000" stroke="#ff0000" stroke-width=".3" text-anchor="start" font-weight="normal" transform="rotate(90 231.25 168.5)">Б</text>
<text x="231.25" y="175.5" font-size="5" fill="#ff0000" stroke="#ff0000" stroke-width=".3" text-anchor="start" font-weight="normal" transform="rotate(90 231.25 175.5)">К</text>
<path d="M256.9,158.75 H266.4 A10.9,10.9 0 0 1 266.4,180.6 H256.9 Z" fill="none" stroke="#ff0000" stroke-width="1" stroke-linecap="butt"/>
<text x="256.4" y="153.8" font-size="7.5" fill="#ff0000" stroke="#ff0000" stroke-width=".3" text-anchor="start" font-weight="normal" letter-spacing="0.4">VT3</text>
<text x="261.9" y="161.5" font-size="5" fill="#ff0000" stroke="#ff0000" stroke-width=".3" text-anchor="start" font-weight="normal" transform="rotate(90 261.9 161.5)">Э</text>
<text x="261.9" y="168.5" font-size="5" fill="#ff0000" stroke="#ff0000" stroke-width=".3" text-anchor="start" font-weight="normal" transform="rotate(90 261.9 168.5)">Б</text>
<text x="261.9" y="175.5" font-size="5" fill="#ff0000" stroke="#ff0000" stroke-width=".3" text-anchor="start" font-weight="normal" transform="rotate(90 261.9 175.5)">К</text>
<rect x="208" y="154.4" width="7" height="16.85" fill="none" stroke="#ff0000" stroke-width="1" shape-rendering="crispEdges"/>
<polyline points="211.5,139.1 211.5,154.4" fill="none" stroke="#ff0000" stroke-width="1" shape-rendering="crispEdges"/>
<polyline points="211.5,171.25 211.5,186.4" fill="none" stroke="#ff0000" stroke-width="1" shape-rendering="crispEdges"/>
<text x="213.3" y="162.825" font-size="5" fill="#ff0000" stroke="#ff0000" stroke-width=".3" text-anchor="middle" font-weight="normal" transform="rotate(-90 213.3 162.825)">R3</text>
<circle cx="179.4" cy="165.3" r="17.5" fill="none" stroke="#ff0000" stroke-width="1"/>
<polyline points="171.1,165.3 177.3,165.3" fill="none" stroke="#ff0000" stroke-width="1" shape-rendering="crispEdges"/>
<polyline points="181.4,165.3 187.4,165.3" fill="none" stroke="#ff0000" stroke-width="1" shape-rendering="crispEdges"/>
<rect x="177.3" y="161.1" width="1.9" height="8.4" fill="none" stroke="#ff0000" stroke-width="1" shape-rendering="crispEdges"/>
<polyline points="181.4,161.1 181.4,169.5" fill="none" stroke="#ff0000" stroke-width="1" shape-rendering="crispEdges"/>
<path d="M186.2,151.70000000000002 A15.3,15.3 0 0 1 186.2,178.9" fill="none" stroke="#ff0000" stroke-width="3.4" stroke-linecap="butt"/>
<text x="192" y="151.8" font-size="7.5" fill="#ff0000" stroke="#ff0000" stroke-width=".3" text-anchor="start" font-weight="normal">C6</text>
<circle cx="179.4" cy="205.1" r="17.5" fill="none" stroke="#ff0000" stroke-width="1"/>
<polyline points="171.1,205.1 177.3,205.1" fill="none" stroke="#ff0000" stroke-width="1" shape-rendering="crispEdges"/>
<polyline points="181.4,205.1 187.4,205.1" fill="none" stroke="#ff0000" stroke-width="1" shape-rendering="crispEdges"/>
<rect x="177.3" y="200.9" width="1.9" height="8.4" fill="none" stroke="#ff0000" stroke-width="1" shape-rendering="crispEdges"/>
<polyline points="181.4,200.9 181.4,209.3" fill="none" stroke="#ff0000" stroke-width="1" shape-rendering="crispEdges"/>
<path d="M186.2,191.5 A15.3,15.3 0 0 1 186.2,218.7" fill="none" stroke="#ff0000" stroke-width="3.4" stroke-linecap="butt"/>
<text x="192" y="191.6" font-size="7.5" fill="#ff0000" stroke="#ff0000" stroke-width=".3" text-anchor="start" font-weight="normal">C7</text>
<rect x="221.25" y="193.75" width="94.25" height="43.95" fill="none" stroke="#ff0000" stroke-width="1" shape-rendering="crispEdges"/>
<polyline points="240.6,216.1 294.25,216.1" fill="none" stroke="#ff0000" stroke-width="1" shape-rendering="crispEdges"/>
<polyline points="266.5,213 266.5,219.3" fill="none" stroke="#ff0000" stroke-width="1.4" shape-rendering="crispEdges"/>
<polyline points="268.4,213 268.4,219.3" fill="none" stroke="#ff0000" stroke-width="1" shape-rendering="crispEdges"/>
<text x="263.5" y="203.2" font-size="7" fill="#ff0000" stroke="#ff0000" stroke-width=".3" text-anchor="start" font-weight="normal">C5</text>
<rect x="203.7" y="212.4" width="7" height="16.85" fill="none" stroke="#ff0000" stroke-width="1" shape-rendering="crispEdges"/>
<polyline points="207.2,203.6 207.2,212.4" fill="none" stroke="#ff0000" stroke-width="1" shape-rendering="crispEdges"/>
<polyline points="207.2,229.25 207.2,238.6" fill="none" stroke="#ff0000" stroke-width="1" shape-rendering="crispEdges"/>
<text x="209" y="220.825" font-size="5" fill="#ff0000" stroke="#ff0000" stroke-width=".3" text-anchor="middle" font-weight="normal" transform="rotate(-90 209 220.825)">R12</text>
<rect x="323.9" y="215" width="7" height="16" fill="none" stroke="#ff0000" stroke-width="1" shape-rendering="crispEdges"/>
<polyline points="327.4,206.1 327.4,215" fill="none" stroke="#ff0000" stroke-width="1" shape-rendering="crispEdges"/>
<polyline points="327.4,231 327.4,241.75" fill="none" stroke="#ff0000" stroke-width="1" shape-rendering="crispEdges"/>
<text x="329.2" y="223" font-size="5" fill="#ff0000" stroke="#ff0000" stroke-width=".3" text-anchor="middle" font-weight="normal" transform="rotate(-90 329.2 223)">R8</text>
<polyline points="159.4,243.6 195,243.6" fill="none" stroke="#ff0000" stroke-width="1" shape-rendering="crispEdges"/>
<path d="M173.7,240.3 L173.7,246.9 L180,243.6 Z" fill="#ff0000" stroke="#ff0000" stroke-width="1" stroke-linecap="butt"/>
<polyline points="181,240 181,247.2" fill="none" stroke="#ff0000" stroke-width="1" shape-rendering="crispEdges"/>
<text x="171" y="236" font-size="7" fill="#ff0000" stroke="#ff0000" stroke-width=".3" text-anchor="start" font-weight="normal">VD 4</text>
<rect x="168.5" y="261.9" width="17.75" height="6.85" fill="none" stroke="#ff0000" stroke-width="1" shape-rendering="crispEdges"/>
<polyline points="159.4,265.3 168.5,265.3" fill="none" stroke="#ff0000" stroke-width="1" shape-rendering="crispEdges"/>
<polyline points="186.25,265.3 195,265.3" fill="none" stroke="#ff0000" stroke-width="1" shape-rendering="crispEdges"/>
<text x="177.375" y="267.485" font-size="6" fill="#ff0000" stroke="#ff0000" stroke-width=".3" text-anchor="middle" font-weight="normal">R22</text>
<path d="M206.3,268.6 L205.6,261.5 A11.4,11.4 0 0 1 228.4,261.5 L227.7,268.6 Z" fill="none" stroke="#ff0000" stroke-width="1" stroke-linecap="butt"/>
<text x="208.5" y="247.5" font-size="7" fill="#ff0000" stroke="#ff0000" stroke-width=".3" text-anchor="start" font-weight="normal">VT13</text>
<text x="207.5" y="266.5" font-size="6.5" fill="#ff0000" stroke="#ff0000" stroke-width=".3" text-anchor="start" font-weight="normal">Э</text>
<text x="214.5" y="266.5" font-size="6.5" fill="#ff0000" stroke="#ff0000" stroke-width=".3" text-anchor="start" font-weight="normal">Б</text>
<text x="221.5" y="266.5" font-size="6.5" fill="#ff0000" stroke="#ff0000" stroke-width=".3" text-anchor="start" font-weight="normal">К</text>
<rect x="239.1" y="249.1" width="102.8" height="34.8" fill="none" stroke="#ff0000" stroke-width="1" shape-rendering="crispEdges"/>
<polyline points="239.1,275.3 341.9,275.3" fill="none" stroke="#ff0000" stroke-width="1" shape-rendering="crispEdges"/>
<path d="M264.4,274.5 V252 Q264.4,249.6 266.6,249.6 H314.6 Q316.8,249.6 316.8,252 V274.5 Z" fill="none" stroke="#ff0000" stroke-width="1" stroke-linecap="butt"/>
<circle cx="251.9" cy="262.6" r="10.4" fill="none" stroke="#ff0000" stroke-width="1"/>
<circle cx="251.9" cy="262.6" r="4.4" fill="#000" stroke="#ffffff" stroke-width="1.5"/>
<polyline points="250.3,261 253.5,264.2" fill="none" stroke="#1f6bf9" stroke-width="0.9"/>
<polyline points="250.3,264.2 253.5,261" fill="none" stroke="#1f6bf9" stroke-width="0.9"/>
<circle cx="329.3" cy="262.6" r="10.4" fill="none" stroke="#ff0000" stroke-width="1"/>
<circle cx="329.3" cy="262.6" r="4.4" fill="#000" stroke="#ffffff" stroke-width="1.5"/>
<polyline points="327.7,261 330.9,264.2" fill="none" stroke="#1f6bf9" stroke-width="0.9"/>
<polyline points="327.7,264.2 330.9,261" fill="none" stroke="#1f6bf9" stroke-width="0.9"/>
<polyline points="256.6,260.5 324.7,260.5" fill="none" stroke="#ff0000" stroke-width="1" shape-rendering="crispEdges"/>
<polyline points="256.6,264.6 324.7,264.6" fill="none" stroke="#ff0000" stroke-width="1" shape-rendering="crispEdges"/>
<text x="279.6" y="272.4" font-size="8" fill="#ff0000" stroke="#ff0000" stroke-width=".3" text-anchor="start" font-weight="normal" letter-spacing="0.3">VT15</text>
<text x="291" y="283.2" font-size="8.5" fill="#ff0000" stroke="#ff0000" stroke-width=".3" text-anchor="start" font-weight="normal">Э</text>
<text x="311" y="283.2" font-size="8.5" fill="#ff0000" stroke="#ff0000" stroke-width=".3" text-anchor="start" font-weight="normal">К</text>
<text x="326.5" y="283.2" font-size="8.5" fill="#ff0000" stroke="#ff0000" stroke-width=".3" text-anchor="start" font-weight="normal">Б</text>
<rect x="354.2" y="249.1" width="102.8" height="34.8" fill="none" stroke="#ff0000" stroke-width="1" shape-rendering="crispEdges"/>
<polyline points="354.2,275.3 457,275.3" fill="none" stroke="#ff0000" stroke-width="1" shape-rendering="crispEdges"/>
<path d="M379.5,274.5 V252 Q379.5,249.6 381.7,249.6 H429.7 Q431.9,249.6 431.9,252 V274.5 Z" fill="none" stroke="#ff0000" stroke-width="1" stroke-linecap="butt"/>
<circle cx="367" cy="262.6" r="10.4" fill="none" stroke="#ff0000" stroke-width="1"/>
<circle cx="367" cy="262.6" r="4.4" fill="#000" stroke="#ffffff" stroke-width="1.5"/>
<polyline points="365.4,261 368.6,264.2" fill="none" stroke="#1f6bf9" stroke-width="0.9"/>
<polyline points="365.4,264.2 368.6,261" fill="none" stroke="#1f6bf9" stroke-width="0.9"/>
<circle cx="444.4" cy="262.6" r="10.4" fill="none" stroke="#ff0000" stroke-width="1"/>
<circle cx="444.4" cy="262.6" r="4.4" fill="#000" stroke="#ffffff" stroke-width="1.5"/>
<polyline points="442.8,261 446,264.2" fill="none" stroke="#1f6bf9" stroke-width="0.9"/>
<polyline points="442.8,264.2 446,261" fill="none" stroke="#1f6bf9" stroke-width="0.9"/>
<polyline points="371.7,260.5 439.8,260.5" fill="none" stroke="#ff0000" stroke-width="1" shape-rendering="crispEdges"/>
<polyline points="371.7,264.6 439.8,264.6" fill="none" stroke="#ff0000" stroke-width="1" shape-rendering="crispEdges"/>
<text x="394.7" y="272.4" font-size="8" fill="#ff0000" stroke="#ff0000" stroke-width=".3" text-anchor="start" font-weight="normal" letter-spacing="0.3">VT14</text>
<text x="406.5" y="283.2" font-size="8.5" fill="#ff0000" stroke="#ff0000" stroke-width=".3" text-anchor="start" font-weight="normal">Э</text>
<text x="423" y="283.2" font-size="8.5" fill="#ff0000" stroke="#ff0000" stroke-width=".3" text-anchor="start" font-weight="normal">К</text>
<text x="437.7" y="283.2" font-size="8.5" fill="#ff0000" stroke="#ff0000" stroke-width=".3" text-anchor="start" font-weight="normal">Б</text>
<rect x="250" y="288.5" width="17.5" height="6.75" fill="none" stroke="#ff0000" stroke-width="1" shape-rendering="crispEdges"/>
<polyline points="241,292 250,292" fill="none" stroke="#ff0000" stroke-width="1" shape-rendering="crispEdges"/>
<polyline points="267.5,292 276.3,292" fill="none" stroke="#ff0000" stroke-width="1" shape-rendering="crispEdges"/>
<text x="258.75" y="294.035" font-size="6" fill="#ff0000" stroke="#ff0000" stroke-width=".3" text-anchor="middle" font-weight="normal">R25</text>
<rect x="244.4" y="301.9" width="29.35" height="8.1" fill="none" stroke="#ff0000" stroke-width="1" shape-rendering="crispEdges"/>
<polyline points="234.4,305.3 244.4,305.3" fill="none" stroke="#ff0000" stroke-width="1" shape-rendering="crispEdges"/>
<polyline points="273.75,305.3 283.75,305.3" fill="none" stroke="#ff0000" stroke-width="1" shape-rendering="crispEdges"/>
<text x="259.075" y="308.47" font-size="7" fill="#ff0000" stroke="#ff0000" stroke-width=".3" text-anchor="middle" font-weight="normal">R23</text>
<rect x="302.5" y="301.9" width="16.9" height="6.7" fill="none" stroke="#ff0000" stroke-width="1" shape-rendering="crispEdges"/>
<polyline points="293.1,305.3 302.5,305.3" fill="none" stroke="#ff0000" stroke-width="1" shape-rendering="crispEdges"/>
<polyline points="319.4,305.3 328.75,305.3" fill="none" stroke="#ff0000" stroke-width="1" shape-rendering="crispEdges"/>
<text x="310.95" y="307.41" font-size="6" fill="#ff0000" stroke="#ff0000" stroke-width=".3" text-anchor="middle" font-weight="normal">R20</text>
<rect x="357.1" y="301.4" width="29.8" height="7.8" fill="none" stroke="#ff0000" stroke-width="1" shape-rendering="crispEdges"/>
<polyline points="346.9,305.3 357.1,305.3" fill="none" stroke="#ff0000" stroke-width="1" shape-rendering="crispEdges"/>
<polyline points="386.9,305.3 396.25,305.3" fill="none" stroke="#ff0000" stroke-width="1" shape-rendering="crispEdges"/>
<text x="372" y="307.82" font-size="7" fill="#ff0000" stroke="#ff0000" stroke-width=".3" text-anchor="middle" font-weight="normal">R21</text>
<rect x="414.4" y="301.7" width="17.5" height="6.9" fill="none" stroke="#ff0000" stroke-width="1" shape-rendering="crispEdges"/>
<polyline points="405,305.3 414.4,305.3" fill="none" stroke="#ff0000" stroke-width="1" shape-rendering="crispEdges"/>
<polyline points="431.9,305.3 440.6,305.3" fill="none" stroke="#ff0000" stroke-width="1" shape-rendering="crispEdges"/>
<text x="423.15" y="307.31" font-size="6" fill="#ff0000" stroke="#ff0000" stroke-width=".3" text-anchor="middle" font-weight="normal">R12</text>
<rect x="366.25" y="288.7" width="16.85" height="6.5" fill="none" stroke="#ff0000" stroke-width="1" shape-rendering="crispEdges"/>
<polyline points="356.9,292 366.25,292" fill="none" stroke="#ff0000" stroke-width="1" shape-rendering="crispEdges"/>
<polyline points="383.1,292 391.9,292" fill="none" stroke="#ff0000" stroke-width="1" shape-rendering="crispEdges"/>
<text x="374.675" y="294.11" font-size="6" fill="#ff0000" stroke="#ff0000" stroke-width=".3" text-anchor="middle" font-weight="normal">R9</text>
<rect x="450.9" y="301.6" width="7" height="16.9" fill="none" stroke="#ff0000" stroke-width="1" shape-rendering="crispEdges"/>
<polyline points="454.4,291.9 454.4,301.6" fill="none" stroke="#ff0000" stroke-width="1" shape-rendering="crispEdges"/>
<polyline points="454.4,318.5 454.4,328.75" fill="none" stroke="#ff0000" stroke-width="1" shape-rendering="crispEdges"/>
<text x="456.2" y="310.05" font-size="5" fill="#ff0000" stroke="#ff0000" stroke-width=".3" text-anchor="middle" font-weight="normal" transform="rotate(-90 456.2 310.05)">R24</text>
<rect x="243.5" y="314.5" width="77.75" height="33.75" fill="none" stroke="#ff0000" stroke-width="1" shape-rendering="crispEdges"/>
<text x="275" y="335.6" font-size="9" fill="#ff0000" stroke="#ff0000" stroke-width=".3" text-anchor="start" font-weight="normal" letter-spacing="0.3">R27</text>
<polyline points="238.75,331.6 243.5,331.6" fill="none" stroke="#ff0000" stroke-width="1" shape-rendering="crispEdges"/>
<polyline points="321.25,331.6 325.6,331.6" fill="none" stroke="#ff0000" stroke-width="1" shape-rendering="crispEdges"/>
<rect x="355.6" y="314.5" width="77.9" height="33.75" fill="none" stroke="#ff0000" stroke-width="1" shape-rendering="crispEdges"/>
<text x="378.5" y="335" font-size="9" fill="#ff0000" stroke="#ff0000" stroke-width=".3" text-anchor="start" font-weight="normal" letter-spacing="0.3">R26</text>
<polyline points="350.6,331.6 355.6,331.6" fill="none" stroke="#ff0000" stroke-width="1" shape-rendering="crispEdges"/>
<polyline points="433.5,331.6 437.5,331.6" fill="none" stroke="#ff0000" stroke-width="1" shape-rendering="crispEdges"/>
<circle cx="179.5" cy="330.5" r="54.6" fill="none" stroke="#ff0000" stroke-width="1"/>
<circle cx="516.25" cy="330.5" r="54.6" fill="none" stroke="#ff0000" stroke-width="1"/>
<path d="M149.5,299.5 A43,43 0 0 0 148,362" fill="none" stroke="#ff0000" stroke-width="9" stroke-linecap="round"/>
<path d="M486.5,299.5 A43,43 0 0 0 485,362" fill="none" stroke="#ff0000" stroke-width="9" stroke-linecap="round"/>
<polyline points="162,330.5 176.3,330.5" fill="none" stroke="#ff0000" stroke-width="1" shape-rendering="crispEdges"/>
<polyline points="181.5,330.5 197,330.5" fill="none" stroke="#ff0000" stroke-width="1" shape-rendering="crispEdges"/>
<rect x="176.3" y="318.8" width="2.6" height="22.5" fill="none" stroke="#ff0000" stroke-width="1" shape-rendering="crispEdges"/>
<polyline points="181.5,318.8 181.5,341.3" fill="none" stroke="#ff0000" stroke-width="1" shape-rendering="crispEdges"/>
<polyline points="498.75,330.5 512.6,330.5" fill="none" stroke="#ff0000" stroke-width="1" shape-rendering="crispEdges"/>
<polyline points="518,330.5 533.75,330.5" fill="none" stroke="#ff0000" stroke-width="1" shape-rendering="crispEdges"/>
<rect x="512.6" y="318.8" width="2.6" height="22.5" fill="none" stroke="#ff0000" stroke-width="1" shape-rendering="crispEdges"/>
<polyline points="518,318.8 518,341.3" fill="none" stroke="#ff0000" stroke-width="1" shape-rendering="crispEdges"/>
<text x="129.5" y="285" font-size="10" fill="#ff0000" stroke="#ff0000" stroke-width=".3" text-anchor="start" font-weight="normal">C 9</text>
<text x="550.5" y="284" font-size="10" fill="#ff0000" stroke="#ff0000" stroke-width=".3" text-anchor="start" font-weight="normal">C 10</text>
<rect x="243.1" y="352.5" width="210" height="53.2" fill="none" stroke="#ff0000" stroke-width="1" shape-rendering="crispEdges"/>
<polyline points="243.1,381.3 453.1,381.3" fill="none" stroke="#ff0000" stroke-width="1" shape-rendering="crispEdges"/>
<polyline points="277.5,352.5 277.5,405.7" fill="none" stroke="#ff0000" stroke-width="1" shape-rendering="crispEdges"/>
<polyline points="330.6,352.5 330.6,405.7" fill="none" stroke="#ff0000" stroke-width="1" shape-rendering="crispEdges"/>
<polyline points="365.6,352.5 365.6,405.7" fill="none" stroke="#ff0000" stroke-width="1" shape-rendering="crispEdges"/>
<polyline points="418.1,352.5 418.1,405.7" fill="none" stroke="#ff0000" stroke-width="1" shape-rendering="crispEdges"/>
<text x="246.8" y="390.3" font-size="8.5" fill="#ff0000" stroke="#ff0000" stroke-width=".3" text-anchor="start" font-weight="normal" textLength="26.8" lengthAdjust="spacingAndGlyphs">POWER</text>
<text x="250" y="402.5" font-size="11" fill="#ff0000" stroke="#ff0000" stroke-width=".3" text-anchor="start" font-weight="normal">U +</text>
<text x="283.5" y="390.5" font-size="8.5" fill="#ff0000" stroke="#ff0000" stroke-width=".3" text-anchor="start" font-weight="normal">Б</text>
<text x="300.5" y="390.5" font-size="8.5" fill="#ff0000" stroke="#ff0000" stroke-width=".3" text-anchor="start" font-weight="normal">Э</text>
<text x="318" y="390.5" font-size="8.5" fill="#ff0000" stroke="#ff0000" stroke-width=".3" text-anchor="start" font-weight="normal">К</text>
<text x="294.5" y="403.3" font-size="8.5" fill="#ff0000" stroke="#ff0000" stroke-width=".3" text-anchor="start" font-weight="normal">VT17</text>
<text x="331.8" y="390.3" font-size="8.2" fill="#ff0000" stroke="#ff0000" stroke-width=".3" text-anchor="start" font-weight="normal" letter-spacing="-0.3">OUTPUT</text>
<text x="371" y="390.5" font-size="8.5" fill="#ff0000" stroke="#ff0000" stroke-width=".3" text-anchor="start" font-weight="normal">Б</text>
<text x="389" y="390.5" font-size="8.5" fill="#ff0000" stroke="#ff0000" stroke-width=".3" text-anchor="start" font-weight="normal">Э</text>
<text x="406" y="390.5" font-size="8.5" fill="#ff0000" stroke="#ff0000" stroke-width=".3" text-anchor="start" font-weight="normal">К</text>
<text x="382" y="403.3" font-size="8.5" fill="#ff0000" stroke="#ff0000" stroke-width=".3" text-anchor="start" font-weight="normal">VT16</text>
<text x="421.8" y="390.3" font-size="8.5" fill="#ff0000" stroke="#ff0000" stroke-width=".3" text-anchor="start" font-weight="normal" textLength="26.8" lengthAdjust="spacingAndGlyphs">POWER</text>
<text x="426" y="402.5" font-size="11" fill="#ff0000" stroke="#ff0000" stroke-width=".3" text-anchor="start" font-weight="normal">U −</text>
<text x="461.8" y="402.3" font-size="10.5" fill="#ff0000" stroke="#ff0000" stroke-width=".3" text-anchor="start" font-weight="normal" letter-spacing="1.8">GE-UF-25W</text>
<circle cx="360.6" cy="169.4" r="21.3" fill="none" stroke="#ff0000" stroke-width="1"/>
<text x="352" y="168.5" font-size="7.5" fill="#ff0000" stroke="#ff0000" stroke-width=".3" text-anchor="start" font-weight="normal">VT2</text>
<text x="352" y="178.5" font-size="7.5" fill="#ff0000" stroke="#ff0000" stroke-width=".3" text-anchor="start" font-weight="normal">VT5</text>
<text x="350.5" y="162.5" font-size="6.5" fill="#ffff00" stroke="#ffff00" stroke-width=".3" text-anchor="start" font-weight="normal">8</text>
<text x="358.5" y="161.5" font-size="6.5" fill="#ffff00" stroke="#ffff00" stroke-width=".3" text-anchor="start" font-weight="normal">1</text>
<text x="367.5" y="163.5" font-size="6.5" fill="#ffff00" stroke="#ffff00" stroke-width=".3" text-anchor="start" font-weight="normal">2</text>
<text x="348.5" y="175" font-size="6.5" fill="#ffff00" stroke="#ffff00" stroke-width=".3" text-anchor="start" font-weight="normal">6</text>
<text x="369" y="176" font-size="6.5" fill="#ffff00" stroke="#ffff00" stroke-width=".3" text-anchor="start" font-weight="normal">4</text>
<text x="359" y="184" font-size="6.5" fill="#ffff00" stroke="#ffff00" stroke-width=".3" text-anchor="start" font-weight="normal">5</text>
<circle cx="419.4" cy="168.75" r="21" fill="none" stroke="#ff0000" stroke-width="1"/>
<text x="419.4" y="171.5" font-size="8" fill="#ff0000" stroke="#ff0000" stroke-width=".3" text-anchor="middle" font-weight="normal">VT1</text>
<text x="424.9" y="158.5" font-size="6.5" fill="#ff0000" stroke="#ff0000" stroke-width=".3" text-anchor="start" font-weight="normal">Б</text>
<text x="402.4" y="181.5" font-size="6.5" fill="#ff0000" stroke="#ff0000" stroke-width=".3" text-anchor="start" font-weight="normal">Э</text>
<text x="431.4" y="181" font-size="6.5" fill="#ff0000" stroke="#ff0000" stroke-width=".3" text-anchor="start" font-weight="normal">К</text>
<circle cx="466.25" cy="168.75" r="21" fill="none" stroke="#ff0000" stroke-width="1"/>
<text x="466.25" y="171.5" font-size="8" fill="#ff0000" stroke="#ff0000" stroke-width=".3" text-anchor="middle" font-weight="normal">VT10</text>
<text x="471.75" y="158.5" font-size="6.5" fill="#ff0000" stroke="#ff0000" stroke-width=".3" text-anchor="start" font-weight="normal">Б</text>
<text x="449.25" y="181.5" font-size="6.5" fill="#ff0000" stroke="#ff0000" stroke-width=".3" text-anchor="start" font-weight="normal">Э</text>
<text x="478.25" y="181" font-size="6.5" fill="#ff0000" stroke="#ff0000" stroke-width=".3" text-anchor="start" font-weight="normal">К</text>
<circle cx="514.4" cy="168.75" r="21" fill="none" stroke="#ff0000" stroke-width="1"/>
<text x="514.4" y="171.5" font-size="8" fill="#ff0000" stroke="#ff0000" stroke-width=".3" text-anchor="middle" font-weight="normal">VT7</text>
<text x="519.9" y="158.5" font-size="6.5" fill="#ff0000" stroke="#ff0000" stroke-width=".3" text-anchor="start" font-weight="normal">Б</text>
<text x="497.4" y="181.5" font-size="6.5" fill="#ff0000" stroke="#ff0000" stroke-width=".3" text-anchor="start" font-weight="normal">Э</text>
<text x="526.4" y="181" font-size="6.5" fill="#ff0000" stroke="#ff0000" stroke-width=".3" text-anchor="start" font-weight="normal">К</text>
<text x="411" y="182.5" font-size="7" fill="#ffff00" stroke="#ffff00" stroke-width=".3" text-anchor="start" font-weight="normal">MP21</text>
<text x="452" y="148.2" font-size="7" fill="#ffff00" stroke="#ffff00" stroke-width=".3" text-anchor="start" font-weight="normal">MP38</text>
<text x="506" y="148.2" font-size="7" fill="#ffff00" stroke="#ffff00" stroke-width=".3" text-anchor="start" font-weight="normal">MP38</text>
<circle cx="359.9" cy="216.75" r="21.3" fill="none" stroke="#ff0000" stroke-width="1"/>
<text x="360.5" y="220" font-size="7.5" fill="#ff0000" stroke="#ff0000" stroke-width=".3" text-anchor="middle" font-weight="normal">VT4</text>
<text x="365.5" y="205.5" font-size="6.5" fill="#ff0000" stroke="#ff0000" stroke-width=".3" text-anchor="start" font-weight="normal">Б</text>
<text x="343.5" y="229.5" font-size="6.5" fill="#ff0000" stroke="#ff0000" stroke-width=".3" text-anchor="start" font-weight="normal">Э</text>
<text x="372.5" y="229.5" font-size="6.5" fill="#ff0000" stroke="#ff0000" stroke-width=".3" text-anchor="start" font-weight="normal">К</text>
<text x="352" y="230.8" font-size="7" fill="#ffff00" stroke="#ffff00" stroke-width=".3" text-anchor="start" font-weight="normal">MP21</text>
<circle cx="419" cy="216.1" r="21" fill="none" stroke="#ff0000" stroke-width="1"/>
<text x="420" y="221.5" font-size="7.5" fill="#ff0000" stroke="#ff0000" stroke-width=".3" text-anchor="middle" font-weight="normal">VT12</text>
<text x="402" y="210.5" font-size="6.5" fill="#ff0000" stroke="#ff0000" stroke-width=".3" text-anchor="start" font-weight="normal">Б</text>
<text x="430" y="210.5" font-size="6.5" fill="#ff0000" stroke="#ff0000" stroke-width=".3" text-anchor="start" font-weight="normal">Э</text>
<text x="408" y="233.5" font-size="6.5" fill="#ff0000" stroke="#ff0000" stroke-width=".3" text-anchor="start" font-weight="normal">К</text>
<text x="409" y="203.3" font-size="7" fill="#ffff00" stroke="#ffff00" stroke-width=".3" text-anchor="start" font-weight="normal">GT404</text>
<circle cx="466.9" cy="216.1" r="21" fill="none" stroke="#ff0000" stroke-width="1"/>
<text x="467.9" y="221.5" font-size="7.5" fill="#ff0000" stroke="#ff0000" stroke-width=".3" text-anchor="middle" font-weight="normal">VT11</text>
<text x="449.9" y="210.5" font-size="6.5" fill="#ff0000" stroke="#ff0000" stroke-width=".3" text-anchor="start" font-weight="normal">Б</text>
<text x="477.9" y="210.5" font-size="6.5" fill="#ff0000" stroke="#ff0000" stroke-width=".3" text-anchor="start" font-weight="normal">Э</text>
<text x="455.9" y="233.5" font-size="6.5" fill="#ff0000" stroke="#ff0000" stroke-width=".3" text-anchor="start" font-weight="normal">К</text>
<text x="456.9" y="203.3" font-size="7" fill="#ffff00" stroke="#ffff00" stroke-width=".3" text-anchor="start" font-weight="normal">GT404</text>
<circle cx="514.4" cy="216.1" r="21" fill="none" stroke="#ff0000" stroke-width="1"/>
<text x="515.4" y="221.5" font-size="7.5" fill="#ff0000" stroke="#ff0000" stroke-width=".3" text-anchor="middle" font-weight="normal">VT8</text>
<text x="497.4" y="210.5" font-size="6.5" fill="#ff0000" stroke="#ff0000" stroke-width=".3" text-anchor="start" font-weight="normal">Б</text>
<text x="525.4" y="210.5" font-size="6.5" fill="#ff0000" stroke="#ff0000" stroke-width=".3" text-anchor="start" font-weight="normal">Э</text>
<text x="503.4" y="233.5" font-size="6.5" fill="#ff0000" stroke="#ff0000" stroke-width=".3" text-anchor="start" font-weight="normal">К</text>
<text x="504.4" y="203.3" font-size="7" fill="#ffff00" stroke="#ffff00" stroke-width=".3" text-anchor="start" font-weight="normal">GT404</text>
<polyline points="390,181.25 389.9,216.5" fill="none" stroke="#ff0000" stroke-width="1"/>
<path d="M386.6,195.5 H393.2 L389.9,202.4 Z" fill="#ff0000" stroke="#ff0000" stroke-width="1" stroke-linecap="butt"/>
<polyline points="386.3,203 393.5,203" fill="none" stroke="#ff0000" stroke-width="1" shape-rendering="crispEdges"/>
<text x="395" y="199" font-size="7" fill="#ff0000" stroke="#ff0000" stroke-width=".3" text-anchor="start" font-weight="normal">VD 1</text>
<polyline points="466.6,178.4 466.6,213" fill="none" stroke="#ff0000" stroke-width="1" shape-rendering="crispEdges"/>
<path d="M460.8,199.3 H472.40000000000003 L466.6,191.6 Z" fill="#ff0000" stroke="#ff0000" stroke-width="1" stroke-linecap="butt"/>
<polyline points="514.2,178.4 514.2,213" fill="none" stroke="#ff0000" stroke-width="1" shape-rendering="crispEdges"/>
<path d="M508.40000000000003,199.3 H520.0 L514.2,191.6 Z" fill="#ff0000" stroke="#ff0000" stroke-width="1" stroke-linecap="butt"/>
<text x="472.5" y="198.5" font-size="7" fill="#ff0000" stroke="#ff0000" stroke-width=".3" text-anchor="start" font-weight="normal">VD 3</text>
<text x="494.5" y="198.5" font-size="7" fill="#ff0000" stroke="#ff0000" stroke-width=".3" text-anchor="start" font-weight="normal">VD 2</text>
<polyline points="405.6,243.6 451.9,243.6" fill="none" stroke="#ff0000" stroke-width="1" shape-rendering="crispEdges"/>
<text x="427" y="241.3" font-size="6" fill="#ff0000" stroke="#ff0000" stroke-width=".3" text-anchor="start" font-weight="normal">J2</text>
<rect x="540" y="194.9" width="11.3" height="26.9" fill="none" stroke="#ff0000" stroke-width="1" shape-rendering="crispEdges"/>
<polyline points="545,199.9 545,207.5" fill="none" stroke="#ff0000" stroke-width="1" shape-rendering="crispEdges"/>
<polyline points="545,210 545,217.4" fill="none" stroke="#ff0000" stroke-width="1" shape-rendering="crispEdges"/>
<polyline points="541.8,207.5 548.3,207.5" fill="none" stroke="#ff0000" stroke-width="1" shape-rendering="crispEdges"/>
<polyline points="541.8,210 548.3,210" fill="none" stroke="#ff0000" stroke-width="1" shape-rendering="crispEdges"/>
<text x="541" y="229.3" font-size="7" fill="#ff0000" stroke="#ff0000" stroke-width=".3" text-anchor="start" font-weight="normal">C8</text>
<path d="M469,268.3 L468.6,261 A11.6,11.6 0 0 1 491.8,261 L491.3,268.3 Z" fill="none" stroke="#ff0000" stroke-width="1" stroke-linecap="butt"/>
<text x="473.8" y="248" font-size="7" fill="#ff0000" stroke="#ff0000" stroke-width=".3" text-anchor="start" font-weight="normal">VT9</text>
<text x="470" y="266.5" font-size="6.5" fill="#ff0000" stroke="#ff0000" stroke-width=".3" text-anchor="start" font-weight="normal">Э</text>
<text x="478" y="264" font-size="6.5" fill="#ff0000" stroke="#ff0000" stroke-width=".3" text-anchor="start" font-weight="normal">Б</text>
<text x="486.5" y="266.5" font-size="6.5" fill="#ff0000" stroke="#ff0000" stroke-width=".3" text-anchor="start" font-weight="normal">К</text>
<rect x="521.25" y="247.2" width="17.5" height="6.8" fill="none" stroke="#ff0000" stroke-width="1" shape-rendering="crispEdges"/>
<polyline points="510.6,250.25 521.25,250.25" fill="none" stroke="#ff0000" stroke-width="1" shape-rendering="crispEdges"/>
<polyline points="538.75,250.25 550,250.25" fill="none" stroke="#ff0000" stroke-width="1" shape-rendering="crispEdges"/>
<text x="530" y="252.76" font-size="6" fill="#ff0000" stroke="#ff0000" stroke-width=".3" text-anchor="middle" font-weight="normal">R14</text>
<rect x="521.25" y="261.9" width="17.5" height="6.7" fill="none" stroke="#ff0000" stroke-width="1" shape-rendering="crispEdges"/>
<polyline points="510.6,265 521.25,265" fill="none" stroke="#ff0000" stroke-width="1" shape-rendering="crispEdges"/>
<polyline points="538.75,265 550,265" fill="none" stroke="#ff0000" stroke-width="1" shape-rendering="crispEdges"/>
<text x="530" y="267.41" font-size="6" fill="#ff0000" stroke="#ff0000" stroke-width=".3" text-anchor="middle" font-weight="normal">R19</text>
</g>
<rect x="95" y="70" width="1050" height="22" fill="#f0f0f0"/>
<rect x="95" y="92" width="24.5" height="374" fill="#f0f0f0"/>
<rect x="119" y="91" width="1026" height="1.2" fill="#6e6e6e"/>
<rect x="119" y="91" width="1.2" height="375" fill="#6e6e6e"/>
<path d="M120.5,78 V91 M155.5,88 V91 M190.5,88 V91 M225.5,88 V91 M260.5,88 V91 M295.5,78 V91 M330.5,88 V91 M365.5,88 V91 M400.5,88 V91 M435.5,88 V91 M470.5,78 V91 M505.5,88 V91 M540.5,88 V91 M575.5,88 V91 M610.5,88 V91 M645.5,78 V91 M680.5,88 V91 M715.5,88 V91 M750.5,88 V91 M785.5,88 V91 M820.5,78 V91 M855.5,88 V91 M890.5,88 V91 M925.5,88 V91 M960.5,88 V91 M995.5,78 V91 M1030.5,88 V91 M1065.5,88 V91 M1100.5,88 V91 M1135.5,88 V91" stroke="#000" stroke-width="1" fill="none"/>
<text x="123.9" y="85" font-size="9.6" fill="#000">0</text>
<text x="298.9" y="85" font-size="9.6" fill="#000">50</text>
<text x="473.9" y="85" font-size="9.6" fill="#000">100</text>
<text x="648.9" y="85" font-size="9.6" fill="#000">150</text>
<text x="823.9" y="85" font-size="9.6" fill="#000">200</text>
<text x="998.9" y="85" font-size="9.6" fill="#000">250</text>
<text x="101.8" y="85.9" font-size="10.5" fill="#000" textLength="11.6" lengthAdjust="spacingAndGlyphs">мм</text>
<path d="M102.7,93.3 H119 M116,128.3 H119 M116,163.3 H119 M116,198.3 H119 M116,233.3 H119 M102.7,268.3 H119 M116,303.3 H119 M116,338.3 H119 M116,373.3 H119 M116,408.3 H119 M102.7,443.3 H119" stroke="#000" stroke-width="1" fill="none"/>
<text x="110" y="97.3" font-size="9.6" fill="#000" text-anchor="end" transform="rotate(-90 110 97.3)">0</text>
<text x="110" y="272.3" font-size="9.6" fill="#000" text-anchor="end" transform="rotate(-90 110 272.3)">50</text>
<text x="110" y="447.3" font-size="9.6" fill="#000" text-anchor="end" transform="rotate(-90 110 447.3)">100</text>
<path d="M156.6,71 V91 M98,168 H119" stroke="#ff0000" stroke-width="1.2" fill="none"/>
<path d="M120.6,109 V96 L123.2,93.6 H136" stroke="#f4f4f4" stroke-width="1" fill="none"/>
<g><circle cx="6.5" cy="10.5" r="5.8" fill="#18a018"/><circle cx="4.5" cy="4.5" r="2.6" fill="#30c030"/><circle cx="12" cy="9" r="2.4" fill="#30c030"/><circle cx="6" cy="10.5" r="1.7" fill="#0a5a0a"/></g>
<!-- toolbar separators -->
<g stroke="#8c8c8c" stroke-width="1.3">
<line x1="107.6" y1="44.5" x2="107.6" y2="66"/><line x1="169.6" y1="44.5" x2="169.6" y2="66"/>
<line x1="285.6" y1="44.5" x2="285.6" y2="66"/><line x1="470.6" y1="44.5" x2="470.6" y2="66"/>
<line x1="505.6" y1="44.5" x2="505.6" y2="66"/><line x1="567.6" y1="44.5" x2="567.6" y2="66"/>
<line x1="602.6" y1="44.5" x2="602.6" y2="66"/><line x1="664.6" y1="44.5" x2="664.6" y2="66"/>
</g>
<!-- new -->
<path d="M4.5,49.5 H11.5 L15,53 V61.8 H4.5 Z" fill="#fff" stroke="#000" stroke-width="1"/>
<path d="M11.5,49.5 V53 H15" fill="none" stroke="#000" stroke-width="1"/>
<!-- open -->
<path d="M29.5,62 V52.5 H33 L34.5,54 H39.5 V56.5" fill="#e8e860" stroke="#000" stroke-width="1"/>
<path d="M29.5,62 L34,56.5 H45 L40.5,62 Z" fill="#808000" stroke="#000" stroke-width="1"/>
<path d="M37.5,51.5 Q41,48 43.5,52" fill="none" stroke="#000" stroke-width="1"/><path d="M44.3,50 V53 H41.3 Z" fill="#000"/>
<!-- save -->
<rect x="57.2" y="49.6" width="13.4" height="12.8" fill="#808000" stroke="#000" stroke-width="1"/>
<rect x="60" y="50" width="8" height="5.6" fill="#f4f4f4"/>
<rect x="60" y="58.5" width="8" height="3.8" fill="#000"/><rect x="65.6" y="59.3" width="1.6" height="2.6" fill="#fff"/>
<rect x="69" y="50.5" width="1" height="1.2" fill="#fff"/>
<!-- print -->
<path d="M86,55 L88,49.5 H96 L95,55 Z" fill="#fff" stroke="#000" stroke-width="1"/>
<path d="M83.6,56 L86,54 H96.5 L98.6,56 V60.5 L96.5,62.5 H85.5 L83.6,60.5 Z" fill="#fff" stroke="#000" stroke-width="1"/>
<line x1="83.6" y1="58.6" x2="96.5" y2="58.6" stroke="#000" stroke-width="1"/><line x1="84.5" y1="61" x2="96" y2="61" stroke="#000" stroke-width="1"/>
<rect x="90" y="59.2" width="3" height="1" fill="#e8d000"/>
<line x1="88.8" y1="51.3" x2="94.8" y2="51.3" stroke="#000" stroke-width=".8"/><line x1="88.3" y1="53" x2="94.3" y2="53" stroke="#000" stroke-width=".8"/>
<!-- undo -->
<path d="M123.5,55.8 Q127,51.5 130.2,54 Q132.8,56.5 130.4,59.8" fill="none" stroke="#000090" stroke-width="1.5"/>
<path d="M120.2,53.5 V58.8 H125.6 Z" fill="#000090"/>
<!-- redo -->
<path d="M156.6,55.8 Q153,51.5 149.8,54 Q147.2,56.5 149.6,59.8" fill="none" stroke="#a4a4a4" stroke-width="1.5"/>
<path d="M159.8,53.5 V58.8 H154.4 Z" fill="#a4a4a4"/>
<g fill="none" stroke="#9c9c9c" stroke-width="1.1">
<!-- scissors -->
<path d="M185.2,49.5 L189,58 M190.8,49.5 L187,58"/><circle cx="185.2" cy="60.3" r="1.9"/><circle cx="190.8" cy="60.3" r="1.9"/>
<!-- copy -->
<path d="M207.5,49.5 H212.5 L214.5,51.5 V58.5 H207.5 Z M212.5,53 H217.5 L219.5,55 V62 H212.5 Z" fill="#f4f4f4"/>
<path d="M209,52.5 H213 M209,54.5 H212 M209,56.5 H212 M214,57 H218 M214,59 H218" stroke-width=".9"/>
</g>
<!-- paste -->
<path d="M234.5,51.5 H238.5 V50 H242.5 V51.5 H246.5 V61.5 H234.5 Z" fill="#9c9c9c"/>
<rect x="241" y="56.5" width="8" height="6" fill="#f4f4f4" stroke="#9c9c9c" stroke-width="1"/><path d="M243,59 H247 M243,61 H247" stroke="#9c9c9c" stroke-width=".9"/>
<!-- trash -->
<path d="M263,52 H275 V53.5 H263 Z M266.5,50 H271.5 V52 H266.5 Z M264,54 H274 L273.3,63 H264.7 Z" fill="#9c9c9c"/>
<path d="M266.5,55 V62 M269,55 V62 M271.5,55 V62" stroke="#e8e8e8" stroke-width=".8"/>
<!-- x2 -->
<text x="294.5" y="61.5" font-size="14" font-weight="bold" fill="#9c9c9c" stroke="#9c9c9c" stroke-width=".4" font-family="Liberation Sans, sans-serif">×2</text>
<!-- rotate -->
<path d="M338.8,54 A6.2,6.2 0 1 0 340.3,59.5" fill="none" stroke="#9c9c9c" stroke-width="2.6"/>
<path d="M336,50 H341.6 V55.6 Z" fill="#9c9c9c"/>
<path d="M351,54.5 H357.5 L354.25,58 Z" fill="#606060"/>
<g fill="none" stroke="#9c9c9c" stroke-width="1.6">
<!-- mirror h -->
<circle cx="366" cy="50.8" r="1.6"/><circle cx="366" cy="62" r="1.6"/><circle cx="379.5" cy="50.8" r="1.6"/><circle cx="379.5" cy="62" r="1.6"/>
<path d="M366,52.4 L367.5,54 V59 L366,60.5 M379.5,52.4 L378,54 V59 L379.5,60.5 M372.8,48.5 V64 M369,56.5 H376.5"/>
<!-- mirror v -->
<circle cx="393.8" cy="50" r="1.6"/><circle cx="406.5" cy="50" r="1.6"/><circle cx="393.8" cy="63.2" r="1.6"/><circle cx="406.5" cy="63.2" r="1.6"/>
<path d="M395.4,50 L397,51.5 H403.5 L405,50 M395.4,63.2 L397,61.7 H403.5 L405,63.2 M392,56.6 H408.5 M400.2,53 V60.5"/>
<!-- layer swap -->
<rect x="424.5" y="49.5" width="9" height="5.5" stroke-width="1"/><path d="M421,60 L429,56.5 L437,60 L429,63.5 Z" stroke-width="1"/>
<path d="M420.5,51 V58 M436.5,53 V59" stroke-width="1"/>
<!-- snap -->
<circle cx="454" cy="56.5" r="3" stroke-width="1.8"/>
<path d="M454,47.5 V52.5 M454,60.5 V65.5 M445,56.5 H450 M458,56.5 H463 M447,49.5 L450.5,53 M461,49.5 L457.5,53 M447,63.5 L450.5,60 M461,63.5 L457.5,60" stroke-width="1"/>
<!-- route -->
<circle cx="483.8" cy="49.5" r="1.6"/><circle cx="483.8" cy="56.2" r="1.6"/><circle cx="483.8" cy="63.5" r="1.6"/><circle cx="495.5" cy="55.5" r="1.6"/>
<path d="M485.2,50.3 L494,54.8 M485.4,56.2 H493.9 M485.4,63.5 H495.5 V57.1"/>
<!-- locks -->
<path d="M518.8,56 V53.5 A3.7,3.7 0 0 1 526.2,53.5 V56" stroke-width="1.4"/>
<path d="M549.8,56 V53.5 A3.7,3.7 0 0 1 557.2,53.5 V56" stroke-width="1.4"/>
<path d="M545,49.5 L548,52 M544,53 H547 M548.5,48 L549.5,51" stroke-width=".9"/>
</g>
<rect x="516.5" y="56" width="12" height="7.5" rx="1.5" fill="#b4b4b4"/><path d="M517,58.7 H528 M519.5,61 H521.5 M523.5,61 H525.5" stroke="#f0f0f0" stroke-width="1"/>
<rect x="547.5" y="56" width="12" height="7.5" rx="1.5" fill="#b4b4b4"/><path d="M548,58.7 H559 M550.5,61 H552.5 M554.5,61 H556.5" stroke="#f0f0f0" stroke-width="1"/>
<!-- magnifier -->
<circle cx="585" cy="55.6" r="6.6" fill="#f4f07c" stroke="#000" stroke-width="1.4"/>
<path d="M589.8,60.5 L595.5,65" stroke="#000" stroke-width="2.8" stroke-linecap="round"/>
<!-- crosshair green -->
<path d="M617.5,46 V59.5 H631" fill="none" stroke="#008000" stroke-width="2.2"/>
<path d="M611,52.7 H624.5 V66" fill="none" stroke="#0000e0" stroke-width="2.2"/>
<rect x="616.4" y="51.6" width="2.2" height="2.2" fill="#00e8e8"/><rect x="623.4" y="58.4" width="2.2" height="2.2" fill="#00e8e8"/>
<!-- info -->
<circle cx="648.2" cy="56.2" r="9.2" fill="#0000e6"/>
<text x="648.2" y="63.2" font-size="18" font-weight="bold" fill="#fff" text-anchor="middle" font-family="Liberation Serif, serif">i</text>
<!-- grid -->
<rect x="672" y="45" width="21.5" height="22" fill="#dcdcdc"/>
<g fill="#000">
<circle cx="682.7" cy="56" r="10.3"/>
</g>
<g stroke="#dcdcdc" stroke-width="1">
<path d="M675.2,45 V67 M677.7,45 V67 M680.2,45 V67 M682.7,45 V67 M685.2,45 V67 M687.7,45 V67 M690.2,45 V67 M672,48.5 H694 M672,51 H694 M672,53.5 H694 M672,56 H694 M672,58.5 H694 M672,61 H694 M672,63.5 H694"/>
</g>
<circle cx="682.7" cy="56" r="3.2" fill="#e8e8e8"/><circle cx="682.7" cy="56" r="1.2" fill="#000"/>
<!-- cursor -->
<path d="M6.5,79.5 V92 L9.5,89.3 L11.6,94 L13.4,93.2 L11.3,88.6 L15.3,88.3 Z" fill="#fff" stroke="#000" stroke-width="1"/>
<!-- zoom -->
<circle cx="10.5" cy="111" r="5.3" fill="#e8eef4" stroke="#000" stroke-width="1.3"/><path d="M14.3,115 L18.5,118.8" stroke="#000" stroke-width="2.4" stroke-linecap="round"/>
<!-- line -->
<path d="M5,141.5 H9 L13.5,135.5 H17.5" fill="none" stroke="#000" stroke-width="2.6"/>
<!-- pad THT -->
<circle cx="11" cy="164" r="4.7" fill="none" stroke="#000" stroke-width="3.4"/>
<path d="M79.5,162 H88.5 L84,167 Z" fill="#303030"/>
<!-- SMD -->
<rect x="7.8" y="184" width="5.6" height="11.8" fill="#000"/>
<!-- circle -->
<circle cx="10.8" cy="215.8" r="5.6" fill="none" stroke="#000" stroke-width="1.8"/>
<!-- rect -->
<rect x="4.9" y="236.7" width="12.4" height="9.4" fill="#fff" stroke="#000" stroke-width="1.8"/>
<path d="M79.5,240 H88.5 L84,245 Z" fill="#303030"/>
<!-- polygon -->
<path d="M4.5,268.5 L12.5,262 H17.5 V273.5 H9.5 Z" fill="#000"/>
<!-- figure -->
<path d="M5.5,286.5 L8.5,289.5 L5.5,292.5 L2.8,289.5 Z" fill="none" stroke="#000" stroke-width="1.3" transform="translate(1.2,0)"/>
<path d="M13.5,297.5 A2,2 0 1 1 13.6,297.5 M13.5,299.8 A4.3,4.3 0 1 1 17.6,296.5" fill="none" stroke="#000" stroke-width="1.2"/>
<!-- text -->
<text x="2.5" y="325.5" font-size="12.5" font-weight="bold" fill="#000" font-family="Liberation Sans, sans-serif">ab</text><path d="M18.7,314 V329" stroke="#000" stroke-width="1.2"/>
<!-- mask -->
<circle cx="11" cy="346" r="3.7" fill="#fff" stroke="#e80000" stroke-width="3.8"/>
<!-- link -->
<circle cx="5.5" cy="366.5" r="1.9" fill="#000"/><circle cx="15.6" cy="376.6" r="2.3" fill="#fff" stroke="#000" stroke-width="1.3"/><path d="M6.8,367.8 L14,375" stroke="#000" stroke-width="1.1"/>
<!-- autoroute A -->
<text x="2.2" y="405" font-size="20" font-weight="bold" fill="#5a94c8" stroke="#2c5e90" stroke-width=".5" font-family="Liberation Sans, sans-serif">A</text>
<!-- control -->
<path d="M4,418 L8,417.5 L17.5,427.5 L15,430.5 Z" fill="#303030"/><path d="M9.5,421.5 L14.5,427" stroke="#30c030" stroke-width="1.4"/><path d="M2.5,416.5 L5,419" stroke="#000" stroke-width="1"/><path d="M12,426 L14,428.3" stroke="#e00000" stroke-width="1.4"/>
<!-- measure -->
<path d="M2.5,445.5 H19" stroke="#000" stroke-width="1.2"/><path d="M3,455.5 H19 M4.5,455.5 V452 M7.5,455.5 V453.5 M10.5,455.5 V452 M13.5,455.5 V453.5 M16.5,455.5 V452" stroke="#000" stroke-width="1"/>

</svg>
</body></html>
